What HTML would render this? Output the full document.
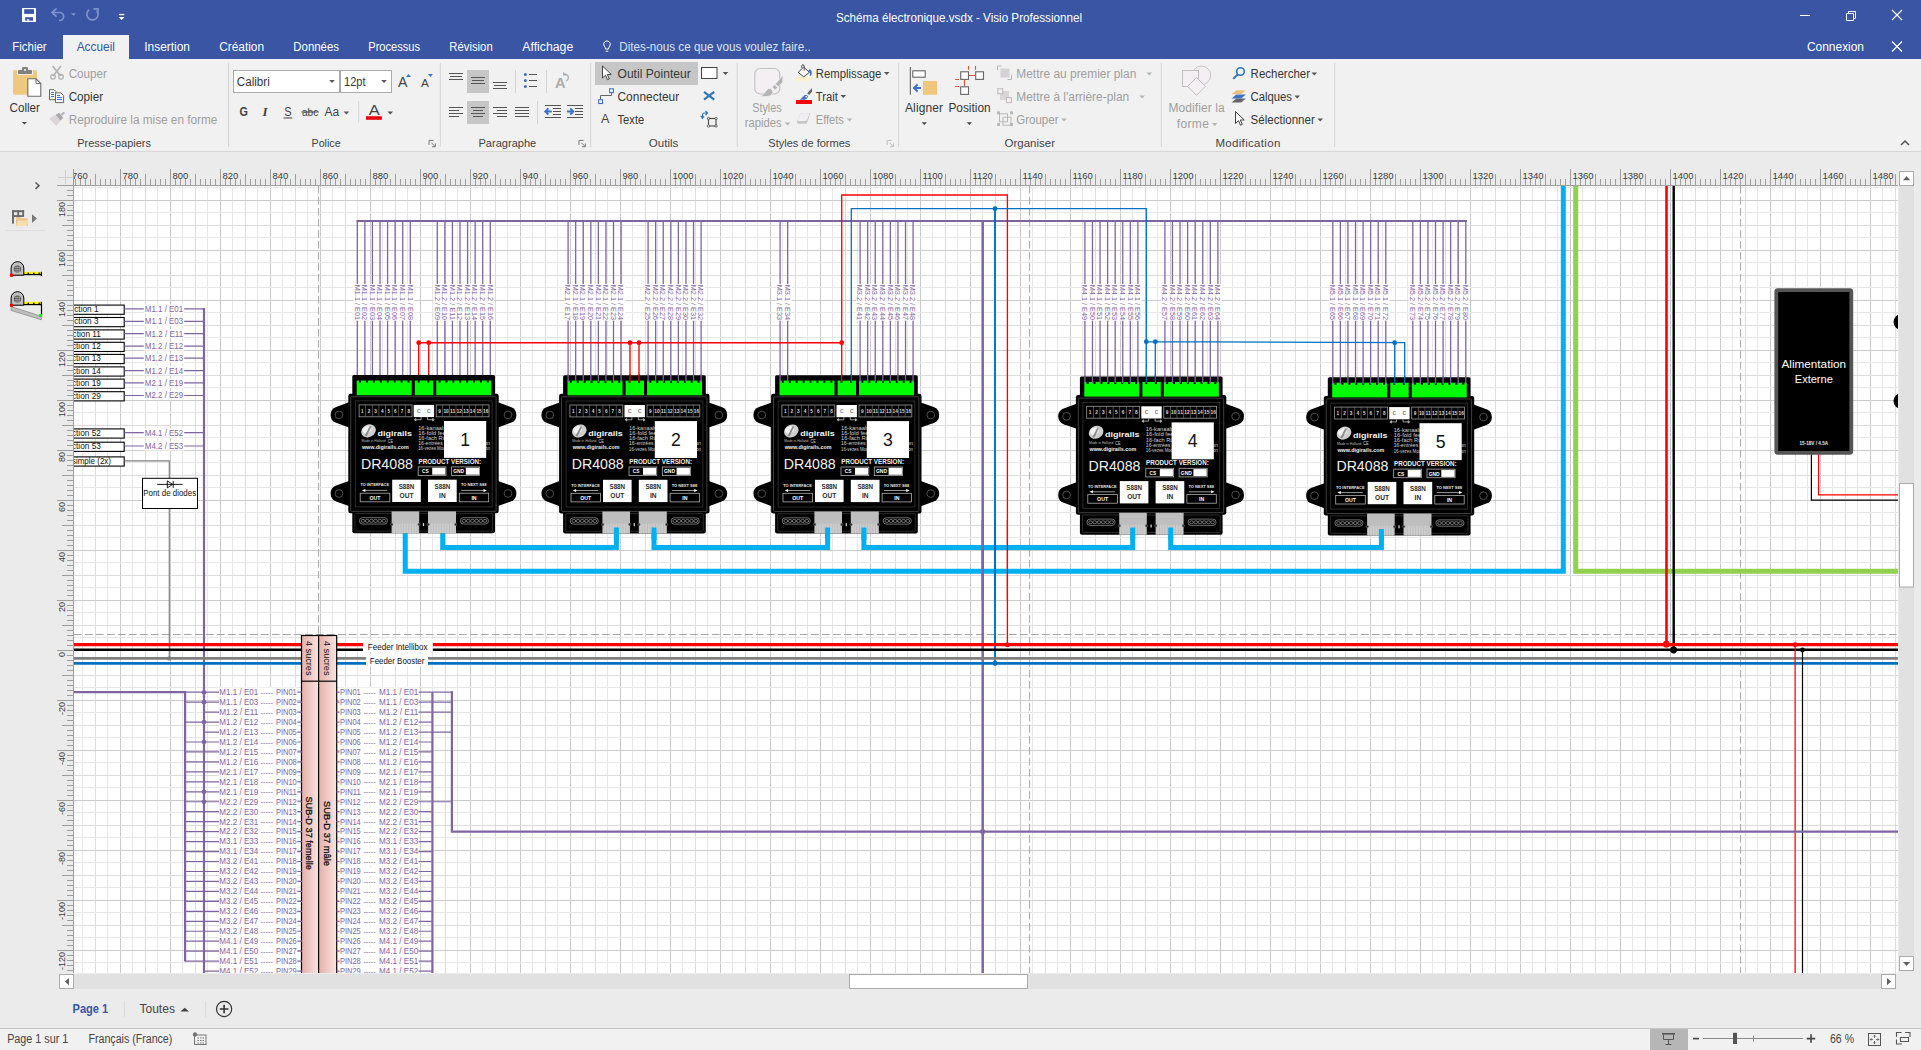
<!DOCTYPE html>
<html lang="fr"><head><meta charset="utf-8"><title>Schéma électronique.vsdx - Visio Professionnel</title>
<style>html,body{margin:0;padding:0;background:#EBEBEB;overflow:hidden}svg{display:block}text{font-family:"Liberation Sans",sans-serif;white-space:pre}</style></head><body>
<svg width="1921" height="1050" viewBox="0 0 1921 1050">
<defs><clipPath id="cv"><rect x="74" y="186" width="1824" height="787"/></clipPath><clipPath id="rclip"><rect x="74" y="165" width="1830" height="21"/></clipPath>
<g id="dr">
<path d="M-3.40,27.25 L-16.18,31.91 A8.4,8.4 0 0 0 -16.18,47.69 L-3.40,52.35 Z" fill="#000"/><circle cx="-13.30" cy="39.80" r="3.85" fill="#000" stroke="#666" stroke-width="0.75"/>
<path d="M145.80,27.25 L158.58,31.91 A8.4,8.4 0 0 1 158.58,47.69 L145.80,52.35 Z" fill="#000"/><circle cx="155.70" cy="39.80" r="3.85" fill="#000" stroke="#666" stroke-width="0.75"/>
<path d="M-3.40,105.85 L-16.18,110.51 A8.4,8.4 0 0 0 -16.18,126.29 L-3.40,130.95 Z" fill="#000"/><circle cx="-13.30" cy="118.40" r="3.85" fill="#000" stroke="#666" stroke-width="0.75"/>
<path d="M145.80,105.85 L158.58,110.51 A8.4,8.4 0 0 1 158.58,126.29 L145.80,130.95 Z" fill="#000"/><circle cx="155.70" cy="118.40" r="3.85" fill="#000" stroke="#666" stroke-width="0.75"/>
<rect x="0.00" y="0.00" width="142.70" height="22.00" fill="#000" rx="1.5"/>
<rect x="-4.00" y="18.60" width="150.40" height="119.60" fill="#000" rx="2.2"/>
<rect x="0.00" y="136.00" width="142.70" height="22.20" fill="#000" rx="2"/>
<rect x="-1.60" y="21.60" width="145.40" height="114.60" fill="none" stroke="#5A5A5A" stroke-width="0.7" rx="1"/>
<rect x="3.00" y="25.80" width="136.80" height="106.00" fill="none" stroke="#3C3C3C" stroke-width="0.7"/>
<rect x="2.60" y="138.50" width="137.60" height="17.50" fill="none" stroke="#3C3C3C" stroke-width="0.7" rx="1"/>
<rect x="4.40" y="5.40" width="55.00" height="14.70" fill="#00FF00"/>
<rect x="62.50" y="5.40" width="18.40" height="14.70" fill="#00FF00"/>
<rect x="83.95" y="5.40" width="55.00" height="14.70" fill="#00FF00"/>
<path d="M6.70,5.2 h2 v2.3 h-2 z M13.63,5.2 h2 v2.3 h-2 z M20.56,5.2 h2 v2.3 h-2 z M27.49,5.2 h2 v2.3 h-2 z M34.42,5.2 h2 v2.3 h-2 z M41.35,5.2 h2 v2.3 h-2 z M48.28,5.2 h2 v2.3 h-2 z M55.21,5.2 h2 v2.3 h-2 z M65.40,5.2 h2 v2.3 h-2 z M75.00,5.2 h2 v2.3 h-2 z M86.30,5.2 h2 v2.3 h-2 z M93.18,5.2 h2 v2.3 h-2 z M100.06,5.2 h2 v2.3 h-2 z M106.94,5.2 h2 v2.3 h-2 z M113.82,5.2 h2 v2.3 h-2 z M120.70,5.2 h2 v2.3 h-2 z M127.58,5.2 h2 v2.3 h-2 z M134.46,5.2 h2 v2.3 h-2 z" fill="#000"/>
<rect x="6.80" y="29.80" width="52.90" height="11.90" fill="none" stroke="#9A9A9A" stroke-width="0.8"/>
<rect x="83.90" y="29.80" width="52.80" height="11.90" fill="none" stroke="#9A9A9A" stroke-width="0.8"/>
<rect x="13.11" y="29.80" width="0.60" height="11.90" fill="#777"/>
<rect x="90.20" y="29.80" width="0.60" height="11.90" fill="#777"/>
<rect x="19.72" y="29.80" width="0.60" height="11.90" fill="#777"/>
<rect x="96.80" y="29.80" width="0.60" height="11.90" fill="#777"/>
<rect x="26.33" y="29.80" width="0.60" height="11.90" fill="#777"/>
<rect x="103.40" y="29.80" width="0.60" height="11.90" fill="#777"/>
<rect x="32.94" y="29.80" width="0.60" height="11.90" fill="#777"/>
<rect x="110.00" y="29.80" width="0.60" height="11.90" fill="#777"/>
<rect x="39.55" y="29.80" width="0.60" height="11.90" fill="#777"/>
<rect x="116.60" y="29.80" width="0.60" height="11.90" fill="#777"/>
<rect x="46.16" y="29.80" width="0.60" height="11.90" fill="#777"/>
<rect x="123.20" y="29.80" width="0.60" height="11.90" fill="#777"/>
<rect x="52.77" y="29.80" width="0.60" height="11.90" fill="#777"/>
<rect x="129.80" y="29.80" width="0.60" height="11.90" fill="#777"/>
<text x="10.1" y="37.9" font-size="4.7" fill="#DADADA" text-anchor="middle" font-weight="bold">1</text>
<text x="87.2" y="37.9" font-size="4.7" fill="#DADADA" text-anchor="middle" font-weight="bold">9</text>
<text x="16.7" y="37.9" font-size="4.7" fill="#DADADA" text-anchor="middle" font-weight="bold">2</text>
<text x="93.8" y="37.9" font-size="4.5" fill="#DADADA" text-anchor="middle" font-weight="bold" textLength="5.4" lengthAdjust="spacingAndGlyphs">10</text>
<text x="23.3" y="37.9" font-size="4.7" fill="#DADADA" text-anchor="middle" font-weight="bold">3</text>
<text x="100.4" y="37.9" font-size="4.5" fill="#DADADA" text-anchor="middle" font-weight="bold" textLength="5.4" lengthAdjust="spacingAndGlyphs">11</text>
<text x="29.9" y="37.9" font-size="4.7" fill="#DADADA" text-anchor="middle" font-weight="bold">4</text>
<text x="107.0" y="37.9" font-size="4.5" fill="#DADADA" text-anchor="middle" font-weight="bold" textLength="5.4" lengthAdjust="spacingAndGlyphs">12</text>
<text x="36.5" y="37.9" font-size="4.7" fill="#DADADA" text-anchor="middle" font-weight="bold">5</text>
<text x="113.6" y="37.9" font-size="4.5" fill="#DADADA" text-anchor="middle" font-weight="bold" textLength="5.4" lengthAdjust="spacingAndGlyphs">13</text>
<text x="43.1" y="37.9" font-size="4.7" fill="#DADADA" text-anchor="middle" font-weight="bold">6</text>
<text x="120.2" y="37.9" font-size="4.5" fill="#DADADA" text-anchor="middle" font-weight="bold" textLength="5.4" lengthAdjust="spacingAndGlyphs">14</text>
<text x="49.8" y="37.9" font-size="4.7" fill="#DADADA" text-anchor="middle" font-weight="bold">7</text>
<text x="126.8" y="37.9" font-size="4.5" fill="#DADADA" text-anchor="middle" font-weight="bold" textLength="5.4" lengthAdjust="spacingAndGlyphs">15</text>
<text x="56.4" y="37.9" font-size="4.7" fill="#DADADA" text-anchor="middle" font-weight="bold">8</text>
<text x="133.4" y="37.9" font-size="4.5" fill="#DADADA" text-anchor="middle" font-weight="bold" textLength="5.4" lengthAdjust="spacingAndGlyphs">16</text>
<rect x="61.40" y="29.80" width="20.40" height="12.20" fill="#fff"/>
<text x="66.6" y="37.9" font-size="5" fill="#7A7A7A" text-anchor="middle" font-weight="bold">C</text>
<text x="76.6" y="37.9" font-size="5" fill="#7A7A7A" text-anchor="middle" font-weight="bold">C</text>
<path d="M68.8,42 v2.6 h-6 M63.6,43.4 l-1.6,1.2 l1.6,1.2 z M75.2,42 v2.6 h6 M80.4,43.4 l1.6,1.2 l-1.6,1.2 z" fill="none" stroke="#ddd" stroke-width="0.7"/>
<ellipse cx="16.2" cy="55.8" rx="7.6" ry="6.2" fill="#CFCFCF" transform="rotate(-28 16.2 55.8)"/>
<ellipse cx="14.6" cy="54.6" rx="4.6" ry="3.4" fill="#F2F2F2" transform="rotate(-28 14.6 54.6)"/>
<path d="M12.5,60.5 l5,-9.5 l1.6,0.6 l-4.6,9.6 z" fill="#8C8C8C"/>
<text x="25.2" y="60.7" font-size="8" fill="#F4F4F4" font-weight="bold" textLength="34.4" lengthAdjust="spacingAndGlyphs">digirails</text>
<text x="9.2" y="67.3" font-size="3.1" fill="#BDBDBD" textLength="24.2" lengthAdjust="spacingAndGlyphs">Made in Holland</text>
<text x="35.4" y="68.1" font-size="4.6" fill="#CFCFCF" textLength="5.4" lengthAdjust="spacingAndGlyphs">CE</text>
<text x="9.6" y="74.3" font-size="5.4" fill="#F0F0F0" font-weight="bold" textLength="46.8" lengthAdjust="spacingAndGlyphs">www.digirails.com</text>
<text x="65.9" y="54.8" font-size="4.7" fill="#D0D0D0" textLength="60.0" lengthAdjust="spacingAndGlyphs">16-kanaals terugmelder</text>
<text x="65.9" y="59.9" font-size="4.7" fill="#D0D0D0" textLength="64.0" lengthAdjust="spacingAndGlyphs">16-fold feedback module</text>
<text x="65.9" y="65.1" font-size="4.7" fill="#D0D0D0" textLength="64.0" lengthAdjust="spacingAndGlyphs">16-fach Rückmeldemodul</text>
<text x="65.9" y="70.2" font-size="4.7" fill="#D0D0D0" textLength="72.0" lengthAdjust="spacingAndGlyphs">16-entrées de rétrosignalisation</text>
<text x="65.9" y="75.4" font-size="4.7" fill="#D0D0D0" textLength="72.0" lengthAdjust="spacingAndGlyphs">16-vezes Modulo de retrosinalizacion</text>
<text x="8.6" y="94.2" font-size="14.6" fill="#F2F2F2" textLength="52.0" lengthAdjust="spacingAndGlyphs">DR4088</text>
<text x="66.2" y="88.9" font-size="6.4" fill="#F2F2F2" font-weight="bold" textLength="62.7" lengthAdjust="spacingAndGlyphs">PRODUCT VERSION:</text>
<rect x="65.90" y="91.80" width="27.80" height="8.60" fill="none" stroke="#B0B0B0" stroke-width="0.8"/>
<rect x="79.90" y="92.60" width="13.10" height="7.00" fill="#fff"/>
<text x="73.0" y="98.3" font-size="4.8" fill="#fff" text-anchor="middle" font-weight="bold">CS</text>
<rect x="99.20" y="91.80" width="28.10" height="8.60" fill="none" stroke="#B0B0B0" stroke-width="0.8"/>
<rect x="113.50" y="92.60" width="13.30" height="7.00" fill="#fff"/>
<text x="106.4" y="98.3" font-size="4.8" fill="#fff" text-anchor="middle" font-weight="bold" textLength="11.0" lengthAdjust="spacingAndGlyphs">GND</text>
<rect x="39.90" y="104.60" width="28.60" height="22.30" fill="#fff"/>
<text x="54.2" y="113.9" font-size="6.6" fill="#2A2A2A" text-anchor="middle" font-weight="bold" textLength="15.6" lengthAdjust="spacingAndGlyphs">S88N</text>
<text x="54.2" y="122.6" font-size="6.6" fill="#2A2A2A" text-anchor="middle" font-weight="bold">OUT</text>
<rect x="75.70" y="104.60" width="28.70" height="22.30" fill="#fff"/>
<text x="90.1" y="113.9" font-size="6.6" fill="#2A2A2A" text-anchor="middle" font-weight="bold" textLength="15.6" lengthAdjust="spacingAndGlyphs">S88N</text>
<text x="90.1" y="122.6" font-size="6.6" fill="#2A2A2A" text-anchor="middle" font-weight="bold">IN</text>
<text x="8.1" y="111.4" font-size="3.9" fill="#E6E6E6" font-weight="bold" textLength="28.6" lengthAdjust="spacingAndGlyphs">TO INTERFACE</text>
<path d="M12,115.3 H35" fill="none" stroke="#ddd" stroke-width="0.7"/>
<path d="M9.6,115.3 l3.4,-1.5 v3 z" fill="#fff"/>
<rect x="7.90" y="118.10" width="29.60" height="8.60" fill="none" stroke="#B0B0B0" stroke-width="0.8"/>
<text x="22.7" y="124.6" font-size="5.2" fill="#fff" text-anchor="middle" font-weight="bold">OUT</text>
<text x="108.6" y="111.4" font-size="3.9" fill="#E6E6E6" font-weight="bold" textLength="25.5" lengthAdjust="spacingAndGlyphs">TO NEXT S88</text>
<path d="M109,115.3 H132" fill="none" stroke="#ddd" stroke-width="0.7"/>
<path d="M134.6,115.3 l-3.4,-1.5 v3 z" fill="#fff"/>
<rect x="107.00" y="118.10" width="29.40" height="8.60" fill="none" stroke="#B0B0B0" stroke-width="0.8"/>
<text x="121.7" y="124.6" font-size="5.2" fill="#fff" text-anchor="middle" font-weight="bold">IN</text>
<rect x="39.30" y="136.30" width="27.60" height="21.90" fill="#BEBEBE"/>
<rect x="40.50" y="148.50" width="0.60" height="9.70" fill="#D6D6D6"/><rect x="42.10" y="148.50" width="0.60" height="9.70" fill="#D6D6D6"/><rect x="43.70" y="148.50" width="0.60" height="9.70" fill="#D6D6D6"/><rect x="45.30" y="148.50" width="0.60" height="9.70" fill="#D6D6D6"/><rect x="46.90" y="148.50" width="0.60" height="9.70" fill="#D6D6D6"/><rect x="48.50" y="148.50" width="0.60" height="9.70" fill="#D6D6D6"/><rect x="50.10" y="148.50" width="0.60" height="9.70" fill="#D6D6D6"/><rect x="51.70" y="148.50" width="0.60" height="9.70" fill="#D6D6D6"/><rect x="53.30" y="148.50" width="0.60" height="9.70" fill="#D6D6D6"/><rect x="54.90" y="148.50" width="0.60" height="9.70" fill="#D6D6D6"/><rect x="56.50" y="148.50" width="0.60" height="9.70" fill="#D6D6D6"/><rect x="58.10" y="148.50" width="0.60" height="9.70" fill="#D6D6D6"/><rect x="59.70" y="148.50" width="0.60" height="9.70" fill="#D6D6D6"/><rect x="61.30" y="148.50" width="0.60" height="9.70" fill="#D6D6D6"/><rect x="62.90" y="148.50" width="0.60" height="9.70" fill="#D6D6D6"/><rect x="64.50" y="148.50" width="0.60" height="9.70" fill="#D6D6D6"/>
<circle cx="39.50" cy="149.30" r="1.20" fill="#222" stroke="#777" stroke-width="0.5"/>
<circle cx="66.70" cy="149.30" r="1.20" fill="#222" stroke="#777" stroke-width="0.5"/>
<rect x="75.70" y="136.30" width="28.00" height="21.90" fill="#BEBEBE"/>
<rect x="76.90" y="148.50" width="0.60" height="9.70" fill="#D6D6D6"/><rect x="78.50" y="148.50" width="0.60" height="9.70" fill="#D6D6D6"/><rect x="80.10" y="148.50" width="0.60" height="9.70" fill="#D6D6D6"/><rect x="81.70" y="148.50" width="0.60" height="9.70" fill="#D6D6D6"/><rect x="83.30" y="148.50" width="0.60" height="9.70" fill="#D6D6D6"/><rect x="84.90" y="148.50" width="0.60" height="9.70" fill="#D6D6D6"/><rect x="86.50" y="148.50" width="0.60" height="9.70" fill="#D6D6D6"/><rect x="88.10" y="148.50" width="0.60" height="9.70" fill="#D6D6D6"/><rect x="89.70" y="148.50" width="0.60" height="9.70" fill="#D6D6D6"/><rect x="91.30" y="148.50" width="0.60" height="9.70" fill="#D6D6D6"/><rect x="92.90" y="148.50" width="0.60" height="9.70" fill="#D6D6D6"/><rect x="94.50" y="148.50" width="0.60" height="9.70" fill="#D6D6D6"/><rect x="96.10" y="148.50" width="0.60" height="9.70" fill="#D6D6D6"/><rect x="97.70" y="148.50" width="0.60" height="9.70" fill="#D6D6D6"/><rect x="99.30" y="148.50" width="0.60" height="9.70" fill="#D6D6D6"/><rect x="100.90" y="148.50" width="0.60" height="9.70" fill="#D6D6D6"/><rect x="102.50" y="148.50" width="0.60" height="9.70" fill="#D6D6D6"/>
<circle cx="75.90" cy="149.30" r="1.20" fill="#222" stroke="#777" stroke-width="0.5"/>
<circle cx="103.50" cy="149.30" r="1.20" fill="#222" stroke="#777" stroke-width="0.5"/>
<rect x="70.60" y="148.00" width="1.20" height="3.00" fill="#ddd"/>
<rect x="7.10" y="142.60" width="28.10" height="6.30" fill="none" stroke="#8A8A8A" stroke-width="0.8" rx="3.1"/>
<ellipse cx="10.7" cy="145.75" rx="1.9" ry="1.5" fill="none" stroke="#9A9A9A" stroke-width="0.7"/>
<ellipse cx="14.9" cy="145.75" rx="1.9" ry="1.5" fill="none" stroke="#9A9A9A" stroke-width="0.7"/>
<ellipse cx="19.1" cy="145.75" rx="1.9" ry="1.5" fill="none" stroke="#9A9A9A" stroke-width="0.7"/>
<ellipse cx="23.3" cy="145.75" rx="1.9" ry="1.5" fill="none" stroke="#9A9A9A" stroke-width="0.7"/>
<ellipse cx="27.5" cy="145.75" rx="1.9" ry="1.5" fill="none" stroke="#9A9A9A" stroke-width="0.7"/>
<ellipse cx="31.7" cy="145.75" rx="1.9" ry="1.5" fill="none" stroke="#9A9A9A" stroke-width="0.7"/>
<rect x="108.10" y="142.60" width="28.10" height="6.30" fill="none" stroke="#8A8A8A" stroke-width="0.8" rx="3.1"/>
<ellipse cx="111.7" cy="145.75" rx="1.9" ry="1.5" fill="none" stroke="#9A9A9A" stroke-width="0.7"/>
<ellipse cx="115.9" cy="145.75" rx="1.9" ry="1.5" fill="none" stroke="#9A9A9A" stroke-width="0.7"/>
<ellipse cx="120.1" cy="145.75" rx="1.9" ry="1.5" fill="none" stroke="#9A9A9A" stroke-width="0.7"/>
<ellipse cx="124.3" cy="145.75" rx="1.9" ry="1.5" fill="none" stroke="#9A9A9A" stroke-width="0.7"/>
<ellipse cx="128.5" cy="145.75" rx="1.9" ry="1.5" fill="none" stroke="#9A9A9A" stroke-width="0.7"/>
<ellipse cx="132.7" cy="145.75" rx="1.9" ry="1.5" fill="none" stroke="#9A9A9A" stroke-width="0.7"/>
</g>
</defs>
<rect x="0.00" y="152.00" width="1921.00" height="898.00" fill="#EBEBEB"/>
<rect x="74.00" y="186.00" width="1824.00" height="787.00" fill="#fff"/>
<g shape-rendering="crispEdges"><rect x="82.00" y="186.00" width="1.00" height="787.00" fill="#E7E7E7"/><rect x="95.00" y="186.00" width="1.00" height="787.00" fill="#DCDCDC"/><rect x="107.00" y="186.00" width="1.00" height="787.00" fill="#E7E7E7"/><rect x="120.00" y="186.00" width="1.00" height="787.00" fill="#CACACA"/><rect x="132.00" y="186.00" width="1.00" height="787.00" fill="#E7E7E7"/><rect x="145.00" y="186.00" width="1.00" height="787.00" fill="#DCDCDC"/><rect x="157.00" y="186.00" width="1.00" height="787.00" fill="#E7E7E7"/><rect x="170.00" y="186.00" width="1.00" height="787.00" fill="#CACACA"/><rect x="182.00" y="186.00" width="1.00" height="787.00" fill="#E7E7E7"/><rect x="195.00" y="186.00" width="1.00" height="787.00" fill="#DCDCDC"/><rect x="207.00" y="186.00" width="1.00" height="787.00" fill="#E7E7E7"/><rect x="220.00" y="186.00" width="1.00" height="787.00" fill="#CACACA"/><rect x="232.00" y="186.00" width="1.00" height="787.00" fill="#E7E7E7"/><rect x="245.00" y="186.00" width="1.00" height="787.00" fill="#DCDCDC"/><rect x="257.00" y="186.00" width="1.00" height="787.00" fill="#E7E7E7"/><rect x="270.00" y="186.00" width="1.00" height="787.00" fill="#CACACA"/><rect x="282.00" y="186.00" width="1.00" height="787.00" fill="#E7E7E7"/><rect x="295.00" y="186.00" width="1.00" height="787.00" fill="#DCDCDC"/><rect x="307.00" y="186.00" width="1.00" height="787.00" fill="#E7E7E7"/><rect x="320.00" y="186.00" width="1.00" height="787.00" fill="#CACACA"/><rect x="332.00" y="186.00" width="1.00" height="787.00" fill="#E7E7E7"/><rect x="345.00" y="186.00" width="1.00" height="787.00" fill="#DCDCDC"/><rect x="357.00" y="186.00" width="1.00" height="787.00" fill="#E7E7E7"/><rect x="370.00" y="186.00" width="1.00" height="787.00" fill="#CACACA"/><rect x="382.00" y="186.00" width="1.00" height="787.00" fill="#E7E7E7"/><rect x="395.00" y="186.00" width="1.00" height="787.00" fill="#DCDCDC"/><rect x="407.00" y="186.00" width="1.00" height="787.00" fill="#E7E7E7"/><rect x="420.00" y="186.00" width="1.00" height="787.00" fill="#CACACA"/><rect x="432.00" y="186.00" width="1.00" height="787.00" fill="#E7E7E7"/><rect x="445.00" y="186.00" width="1.00" height="787.00" fill="#DCDCDC"/><rect x="457.00" y="186.00" width="1.00" height="787.00" fill="#E7E7E7"/><rect x="470.00" y="186.00" width="1.00" height="787.00" fill="#CACACA"/><rect x="482.00" y="186.00" width="1.00" height="787.00" fill="#E7E7E7"/><rect x="495.00" y="186.00" width="1.00" height="787.00" fill="#DCDCDC"/><rect x="507.00" y="186.00" width="1.00" height="787.00" fill="#E7E7E7"/><rect x="520.00" y="186.00" width="1.00" height="787.00" fill="#CACACA"/><rect x="532.00" y="186.00" width="1.00" height="787.00" fill="#E7E7E7"/><rect x="545.00" y="186.00" width="1.00" height="787.00" fill="#DCDCDC"/><rect x="557.00" y="186.00" width="1.00" height="787.00" fill="#E7E7E7"/><rect x="570.00" y="186.00" width="1.00" height="787.00" fill="#CACACA"/><rect x="582.00" y="186.00" width="1.00" height="787.00" fill="#E7E7E7"/><rect x="595.00" y="186.00" width="1.00" height="787.00" fill="#DCDCDC"/><rect x="607.00" y="186.00" width="1.00" height="787.00" fill="#E7E7E7"/><rect x="620.00" y="186.00" width="1.00" height="787.00" fill="#CACACA"/><rect x="632.00" y="186.00" width="1.00" height="787.00" fill="#E7E7E7"/><rect x="645.00" y="186.00" width="1.00" height="787.00" fill="#DCDCDC"/><rect x="657.00" y="186.00" width="1.00" height="787.00" fill="#E7E7E7"/><rect x="670.00" y="186.00" width="1.00" height="787.00" fill="#CACACA"/><rect x="682.00" y="186.00" width="1.00" height="787.00" fill="#E7E7E7"/><rect x="695.00" y="186.00" width="1.00" height="787.00" fill="#DCDCDC"/><rect x="707.00" y="186.00" width="1.00" height="787.00" fill="#E7E7E7"/><rect x="720.00" y="186.00" width="1.00" height="787.00" fill="#CACACA"/><rect x="732.00" y="186.00" width="1.00" height="787.00" fill="#E7E7E7"/><rect x="745.00" y="186.00" width="1.00" height="787.00" fill="#DCDCDC"/><rect x="757.00" y="186.00" width="1.00" height="787.00" fill="#E7E7E7"/><rect x="770.00" y="186.00" width="1.00" height="787.00" fill="#CACACA"/><rect x="782.00" y="186.00" width="1.00" height="787.00" fill="#E7E7E7"/><rect x="795.00" y="186.00" width="1.00" height="787.00" fill="#DCDCDC"/><rect x="807.00" y="186.00" width="1.00" height="787.00" fill="#E7E7E7"/><rect x="820.00" y="186.00" width="1.00" height="787.00" fill="#CACACA"/><rect x="832.00" y="186.00" width="1.00" height="787.00" fill="#E7E7E7"/><rect x="845.00" y="186.00" width="1.00" height="787.00" fill="#DCDCDC"/><rect x="857.00" y="186.00" width="1.00" height="787.00" fill="#E7E7E7"/><rect x="870.00" y="186.00" width="1.00" height="787.00" fill="#CACACA"/><rect x="882.00" y="186.00" width="1.00" height="787.00" fill="#E7E7E7"/><rect x="895.00" y="186.00" width="1.00" height="787.00" fill="#DCDCDC"/><rect x="907.00" y="186.00" width="1.00" height="787.00" fill="#E7E7E7"/><rect x="920.00" y="186.00" width="1.00" height="787.00" fill="#CACACA"/><rect x="932.00" y="186.00" width="1.00" height="787.00" fill="#E7E7E7"/><rect x="945.00" y="186.00" width="1.00" height="787.00" fill="#DCDCDC"/><rect x="957.00" y="186.00" width="1.00" height="787.00" fill="#E7E7E7"/><rect x="970.00" y="186.00" width="1.00" height="787.00" fill="#CACACA"/><rect x="982.00" y="186.00" width="1.00" height="787.00" fill="#E7E7E7"/><rect x="995.00" y="186.00" width="1.00" height="787.00" fill="#DCDCDC"/><rect x="1007.00" y="186.00" width="1.00" height="787.00" fill="#E7E7E7"/><rect x="1020.00" y="186.00" width="1.00" height="787.00" fill="#CACACA"/><rect x="1032.00" y="186.00" width="1.00" height="787.00" fill="#E7E7E7"/><rect x="1045.00" y="186.00" width="1.00" height="787.00" fill="#DCDCDC"/><rect x="1057.00" y="186.00" width="1.00" height="787.00" fill="#E7E7E7"/><rect x="1070.00" y="186.00" width="1.00" height="787.00" fill="#CACACA"/><rect x="1082.00" y="186.00" width="1.00" height="787.00" fill="#E7E7E7"/><rect x="1095.00" y="186.00" width="1.00" height="787.00" fill="#DCDCDC"/><rect x="1107.00" y="186.00" width="1.00" height="787.00" fill="#E7E7E7"/><rect x="1120.00" y="186.00" width="1.00" height="787.00" fill="#CACACA"/><rect x="1132.00" y="186.00" width="1.00" height="787.00" fill="#E7E7E7"/><rect x="1145.00" y="186.00" width="1.00" height="787.00" fill="#DCDCDC"/><rect x="1157.00" y="186.00" width="1.00" height="787.00" fill="#E7E7E7"/><rect x="1170.00" y="186.00" width="1.00" height="787.00" fill="#CACACA"/><rect x="1182.00" y="186.00" width="1.00" height="787.00" fill="#E7E7E7"/><rect x="1195.00" y="186.00" width="1.00" height="787.00" fill="#DCDCDC"/><rect x="1207.00" y="186.00" width="1.00" height="787.00" fill="#E7E7E7"/><rect x="1220.00" y="186.00" width="1.00" height="787.00" fill="#CACACA"/><rect x="1232.00" y="186.00" width="1.00" height="787.00" fill="#E7E7E7"/><rect x="1245.00" y="186.00" width="1.00" height="787.00" fill="#DCDCDC"/><rect x="1257.00" y="186.00" width="1.00" height="787.00" fill="#E7E7E7"/><rect x="1270.00" y="186.00" width="1.00" height="787.00" fill="#CACACA"/><rect x="1282.00" y="186.00" width="1.00" height="787.00" fill="#E7E7E7"/><rect x="1295.00" y="186.00" width="1.00" height="787.00" fill="#DCDCDC"/><rect x="1307.00" y="186.00" width="1.00" height="787.00" fill="#E7E7E7"/><rect x="1320.00" y="186.00" width="1.00" height="787.00" fill="#CACACA"/><rect x="1332.00" y="186.00" width="1.00" height="787.00" fill="#E7E7E7"/><rect x="1345.00" y="186.00" width="1.00" height="787.00" fill="#DCDCDC"/><rect x="1357.00" y="186.00" width="1.00" height="787.00" fill="#E7E7E7"/><rect x="1370.00" y="186.00" width="1.00" height="787.00" fill="#CACACA"/><rect x="1382.00" y="186.00" width="1.00" height="787.00" fill="#E7E7E7"/><rect x="1395.00" y="186.00" width="1.00" height="787.00" fill="#DCDCDC"/><rect x="1407.00" y="186.00" width="1.00" height="787.00" fill="#E7E7E7"/><rect x="1420.00" y="186.00" width="1.00" height="787.00" fill="#CACACA"/><rect x="1432.00" y="186.00" width="1.00" height="787.00" fill="#E7E7E7"/><rect x="1445.00" y="186.00" width="1.00" height="787.00" fill="#DCDCDC"/><rect x="1457.00" y="186.00" width="1.00" height="787.00" fill="#E7E7E7"/><rect x="1470.00" y="186.00" width="1.00" height="787.00" fill="#CACACA"/><rect x="1482.00" y="186.00" width="1.00" height="787.00" fill="#E7E7E7"/><rect x="1495.00" y="186.00" width="1.00" height="787.00" fill="#DCDCDC"/><rect x="1507.00" y="186.00" width="1.00" height="787.00" fill="#E7E7E7"/><rect x="1520.00" y="186.00" width="1.00" height="787.00" fill="#CACACA"/><rect x="1532.00" y="186.00" width="1.00" height="787.00" fill="#E7E7E7"/><rect x="1545.00" y="186.00" width="1.00" height="787.00" fill="#DCDCDC"/><rect x="1557.00" y="186.00" width="1.00" height="787.00" fill="#E7E7E7"/><rect x="1570.00" y="186.00" width="1.00" height="787.00" fill="#CACACA"/><rect x="1582.00" y="186.00" width="1.00" height="787.00" fill="#E7E7E7"/><rect x="1595.00" y="186.00" width="1.00" height="787.00" fill="#DCDCDC"/><rect x="1607.00" y="186.00" width="1.00" height="787.00" fill="#E7E7E7"/><rect x="1620.00" y="186.00" width="1.00" height="787.00" fill="#CACACA"/><rect x="1632.00" y="186.00" width="1.00" height="787.00" fill="#E7E7E7"/><rect x="1645.00" y="186.00" width="1.00" height="787.00" fill="#DCDCDC"/><rect x="1657.00" y="186.00" width="1.00" height="787.00" fill="#E7E7E7"/><rect x="1670.00" y="186.00" width="1.00" height="787.00" fill="#CACACA"/><rect x="1682.00" y="186.00" width="1.00" height="787.00" fill="#E7E7E7"/><rect x="1695.00" y="186.00" width="1.00" height="787.00" fill="#DCDCDC"/><rect x="1707.00" y="186.00" width="1.00" height="787.00" fill="#E7E7E7"/><rect x="1720.00" y="186.00" width="1.00" height="787.00" fill="#CACACA"/><rect x="1732.00" y="186.00" width="1.00" height="787.00" fill="#E7E7E7"/><rect x="1745.00" y="186.00" width="1.00" height="787.00" fill="#DCDCDC"/><rect x="1757.00" y="186.00" width="1.00" height="787.00" fill="#E7E7E7"/><rect x="1770.00" y="186.00" width="1.00" height="787.00" fill="#CACACA"/><rect x="1782.00" y="186.00" width="1.00" height="787.00" fill="#E7E7E7"/><rect x="1795.00" y="186.00" width="1.00" height="787.00" fill="#DCDCDC"/><rect x="1807.00" y="186.00" width="1.00" height="787.00" fill="#E7E7E7"/><rect x="1820.00" y="186.00" width="1.00" height="787.00" fill="#CACACA"/><rect x="1832.00" y="186.00" width="1.00" height="787.00" fill="#E7E7E7"/><rect x="1845.00" y="186.00" width="1.00" height="787.00" fill="#DCDCDC"/><rect x="1857.00" y="186.00" width="1.00" height="787.00" fill="#E7E7E7"/><rect x="1870.00" y="186.00" width="1.00" height="787.00" fill="#CACACA"/><rect x="1882.00" y="186.00" width="1.00" height="787.00" fill="#E7E7E7"/><rect x="1895.00" y="186.00" width="1.00" height="787.00" fill="#DCDCDC"/><rect x="74.00" y="962.00" width="1824.00" height="1.00" fill="#E7E7E7"/><rect x="74.00" y="950.00" width="1824.00" height="1.00" fill="#CCCCCC"/><rect x="74.00" y="937.00" width="1824.00" height="1.00" fill="#E7E7E7"/><rect x="74.00" y="925.00" width="1824.00" height="1.00" fill="#DCDCDC"/><rect x="74.00" y="912.00" width="1824.00" height="1.00" fill="#E7E7E7"/><rect x="74.00" y="900.00" width="1824.00" height="1.00" fill="#CCCCCC"/><rect x="74.00" y="887.00" width="1824.00" height="1.00" fill="#E7E7E7"/><rect x="74.00" y="875.00" width="1824.00" height="1.00" fill="#DCDCDC"/><rect x="74.00" y="862.00" width="1824.00" height="1.00" fill="#E7E7E7"/><rect x="74.00" y="850.00" width="1824.00" height="1.00" fill="#CCCCCC"/><rect x="74.00" y="837.00" width="1824.00" height="1.00" fill="#E7E7E7"/><rect x="74.00" y="825.00" width="1824.00" height="1.00" fill="#DCDCDC"/><rect x="74.00" y="812.00" width="1824.00" height="1.00" fill="#E7E7E7"/><rect x="74.00" y="800.00" width="1824.00" height="1.00" fill="#CCCCCC"/><rect x="74.00" y="787.00" width="1824.00" height="1.00" fill="#E7E7E7"/><rect x="74.00" y="775.00" width="1824.00" height="1.00" fill="#DCDCDC"/><rect x="74.00" y="762.00" width="1824.00" height="1.00" fill="#E7E7E7"/><rect x="74.00" y="750.00" width="1824.00" height="1.00" fill="#CCCCCC"/><rect x="74.00" y="737.00" width="1824.00" height="1.00" fill="#E7E7E7"/><rect x="74.00" y="725.00" width="1824.00" height="1.00" fill="#DCDCDC"/><rect x="74.00" y="712.00" width="1824.00" height="1.00" fill="#E7E7E7"/><rect x="74.00" y="700.00" width="1824.00" height="1.00" fill="#CCCCCC"/><rect x="74.00" y="687.00" width="1824.00" height="1.00" fill="#E7E7E7"/><rect x="74.00" y="675.00" width="1824.00" height="1.00" fill="#DCDCDC"/><rect x="74.00" y="662.00" width="1824.00" height="1.00" fill="#E7E7E7"/><rect x="74.00" y="650.00" width="1824.00" height="1.00" fill="#CCCCCC"/><rect x="74.00" y="637.00" width="1824.00" height="1.00" fill="#E7E7E7"/><rect x="74.00" y="625.00" width="1824.00" height="1.00" fill="#DCDCDC"/><rect x="74.00" y="612.00" width="1824.00" height="1.00" fill="#E7E7E7"/><rect x="74.00" y="600.00" width="1824.00" height="1.00" fill="#CCCCCC"/><rect x="74.00" y="587.00" width="1824.00" height="1.00" fill="#E7E7E7"/><rect x="74.00" y="575.00" width="1824.00" height="1.00" fill="#DCDCDC"/><rect x="74.00" y="562.00" width="1824.00" height="1.00" fill="#E7E7E7"/><rect x="74.00" y="550.00" width="1824.00" height="1.00" fill="#CCCCCC"/><rect x="74.00" y="537.00" width="1824.00" height="1.00" fill="#E7E7E7"/><rect x="74.00" y="525.00" width="1824.00" height="1.00" fill="#DCDCDC"/><rect x="74.00" y="512.00" width="1824.00" height="1.00" fill="#E7E7E7"/><rect x="74.00" y="500.00" width="1824.00" height="1.00" fill="#CCCCCC"/><rect x="74.00" y="487.00" width="1824.00" height="1.00" fill="#E7E7E7"/><rect x="74.00" y="475.00" width="1824.00" height="1.00" fill="#DCDCDC"/><rect x="74.00" y="462.00" width="1824.00" height="1.00" fill="#E7E7E7"/><rect x="74.00" y="450.00" width="1824.00" height="1.00" fill="#CCCCCC"/><rect x="74.00" y="437.00" width="1824.00" height="1.00" fill="#E7E7E7"/><rect x="74.00" y="425.00" width="1824.00" height="1.00" fill="#DCDCDC"/><rect x="74.00" y="412.00" width="1824.00" height="1.00" fill="#E7E7E7"/><rect x="74.00" y="400.00" width="1824.00" height="1.00" fill="#CCCCCC"/><rect x="74.00" y="387.00" width="1824.00" height="1.00" fill="#E7E7E7"/><rect x="74.00" y="375.00" width="1824.00" height="1.00" fill="#DCDCDC"/><rect x="74.00" y="362.00" width="1824.00" height="1.00" fill="#E7E7E7"/><rect x="74.00" y="350.00" width="1824.00" height="1.00" fill="#CCCCCC"/><rect x="74.00" y="337.00" width="1824.00" height="1.00" fill="#E7E7E7"/><rect x="74.00" y="325.00" width="1824.00" height="1.00" fill="#DCDCDC"/><rect x="74.00" y="312.00" width="1824.00" height="1.00" fill="#E7E7E7"/><rect x="74.00" y="300.00" width="1824.00" height="1.00" fill="#CCCCCC"/><rect x="74.00" y="287.00" width="1824.00" height="1.00" fill="#E7E7E7"/><rect x="74.00" y="275.00" width="1824.00" height="1.00" fill="#DCDCDC"/><rect x="74.00" y="262.00" width="1824.00" height="1.00" fill="#E7E7E7"/><rect x="74.00" y="250.00" width="1824.00" height="1.00" fill="#CCCCCC"/><rect x="74.00" y="237.00" width="1824.00" height="1.00" fill="#E7E7E7"/><rect x="74.00" y="225.00" width="1824.00" height="1.00" fill="#DCDCDC"/><rect x="74.00" y="212.00" width="1824.00" height="1.00" fill="#E7E7E7"/><rect x="74.00" y="200.00" width="1824.00" height="1.00" fill="#CCCCCC"/><rect x="74.00" y="187.00" width="1824.00" height="1.00" fill="#E7E7E7"/></g>
<line x1="318.60" y1="186.00" x2="318.60" y2="973.00" stroke="#A6A6A6" stroke-width="1" stroke-dasharray="7.6 3.4"/>
<line x1="1029.60" y1="186.00" x2="1029.60" y2="973.00" stroke="#A6A6A6" stroke-width="1" stroke-dasharray="7.6 3.4"/>
<line x1="1740.60" y1="186.00" x2="1740.60" y2="973.00" stroke="#A6A6A6" stroke-width="1" stroke-dasharray="7.6 3.4"/>
<line x1="74.00" y1="634.50" x2="1898.00" y2="634.50" stroke="#A6A6A6" stroke-width="1" stroke-dasharray="7.6 3.4"/>
<g clip-path="url(#cv)">
<rect x="60.00" y="305.10" width="64.20" height="9.20" fill="#fff" stroke="#000" stroke-width="1.1"/>
<text x="98.6" y="311.9" font-size="8.6" fill="#111" text-anchor="end" textLength="34.5" lengthAdjust="spacingAndGlyphs">Section 1</text>
<line x1="124.50" y1="308.90" x2="204.00" y2="308.90" stroke="#8064A2" stroke-width="1.2"/>
<rect x="143.80" y="304.40" width="40.40" height="9.00" fill="#fff"/>
<text x="144.8" y="311.8" font-size="8.4" fill="#8064A2" textLength="38.4" lengthAdjust="spacingAndGlyphs">M1.1 / E01</text>
<rect x="60.00" y="317.50" width="64.20" height="9.20" fill="#fff" stroke="#000" stroke-width="1.1"/>
<text x="98.6" y="324.3" font-size="8.6" fill="#111" text-anchor="end" textLength="34.5" lengthAdjust="spacingAndGlyphs">Section 3</text>
<line x1="124.50" y1="321.30" x2="204.00" y2="321.30" stroke="#8064A2" stroke-width="1.2"/>
<rect x="143.80" y="316.80" width="40.40" height="9.00" fill="#fff"/>
<text x="144.8" y="324.2" font-size="8.4" fill="#8064A2" textLength="38.4" lengthAdjust="spacingAndGlyphs">M1.1 / E03</text>
<rect x="60.00" y="329.90" width="64.20" height="9.20" fill="#fff" stroke="#000" stroke-width="1.1"/>
<text x="100.9" y="336.7" font-size="8.6" fill="#111" text-anchor="end" textLength="38.5" lengthAdjust="spacingAndGlyphs">Section 11</text>
<line x1="124.50" y1="333.70" x2="204.00" y2="333.70" stroke="#8064A2" stroke-width="1.2"/>
<rect x="143.80" y="329.20" width="40.40" height="9.00" fill="#fff"/>
<text x="144.8" y="336.6" font-size="8.4" fill="#8064A2" textLength="38.4" lengthAdjust="spacingAndGlyphs">M1.2 / E11</text>
<rect x="60.00" y="342.30" width="64.20" height="9.20" fill="#fff" stroke="#000" stroke-width="1.1"/>
<text x="100.9" y="349.1" font-size="8.6" fill="#111" text-anchor="end" textLength="39.1" lengthAdjust="spacingAndGlyphs">Section 12</text>
<line x1="124.50" y1="346.10" x2="204.00" y2="346.10" stroke="#8064A2" stroke-width="1.2"/>
<rect x="143.80" y="341.60" width="40.40" height="9.00" fill="#fff"/>
<text x="144.8" y="349.0" font-size="8.4" fill="#8064A2" textLength="38.4" lengthAdjust="spacingAndGlyphs">M1.2 / E12</text>
<rect x="60.00" y="354.40" width="64.20" height="9.20" fill="#fff" stroke="#000" stroke-width="1.1"/>
<text x="100.9" y="361.2" font-size="8.6" fill="#111" text-anchor="end" textLength="39.1" lengthAdjust="spacingAndGlyphs">Section 13</text>
<line x1="124.50" y1="358.20" x2="204.00" y2="358.20" stroke="#8064A2" stroke-width="1.2"/>
<rect x="143.80" y="353.70" width="40.40" height="9.00" fill="#fff"/>
<text x="144.8" y="361.1" font-size="8.4" fill="#8064A2" textLength="38.4" lengthAdjust="spacingAndGlyphs">M1.2 / E13</text>
<rect x="60.00" y="366.90" width="64.20" height="9.20" fill="#fff" stroke="#000" stroke-width="1.1"/>
<text x="100.9" y="373.7" font-size="8.6" fill="#111" text-anchor="end" textLength="39.1" lengthAdjust="spacingAndGlyphs">Section 14</text>
<line x1="124.50" y1="370.70" x2="204.00" y2="370.70" stroke="#8064A2" stroke-width="1.2"/>
<rect x="143.80" y="366.20" width="40.40" height="9.00" fill="#fff"/>
<text x="144.8" y="373.6" font-size="8.4" fill="#8064A2" textLength="38.4" lengthAdjust="spacingAndGlyphs">M1.2 / E14</text>
<rect x="60.00" y="379.10" width="64.20" height="9.20" fill="#fff" stroke="#000" stroke-width="1.1"/>
<text x="100.9" y="385.9" font-size="8.6" fill="#111" text-anchor="end" textLength="39.1" lengthAdjust="spacingAndGlyphs">Section 19</text>
<line x1="124.50" y1="382.90" x2="204.00" y2="382.90" stroke="#8064A2" stroke-width="1.2"/>
<rect x="143.80" y="378.40" width="40.40" height="9.00" fill="#fff"/>
<text x="144.8" y="385.8" font-size="8.4" fill="#8064A2" textLength="38.4" lengthAdjust="spacingAndGlyphs">M2.1 / E19</text>
<rect x="60.00" y="391.70" width="64.20" height="9.20" fill="#fff" stroke="#000" stroke-width="1.1"/>
<text x="100.9" y="398.5" font-size="8.6" fill="#111" text-anchor="end" textLength="39.1" lengthAdjust="spacingAndGlyphs">Section 29</text>
<line x1="124.50" y1="395.50" x2="204.00" y2="395.50" stroke="#8064A2" stroke-width="1.2"/>
<rect x="143.80" y="391.00" width="40.40" height="9.00" fill="#fff"/>
<text x="144.8" y="398.4" font-size="8.4" fill="#8064A2" textLength="38.4" lengthAdjust="spacingAndGlyphs">M2.2 / E29</text>
<rect x="60.00" y="428.90" width="64.20" height="9.20" fill="#fff" stroke="#000" stroke-width="1.1"/>
<text x="100.9" y="435.7" font-size="8.6" fill="#111" text-anchor="end" textLength="39.1" lengthAdjust="spacingAndGlyphs">Section 52</text>
<line x1="124.50" y1="432.70" x2="204.00" y2="432.70" stroke="#8064A2" stroke-width="1.2"/>
<rect x="143.80" y="428.20" width="40.40" height="9.00" fill="#fff"/>
<text x="144.8" y="435.6" font-size="8.4" fill="#8064A2" textLength="38.4" lengthAdjust="spacingAndGlyphs">M4.1 / E52</text>
<rect x="60.00" y="442.20" width="64.20" height="9.20" fill="#fff" stroke="#000" stroke-width="1.1"/>
<text x="100.9" y="449.0" font-size="8.6" fill="#111" text-anchor="end" textLength="39.1" lengthAdjust="spacingAndGlyphs">Section 53</text>
<line x1="124.50" y1="446.00" x2="204.00" y2="446.00" stroke="#8064A2" stroke-width="1.2"/>
<rect x="143.80" y="441.50" width="40.40" height="9.00" fill="#fff"/>
<text x="144.8" y="448.9" font-size="8.4" fill="#8064A2" textLength="38.4" lengthAdjust="spacingAndGlyphs">M4.2 / E53</text>
<rect x="60.00" y="456.90" width="64.20" height="9.20" fill="#fff" stroke="#000" stroke-width="1.1"/>
<text x="111.0" y="463.8" font-size="8.6" fill="#111" text-anchor="end" textLength="39.1" lengthAdjust="spacingAndGlyphs">simple (2x)</text>
<path d="M124.5,460.9 H169.3 V478 M169.3,508.7 V658.3" fill="none" stroke="#7F7F7F" stroke-width="1.2"/>
<rect x="142.50" y="478.30" width="55.00" height="30.20" fill="#fff" stroke="#000" stroke-width="1"/>
<path d="M157.2,484.4 H182.6 M167.3,480.9 v7 l5.4,-3.5 z M173.2,480.9 v7" fill="none" stroke="#000" stroke-width="0.9"/>
<text x="169.7" y="495.9" font-size="8.4" fill="#111" text-anchor="middle" textLength="53.0" lengthAdjust="spacingAndGlyphs">Pont de diodes</text>
<line x1="204.00" y1="308.00" x2="204.00" y2="973.00" stroke="#8064A2" stroke-width="2.2"/>
<line x1="356.50" y1="221.00" x2="1467.00" y2="221.00" stroke="#8064A2" stroke-width="2.2"/>
<line x1="357.30" y1="221.00" x2="357.30" y2="382.10" stroke="#8064A2" stroke-width="1.3"/>
<rect x="353.40" y="284.00" width="7.80" height="36.60" fill="#fff"/><text transform="translate(354.55,284.8) rotate(90)" font-size="7.7" fill="#8064A2" textLength="35.2" lengthAdjust="spacingAndGlyphs">M1.1 / E01</text>
<line x1="364.87" y1="221.00" x2="364.87" y2="382.10" stroke="#8064A2" stroke-width="1.3"/>
<rect x="360.97" y="284.00" width="7.80" height="36.60" fill="#fff"/><text transform="translate(362.12,284.8) rotate(90)" font-size="7.7" fill="#8064A2" textLength="35.2" lengthAdjust="spacingAndGlyphs">M1.1 / E02</text>
<line x1="372.44" y1="221.00" x2="372.44" y2="382.10" stroke="#8064A2" stroke-width="1.3"/>
<rect x="368.54" y="284.00" width="7.80" height="36.60" fill="#fff"/><text transform="translate(369.69,284.8) rotate(90)" font-size="7.7" fill="#8064A2" textLength="35.2" lengthAdjust="spacingAndGlyphs">M1.1 / E03</text>
<line x1="380.01" y1="221.00" x2="380.01" y2="382.10" stroke="#8064A2" stroke-width="1.3"/>
<rect x="376.11" y="284.00" width="7.80" height="36.60" fill="#fff"/><text transform="translate(377.26,284.8) rotate(90)" font-size="7.7" fill="#8064A2" textLength="35.2" lengthAdjust="spacingAndGlyphs">M1.1 / E04</text>
<line x1="387.58" y1="221.00" x2="387.58" y2="382.10" stroke="#8064A2" stroke-width="1.3"/>
<rect x="383.68" y="284.00" width="7.80" height="36.60" fill="#fff"/><text transform="translate(384.83,284.8) rotate(90)" font-size="7.7" fill="#8064A2" textLength="35.2" lengthAdjust="spacingAndGlyphs">M1.1 / E05</text>
<line x1="395.15" y1="221.00" x2="395.15" y2="382.10" stroke="#8064A2" stroke-width="1.3"/>
<rect x="391.25" y="284.00" width="7.80" height="36.60" fill="#fff"/><text transform="translate(392.40,284.8) rotate(90)" font-size="7.7" fill="#8064A2" textLength="35.2" lengthAdjust="spacingAndGlyphs">M1.1 / E06</text>
<line x1="402.72" y1="221.00" x2="402.72" y2="382.10" stroke="#8064A2" stroke-width="1.3"/>
<rect x="398.82" y="284.00" width="7.80" height="36.60" fill="#fff"/><text transform="translate(399.97,284.8) rotate(90)" font-size="7.7" fill="#8064A2" textLength="35.2" lengthAdjust="spacingAndGlyphs">M1.1 / E07</text>
<line x1="410.29" y1="221.00" x2="410.29" y2="382.10" stroke="#8064A2" stroke-width="1.3"/>
<rect x="406.39" y="284.00" width="7.80" height="36.60" fill="#fff"/><text transform="translate(407.54,284.8) rotate(90)" font-size="7.7" fill="#8064A2" textLength="35.2" lengthAdjust="spacingAndGlyphs">M1.1 / E08</text>
<line x1="437.30" y1="221.00" x2="437.30" y2="382.10" stroke="#8064A2" stroke-width="1.3"/>
<rect x="433.40" y="284.00" width="7.80" height="36.60" fill="#fff"/><text transform="translate(434.55,284.8) rotate(90)" font-size="7.7" fill="#8064A2" textLength="35.2" lengthAdjust="spacingAndGlyphs">M1.2 / E09</text>
<line x1="444.87" y1="221.00" x2="444.87" y2="382.10" stroke="#8064A2" stroke-width="1.3"/>
<rect x="440.97" y="284.00" width="7.80" height="36.60" fill="#fff"/><text transform="translate(442.12,284.8) rotate(90)" font-size="7.7" fill="#8064A2" textLength="35.2" lengthAdjust="spacingAndGlyphs">M1.2 / E10</text>
<line x1="452.44" y1="221.00" x2="452.44" y2="382.10" stroke="#8064A2" stroke-width="1.3"/>
<rect x="448.54" y="284.00" width="7.80" height="36.60" fill="#fff"/><text transform="translate(449.69,284.8) rotate(90)" font-size="7.7" fill="#8064A2" textLength="35.2" lengthAdjust="spacingAndGlyphs">M1.2 / E11</text>
<line x1="460.01" y1="221.00" x2="460.01" y2="382.10" stroke="#8064A2" stroke-width="1.3"/>
<rect x="456.11" y="284.00" width="7.80" height="36.60" fill="#fff"/><text transform="translate(457.26,284.8) rotate(90)" font-size="7.7" fill="#8064A2" textLength="35.2" lengthAdjust="spacingAndGlyphs">M1.2 / E12</text>
<line x1="467.58" y1="221.00" x2="467.58" y2="382.10" stroke="#8064A2" stroke-width="1.3"/>
<rect x="463.68" y="284.00" width="7.80" height="36.60" fill="#fff"/><text transform="translate(464.83,284.8) rotate(90)" font-size="7.7" fill="#8064A2" textLength="35.2" lengthAdjust="spacingAndGlyphs">M1.2 / E13</text>
<line x1="475.15" y1="221.00" x2="475.15" y2="382.10" stroke="#8064A2" stroke-width="1.3"/>
<rect x="471.25" y="284.00" width="7.80" height="36.60" fill="#fff"/><text transform="translate(472.40,284.8) rotate(90)" font-size="7.7" fill="#8064A2" textLength="35.2" lengthAdjust="spacingAndGlyphs">M1.2 / E14</text>
<line x1="482.72" y1="221.00" x2="482.72" y2="382.10" stroke="#8064A2" stroke-width="1.3"/>
<rect x="478.82" y="284.00" width="7.80" height="36.60" fill="#fff"/><text transform="translate(479.97,284.8) rotate(90)" font-size="7.7" fill="#8064A2" textLength="35.2" lengthAdjust="spacingAndGlyphs">M1.2 / E15</text>
<line x1="490.29" y1="221.00" x2="490.29" y2="382.10" stroke="#8064A2" stroke-width="1.3"/>
<rect x="486.39" y="284.00" width="7.80" height="36.60" fill="#fff"/><text transform="translate(487.54,284.8) rotate(90)" font-size="7.7" fill="#8064A2" textLength="35.2" lengthAdjust="spacingAndGlyphs">M1.2 / E16</text>
<line x1="568.10" y1="221.00" x2="568.10" y2="382.20" stroke="#8064A2" stroke-width="1.3"/>
<rect x="564.20" y="284.00" width="7.80" height="36.60" fill="#fff"/><text transform="translate(565.35,284.8) rotate(90)" font-size="7.7" fill="#8064A2" textLength="35.2" lengthAdjust="spacingAndGlyphs">M2.1 / E17</text>
<line x1="575.67" y1="221.00" x2="575.67" y2="382.20" stroke="#8064A2" stroke-width="1.3"/>
<rect x="571.77" y="284.00" width="7.80" height="36.60" fill="#fff"/><text transform="translate(572.92,284.8) rotate(90)" font-size="7.7" fill="#8064A2" textLength="35.2" lengthAdjust="spacingAndGlyphs">M2.1 / E18</text>
<line x1="583.24" y1="221.00" x2="583.24" y2="382.20" stroke="#8064A2" stroke-width="1.3"/>
<rect x="579.34" y="284.00" width="7.80" height="36.60" fill="#fff"/><text transform="translate(580.49,284.8) rotate(90)" font-size="7.7" fill="#8064A2" textLength="35.2" lengthAdjust="spacingAndGlyphs">M2.1 / E19</text>
<line x1="590.81" y1="221.00" x2="590.81" y2="382.20" stroke="#8064A2" stroke-width="1.3"/>
<rect x="586.91" y="284.00" width="7.80" height="36.60" fill="#fff"/><text transform="translate(588.06,284.8) rotate(90)" font-size="7.7" fill="#8064A2" textLength="35.2" lengthAdjust="spacingAndGlyphs">M2.1 / E20</text>
<line x1="598.38" y1="221.00" x2="598.38" y2="382.20" stroke="#8064A2" stroke-width="1.3"/>
<rect x="594.48" y="284.00" width="7.80" height="36.60" fill="#fff"/><text transform="translate(595.63,284.8) rotate(90)" font-size="7.7" fill="#8064A2" textLength="35.2" lengthAdjust="spacingAndGlyphs">M2.1 / E21</text>
<line x1="605.95" y1="221.00" x2="605.95" y2="382.20" stroke="#8064A2" stroke-width="1.3"/>
<rect x="602.05" y="284.00" width="7.80" height="36.60" fill="#fff"/><text transform="translate(603.20,284.8) rotate(90)" font-size="7.7" fill="#8064A2" textLength="35.2" lengthAdjust="spacingAndGlyphs">M2.1 / E22</text>
<line x1="613.52" y1="221.00" x2="613.52" y2="382.20" stroke="#8064A2" stroke-width="1.3"/>
<rect x="609.62" y="284.00" width="7.80" height="36.60" fill="#fff"/><text transform="translate(610.77,284.8) rotate(90)" font-size="7.7" fill="#8064A2" textLength="35.2" lengthAdjust="spacingAndGlyphs">M2.1 / E23</text>
<line x1="621.09" y1="221.00" x2="621.09" y2="382.20" stroke="#8064A2" stroke-width="1.3"/>
<rect x="617.19" y="284.00" width="7.80" height="36.60" fill="#fff"/><text transform="translate(618.34,284.8) rotate(90)" font-size="7.7" fill="#8064A2" textLength="35.2" lengthAdjust="spacingAndGlyphs">M2.1 / E24</text>
<line x1="648.10" y1="221.00" x2="648.10" y2="382.20" stroke="#8064A2" stroke-width="1.3"/>
<rect x="644.20" y="284.00" width="7.80" height="36.60" fill="#fff"/><text transform="translate(645.35,284.8) rotate(90)" font-size="7.7" fill="#8064A2" textLength="35.2" lengthAdjust="spacingAndGlyphs">M2.2 / E25</text>
<line x1="655.67" y1="221.00" x2="655.67" y2="382.20" stroke="#8064A2" stroke-width="1.3"/>
<rect x="651.77" y="284.00" width="7.80" height="36.60" fill="#fff"/><text transform="translate(652.92,284.8) rotate(90)" font-size="7.7" fill="#8064A2" textLength="35.2" lengthAdjust="spacingAndGlyphs">M2.2 / E26</text>
<line x1="663.24" y1="221.00" x2="663.24" y2="382.20" stroke="#8064A2" stroke-width="1.3"/>
<rect x="659.34" y="284.00" width="7.80" height="36.60" fill="#fff"/><text transform="translate(660.49,284.8) rotate(90)" font-size="7.7" fill="#8064A2" textLength="35.2" lengthAdjust="spacingAndGlyphs">M2.2 / E27</text>
<line x1="670.81" y1="221.00" x2="670.81" y2="382.20" stroke="#8064A2" stroke-width="1.3"/>
<rect x="666.91" y="284.00" width="7.80" height="36.60" fill="#fff"/><text transform="translate(668.06,284.8) rotate(90)" font-size="7.7" fill="#8064A2" textLength="35.2" lengthAdjust="spacingAndGlyphs">M2.2 / E28</text>
<line x1="678.38" y1="221.00" x2="678.38" y2="382.20" stroke="#8064A2" stroke-width="1.3"/>
<rect x="674.48" y="284.00" width="7.80" height="36.60" fill="#fff"/><text transform="translate(675.63,284.8) rotate(90)" font-size="7.7" fill="#8064A2" textLength="35.2" lengthAdjust="spacingAndGlyphs">M2.2 / E29</text>
<line x1="685.95" y1="221.00" x2="685.95" y2="382.20" stroke="#8064A2" stroke-width="1.3"/>
<rect x="682.05" y="284.00" width="7.80" height="36.60" fill="#fff"/><text transform="translate(683.20,284.8) rotate(90)" font-size="7.7" fill="#8064A2" textLength="35.2" lengthAdjust="spacingAndGlyphs">M2.2 / E30</text>
<line x1="693.52" y1="221.00" x2="693.52" y2="382.20" stroke="#8064A2" stroke-width="1.3"/>
<rect x="689.62" y="284.00" width="7.80" height="36.60" fill="#fff"/><text transform="translate(690.77,284.8) rotate(90)" font-size="7.7" fill="#8064A2" textLength="35.2" lengthAdjust="spacingAndGlyphs">M2.2 / E31</text>
<line x1="701.09" y1="221.00" x2="701.09" y2="382.20" stroke="#8064A2" stroke-width="1.3"/>
<rect x="697.19" y="284.00" width="7.80" height="36.60" fill="#fff"/><text transform="translate(698.34,284.8) rotate(90)" font-size="7.7" fill="#8064A2" textLength="35.2" lengthAdjust="spacingAndGlyphs">M2.2 / E32</text>
<line x1="780.10" y1="221.00" x2="780.10" y2="382.20" stroke="#8064A2" stroke-width="1.3"/>
<rect x="776.20" y="284.00" width="7.80" height="36.60" fill="#fff"/><text transform="translate(777.35,284.8) rotate(90)" font-size="7.7" fill="#8064A2" textLength="35.2" lengthAdjust="spacingAndGlyphs">M3.1 / E33</text>
<line x1="787.67" y1="221.00" x2="787.67" y2="382.20" stroke="#8064A2" stroke-width="1.3"/>
<rect x="783.77" y="284.00" width="7.80" height="36.60" fill="#fff"/><text transform="translate(784.92,284.8) rotate(90)" font-size="7.7" fill="#8064A2" textLength="35.2" lengthAdjust="spacingAndGlyphs">M3.1 / E34</text>
<line x1="860.10" y1="221.00" x2="860.10" y2="382.20" stroke="#8064A2" stroke-width="1.3"/>
<rect x="856.20" y="284.00" width="7.80" height="36.60" fill="#fff"/><text transform="translate(857.35,284.8) rotate(90)" font-size="7.7" fill="#8064A2" textLength="35.2" lengthAdjust="spacingAndGlyphs">M3.2 / E41</text>
<line x1="867.67" y1="221.00" x2="867.67" y2="382.20" stroke="#8064A2" stroke-width="1.3"/>
<rect x="863.77" y="284.00" width="7.80" height="36.60" fill="#fff"/><text transform="translate(864.92,284.8) rotate(90)" font-size="7.7" fill="#8064A2" textLength="35.2" lengthAdjust="spacingAndGlyphs">M3.2 / E42</text>
<line x1="875.24" y1="221.00" x2="875.24" y2="382.20" stroke="#8064A2" stroke-width="1.3"/>
<rect x="871.34" y="284.00" width="7.80" height="36.60" fill="#fff"/><text transform="translate(872.49,284.8) rotate(90)" font-size="7.7" fill="#8064A2" textLength="35.2" lengthAdjust="spacingAndGlyphs">M3.2 / E43</text>
<line x1="882.81" y1="221.00" x2="882.81" y2="382.20" stroke="#8064A2" stroke-width="1.3"/>
<rect x="878.91" y="284.00" width="7.80" height="36.60" fill="#fff"/><text transform="translate(880.06,284.8) rotate(90)" font-size="7.7" fill="#8064A2" textLength="35.2" lengthAdjust="spacingAndGlyphs">M3.2 / E44</text>
<line x1="890.38" y1="221.00" x2="890.38" y2="382.20" stroke="#8064A2" stroke-width="1.3"/>
<rect x="886.48" y="284.00" width="7.80" height="36.60" fill="#fff"/><text transform="translate(887.63,284.8) rotate(90)" font-size="7.7" fill="#8064A2" textLength="35.2" lengthAdjust="spacingAndGlyphs">M3.2 / E45</text>
<line x1="897.95" y1="221.00" x2="897.95" y2="382.20" stroke="#8064A2" stroke-width="1.3"/>
<rect x="894.05" y="284.00" width="7.80" height="36.60" fill="#fff"/><text transform="translate(895.20,284.8) rotate(90)" font-size="7.7" fill="#8064A2" textLength="35.2" lengthAdjust="spacingAndGlyphs">M3.2 / E46</text>
<line x1="905.52" y1="221.00" x2="905.52" y2="382.20" stroke="#8064A2" stroke-width="1.3"/>
<rect x="901.62" y="284.00" width="7.80" height="36.60" fill="#fff"/><text transform="translate(902.77,284.8) rotate(90)" font-size="7.7" fill="#8064A2" textLength="35.2" lengthAdjust="spacingAndGlyphs">M3.2 / E47</text>
<line x1="913.09" y1="221.00" x2="913.09" y2="382.20" stroke="#8064A2" stroke-width="1.3"/>
<rect x="909.19" y="284.00" width="7.80" height="36.60" fill="#fff"/><text transform="translate(910.34,284.8) rotate(90)" font-size="7.7" fill="#8064A2" textLength="35.2" lengthAdjust="spacingAndGlyphs">M3.2 / E48</text>
<line x1="1084.90" y1="221.00" x2="1084.90" y2="383.50" stroke="#8064A2" stroke-width="1.3"/>
<rect x="1081.00" y="284.00" width="7.80" height="36.60" fill="#fff"/><text transform="translate(1082.15,284.8) rotate(90)" font-size="7.7" fill="#8064A2" textLength="35.2" lengthAdjust="spacingAndGlyphs">M4.1 / E49</text>
<line x1="1092.47" y1="221.00" x2="1092.47" y2="383.50" stroke="#8064A2" stroke-width="1.3"/>
<rect x="1088.57" y="284.00" width="7.80" height="36.60" fill="#fff"/><text transform="translate(1089.72,284.8) rotate(90)" font-size="7.7" fill="#8064A2" textLength="35.2" lengthAdjust="spacingAndGlyphs">M4.1 / E50</text>
<line x1="1100.04" y1="221.00" x2="1100.04" y2="383.50" stroke="#8064A2" stroke-width="1.3"/>
<rect x="1096.14" y="284.00" width="7.80" height="36.60" fill="#fff"/><text transform="translate(1097.29,284.8) rotate(90)" font-size="7.7" fill="#8064A2" textLength="35.2" lengthAdjust="spacingAndGlyphs">M4.1 / E51</text>
<line x1="1107.61" y1="221.00" x2="1107.61" y2="383.50" stroke="#8064A2" stroke-width="1.3"/>
<rect x="1103.71" y="284.00" width="7.80" height="36.60" fill="#fff"/><text transform="translate(1104.86,284.8) rotate(90)" font-size="7.7" fill="#8064A2" textLength="35.2" lengthAdjust="spacingAndGlyphs">M4.1 / E52</text>
<line x1="1115.18" y1="221.00" x2="1115.18" y2="383.50" stroke="#8064A2" stroke-width="1.3"/>
<rect x="1111.28" y="284.00" width="7.80" height="36.60" fill="#fff"/><text transform="translate(1112.43,284.8) rotate(90)" font-size="7.7" fill="#8064A2" textLength="35.2" lengthAdjust="spacingAndGlyphs">M4.1 / E53</text>
<line x1="1122.75" y1="221.00" x2="1122.75" y2="383.50" stroke="#8064A2" stroke-width="1.3"/>
<rect x="1118.85" y="284.00" width="7.80" height="36.60" fill="#fff"/><text transform="translate(1120.00,284.8) rotate(90)" font-size="7.7" fill="#8064A2" textLength="35.2" lengthAdjust="spacingAndGlyphs">M4.1 / E54</text>
<line x1="1130.32" y1="221.00" x2="1130.32" y2="383.50" stroke="#8064A2" stroke-width="1.3"/>
<rect x="1126.42" y="284.00" width="7.80" height="36.60" fill="#fff"/><text transform="translate(1127.57,284.8) rotate(90)" font-size="7.7" fill="#8064A2" textLength="35.2" lengthAdjust="spacingAndGlyphs">M4.1 / E55</text>
<line x1="1137.89" y1="221.00" x2="1137.89" y2="383.50" stroke="#8064A2" stroke-width="1.3"/>
<rect x="1133.99" y="284.00" width="7.80" height="36.60" fill="#fff"/><text transform="translate(1135.14,284.8) rotate(90)" font-size="7.7" fill="#8064A2" textLength="35.2" lengthAdjust="spacingAndGlyphs">M4.1 / E56</text>
<line x1="1164.90" y1="221.00" x2="1164.90" y2="383.50" stroke="#8064A2" stroke-width="1.3"/>
<rect x="1161.00" y="284.00" width="7.80" height="36.60" fill="#fff"/><text transform="translate(1162.15,284.8) rotate(90)" font-size="7.7" fill="#8064A2" textLength="35.2" lengthAdjust="spacingAndGlyphs">M4.2 / E57</text>
<line x1="1172.47" y1="221.00" x2="1172.47" y2="383.50" stroke="#8064A2" stroke-width="1.3"/>
<rect x="1168.57" y="284.00" width="7.80" height="36.60" fill="#fff"/><text transform="translate(1169.72,284.8) rotate(90)" font-size="7.7" fill="#8064A2" textLength="35.2" lengthAdjust="spacingAndGlyphs">M4.2 / E58</text>
<line x1="1180.04" y1="221.00" x2="1180.04" y2="383.50" stroke="#8064A2" stroke-width="1.3"/>
<rect x="1176.14" y="284.00" width="7.80" height="36.60" fill="#fff"/><text transform="translate(1177.29,284.8) rotate(90)" font-size="7.7" fill="#8064A2" textLength="35.2" lengthAdjust="spacingAndGlyphs">M4.2 / E59</text>
<line x1="1187.61" y1="221.00" x2="1187.61" y2="383.50" stroke="#8064A2" stroke-width="1.3"/>
<rect x="1183.71" y="284.00" width="7.80" height="36.60" fill="#fff"/><text transform="translate(1184.86,284.8) rotate(90)" font-size="7.7" fill="#8064A2" textLength="35.2" lengthAdjust="spacingAndGlyphs">M4.2 / E60</text>
<line x1="1195.18" y1="221.00" x2="1195.18" y2="383.50" stroke="#8064A2" stroke-width="1.3"/>
<rect x="1191.28" y="284.00" width="7.80" height="36.60" fill="#fff"/><text transform="translate(1192.43,284.8) rotate(90)" font-size="7.7" fill="#8064A2" textLength="35.2" lengthAdjust="spacingAndGlyphs">M4.2 / E61</text>
<line x1="1202.75" y1="221.00" x2="1202.75" y2="383.50" stroke="#8064A2" stroke-width="1.3"/>
<rect x="1198.85" y="284.00" width="7.80" height="36.60" fill="#fff"/><text transform="translate(1200.00,284.8) rotate(90)" font-size="7.7" fill="#8064A2" textLength="35.2" lengthAdjust="spacingAndGlyphs">M4.2 / E62</text>
<line x1="1210.32" y1="221.00" x2="1210.32" y2="383.50" stroke="#8064A2" stroke-width="1.3"/>
<rect x="1206.42" y="284.00" width="7.80" height="36.60" fill="#fff"/><text transform="translate(1207.57,284.8) rotate(90)" font-size="7.7" fill="#8064A2" textLength="35.2" lengthAdjust="spacingAndGlyphs">M4.2 / E63</text>
<line x1="1217.89" y1="221.00" x2="1217.89" y2="383.50" stroke="#8064A2" stroke-width="1.3"/>
<rect x="1213.99" y="284.00" width="7.80" height="36.60" fill="#fff"/><text transform="translate(1215.14,284.8) rotate(90)" font-size="7.7" fill="#8064A2" textLength="35.2" lengthAdjust="spacingAndGlyphs">M4.2 / E64</text>
<line x1="1332.80" y1="221.00" x2="1332.80" y2="384.30" stroke="#8064A2" stroke-width="1.3"/>
<rect x="1328.90" y="284.00" width="7.80" height="36.60" fill="#fff"/><text transform="translate(1330.05,284.8) rotate(90)" font-size="7.7" fill="#8064A2" textLength="35.2" lengthAdjust="spacingAndGlyphs">M5.1 / E65</text>
<line x1="1340.37" y1="221.00" x2="1340.37" y2="384.30" stroke="#8064A2" stroke-width="1.3"/>
<rect x="1336.47" y="284.00" width="7.80" height="36.60" fill="#fff"/><text transform="translate(1337.62,284.8) rotate(90)" font-size="7.7" fill="#8064A2" textLength="35.2" lengthAdjust="spacingAndGlyphs">M5.1 / E66</text>
<line x1="1347.94" y1="221.00" x2="1347.94" y2="384.30" stroke="#8064A2" stroke-width="1.3"/>
<rect x="1344.04" y="284.00" width="7.80" height="36.60" fill="#fff"/><text transform="translate(1345.19,284.8) rotate(90)" font-size="7.7" fill="#8064A2" textLength="35.2" lengthAdjust="spacingAndGlyphs">M5.1 / E67</text>
<line x1="1355.51" y1="221.00" x2="1355.51" y2="384.30" stroke="#8064A2" stroke-width="1.3"/>
<rect x="1351.61" y="284.00" width="7.80" height="36.60" fill="#fff"/><text transform="translate(1352.76,284.8) rotate(90)" font-size="7.7" fill="#8064A2" textLength="35.2" lengthAdjust="spacingAndGlyphs">M5.1 / E68</text>
<line x1="1363.08" y1="221.00" x2="1363.08" y2="384.30" stroke="#8064A2" stroke-width="1.3"/>
<rect x="1359.18" y="284.00" width="7.80" height="36.60" fill="#fff"/><text transform="translate(1360.33,284.8) rotate(90)" font-size="7.7" fill="#8064A2" textLength="35.2" lengthAdjust="spacingAndGlyphs">M5.1 / E69</text>
<line x1="1370.65" y1="221.00" x2="1370.65" y2="384.30" stroke="#8064A2" stroke-width="1.3"/>
<rect x="1366.75" y="284.00" width="7.80" height="36.60" fill="#fff"/><text transform="translate(1367.90,284.8) rotate(90)" font-size="7.7" fill="#8064A2" textLength="35.2" lengthAdjust="spacingAndGlyphs">M5.1 / E70</text>
<line x1="1378.22" y1="221.00" x2="1378.22" y2="384.30" stroke="#8064A2" stroke-width="1.3"/>
<rect x="1374.32" y="284.00" width="7.80" height="36.60" fill="#fff"/><text transform="translate(1375.47,284.8) rotate(90)" font-size="7.7" fill="#8064A2" textLength="35.2" lengthAdjust="spacingAndGlyphs">M5.1 / E71</text>
<line x1="1385.79" y1="221.00" x2="1385.79" y2="384.30" stroke="#8064A2" stroke-width="1.3"/>
<rect x="1381.89" y="284.00" width="7.80" height="36.60" fill="#fff"/><text transform="translate(1383.04,284.8) rotate(90)" font-size="7.7" fill="#8064A2" textLength="35.2" lengthAdjust="spacingAndGlyphs">M5.1 / E72</text>
<line x1="1412.80" y1="221.00" x2="1412.80" y2="384.30" stroke="#8064A2" stroke-width="1.3"/>
<rect x="1408.90" y="284.00" width="7.80" height="36.60" fill="#fff"/><text transform="translate(1410.05,284.8) rotate(90)" font-size="7.7" fill="#8064A2" textLength="35.2" lengthAdjust="spacingAndGlyphs">M5.2 / E73</text>
<line x1="1420.37" y1="221.00" x2="1420.37" y2="384.30" stroke="#8064A2" stroke-width="1.3"/>
<rect x="1416.47" y="284.00" width="7.80" height="36.60" fill="#fff"/><text transform="translate(1417.62,284.8) rotate(90)" font-size="7.7" fill="#8064A2" textLength="35.2" lengthAdjust="spacingAndGlyphs">M5.2 / E74</text>
<line x1="1427.94" y1="221.00" x2="1427.94" y2="384.30" stroke="#8064A2" stroke-width="1.3"/>
<rect x="1424.04" y="284.00" width="7.80" height="36.60" fill="#fff"/><text transform="translate(1425.19,284.8) rotate(90)" font-size="7.7" fill="#8064A2" textLength="35.2" lengthAdjust="spacingAndGlyphs">M5.2 / E75</text>
<line x1="1435.51" y1="221.00" x2="1435.51" y2="384.30" stroke="#8064A2" stroke-width="1.3"/>
<rect x="1431.61" y="284.00" width="7.80" height="36.60" fill="#fff"/><text transform="translate(1432.76,284.8) rotate(90)" font-size="7.7" fill="#8064A2" textLength="35.2" lengthAdjust="spacingAndGlyphs">M5.2 / E76</text>
<line x1="1443.08" y1="221.00" x2="1443.08" y2="384.30" stroke="#8064A2" stroke-width="1.3"/>
<rect x="1439.18" y="284.00" width="7.80" height="36.60" fill="#fff"/><text transform="translate(1440.33,284.8) rotate(90)" font-size="7.7" fill="#8064A2" textLength="35.2" lengthAdjust="spacingAndGlyphs">M5.2 / E77</text>
<line x1="1450.65" y1="221.00" x2="1450.65" y2="384.30" stroke="#8064A2" stroke-width="1.3"/>
<rect x="1446.75" y="284.00" width="7.80" height="36.60" fill="#fff"/><text transform="translate(1447.90,284.8) rotate(90)" font-size="7.7" fill="#8064A2" textLength="35.2" lengthAdjust="spacingAndGlyphs">M5.2 / E78</text>
<line x1="1458.22" y1="221.00" x2="1458.22" y2="384.30" stroke="#8064A2" stroke-width="1.3"/>
<rect x="1454.32" y="284.00" width="7.80" height="36.60" fill="#fff"/><text transform="translate(1455.47,284.8) rotate(90)" font-size="7.7" fill="#8064A2" textLength="35.2" lengthAdjust="spacingAndGlyphs">M5.2 / E79</text>
<line x1="1465.79" y1="221.00" x2="1465.79" y2="384.30" stroke="#8064A2" stroke-width="1.3"/>
<rect x="1461.89" y="284.00" width="7.80" height="36.60" fill="#fff"/><text transform="translate(1463.04,284.8) rotate(90)" font-size="7.7" fill="#8064A2" textLength="35.2" lengthAdjust="spacingAndGlyphs">M5.2 / E80</text>
<path d="M418.7,381 V342.7 M428.7,381 V342.7 M630,381 V342.7 M639,381 V342.7 M418.7,342.7 H841.7 M841.7,382 V195 H1007.4 V645" fill="none" stroke="#FF0000" stroke-width="1.35"/>
<circle cx="418.70" cy="342.70" r="2.40" fill="#FF0000"/>
<circle cx="428.70" cy="342.70" r="2.40" fill="#FF0000"/>
<circle cx="630.00" cy="342.70" r="2.40" fill="#FF0000"/>
<circle cx="639.00" cy="342.70" r="2.40" fill="#FF0000"/>
<circle cx="841.70" cy="342.70" r="2.40" fill="#FF0000"/>
<circle cx="1007.40" cy="644.80" r="2.20" fill="#FF0000"/>
<path d="M851.3,382 V208.7 H1146.3 V383 M1146.3,341.7 L1404.7,342.7 V384 M1155.3,341.7 V383 M1394.7,342.7 V384" fill="none" stroke="#0070C0" stroke-width="1.3"/>
<line x1="995.00" y1="208.70" x2="995.00" y2="663.30" stroke="#0070C0" stroke-width="1.9"/>
<circle cx="995.00" cy="208.70" r="2.40" fill="#0070C0"/>
<circle cx="1146.30" cy="341.70" r="2.40" fill="#0070C0"/>
<circle cx="1155.30" cy="341.70" r="2.40" fill="#0070C0"/>
<circle cx="1394.70" cy="342.70" r="2.40" fill="#0070C0"/>
<circle cx="995.00" cy="663.30" r="2.40" fill="#0070C0"/>
<line x1="982.70" y1="221.00" x2="982.70" y2="973.00" stroke="#8064A2" stroke-width="2.5"/>
<path d="M405.2,533 V571.2 H1563.3 V186" fill="none" stroke="#00B0F0" stroke-width="5"/>
<path d="M442.7,533 V547.5 H616.4 V528" fill="none" stroke="#00B0F0" stroke-width="5"/>
<path d="M654,528 V547.5 H827.6 V528" fill="none" stroke="#00B0F0" stroke-width="5"/>
<path d="M863.9,528 V547.5 H1132.7 V528" fill="none" stroke="#00B0F0" stroke-width="5"/>
<path d="M1170.7,528 V547.5 H1381.4 V530" fill="none" stroke="#00B0F0" stroke-width="5"/>
<path d="M1575.7,186 V571.2 H1898" fill="none" stroke="#92D050" stroke-width="5"/>
<line x1="982.70" y1="520.00" x2="982.70" y2="600.00" stroke="#8064A2" stroke-width="2.5"/>
<line x1="995.00" y1="520.00" x2="995.00" y2="600.00" stroke="#0070C0" stroke-width="1.9"/>
<line x1="1007.40" y1="520.00" x2="1007.40" y2="600.00" stroke="#FF0000" stroke-width="1.2"/>
<line x1="1666.50" y1="186.00" x2="1666.50" y2="644.50" stroke="#FF0000" stroke-width="2.6"/>
<line x1="1673.70" y1="186.00" x2="1673.70" y2="650.00" stroke="#000" stroke-width="2.4"/>
<line x1="74.00" y1="644.70" x2="1898.00" y2="644.70" stroke="#FF0000" stroke-width="3.2"/>
<line x1="74.00" y1="649.70" x2="1898.00" y2="649.70" stroke="#000" stroke-width="2.4"/>
<line x1="74.00" y1="658.40" x2="1898.00" y2="658.40" stroke="#7F7F7F" stroke-width="2.6"/>
<line x1="74.00" y1="663.40" x2="1898.00" y2="663.40" stroke="#0070C0" stroke-width="2.6"/>
<circle cx="169.30" cy="658.40" r="2.20" fill="#7F7F7F"/>
<circle cx="1666.40" cy="644.20" r="3.40" fill="#FF0000"/>
<circle cx="1673.60" cy="650.00" r="3.40" fill="#000"/>
<circle cx="1795.10" cy="644.70" r="2.40" fill="#FF0000"/>
<circle cx="1802.50" cy="650.00" r="2.40" fill="#000"/>
<line x1="1795.10" y1="645.00" x2="1795.10" y2="973.00" stroke="#FF0000" stroke-width="1.2"/>
<line x1="1802.50" y1="650.00" x2="1802.50" y2="973.00" stroke="#000" stroke-width="1.2"/>
<circle cx="995.00" cy="663.30" r="2.40" fill="#0070C0"/>
<circle cx="1007.40" cy="644.80" r="2.30" fill="#FF0000"/>
<rect x="363.00" y="639.50" width="69.80" height="12.50" fill="#fff"/>
<text x="367.8" y="650.2" font-size="8.2" fill="#111" textLength="59.7" lengthAdjust="spacingAndGlyphs">Feeder Intellibox</text>
<rect x="366.00" y="653.50" width="62.00" height="12.50" fill="#fff"/>
<text x="369.8" y="664.2" font-size="8.2" fill="#111" textLength="54.6" lengthAdjust="spacingAndGlyphs">Feeder Booster</text>
<path d="M1811.4,454 V500.2 H1898" fill="none" stroke="#000" stroke-width="1.2"/>
<path d="M1818.6,454 V494.8 H1898" fill="none" stroke="#FF0000" stroke-width="1.2"/>
<rect x="1776.30" y="290.20" width="75.00" height="162.60" fill="#000" stroke="#555" stroke-width="3.8" rx="1.5"/>
<text x="1813.8" y="368.3" font-size="11" fill="#fff" text-anchor="middle" textLength="64.5" lengthAdjust="spacingAndGlyphs">Alimentation</text>
<text x="1813.8" y="383.1" font-size="11" fill="#fff" text-anchor="middle" textLength="38.0" lengthAdjust="spacingAndGlyphs">Externe</text>
<text x="1813.8" y="444.7" font-size="4.6" fill="#eee" text-anchor="middle" font-weight="bold" textLength="28.5" lengthAdjust="spacingAndGlyphs">15-18V / 4.5A</text>
<circle cx="1901.30" cy="321.90" r="7.80" fill="#000"/>
<circle cx="1901.30" cy="401.00" r="7.80" fill="#000"/>
<use href="#dr" x="352.3" y="375.1"/>
<rect x="444.00" y="421.00" width="42.20" height="36.90" fill="#fff"/>
<text x="465.1" y="445.7" font-size="17.6" fill="#111" text-anchor="middle">1</text>
<use href="#dr" x="563.1" y="375.2"/>
<rect x="654.80" y="421.10" width="42.20" height="36.90" fill="#fff"/>
<text x="675.9" y="445.8" font-size="17.6" fill="#111" text-anchor="middle">2</text>
<use href="#dr" x="775.1" y="375.2"/>
<rect x="866.80" y="421.10" width="42.20" height="36.90" fill="#fff"/>
<text x="887.9" y="445.8" font-size="17.6" fill="#111" text-anchor="middle">3</text>
<use href="#dr" x="1079.9" y="376.5"/>
<rect x="1171.60" y="422.40" width="42.20" height="36.90" fill="#fff"/>
<text x="1192.7" y="447.1" font-size="17.6" fill="#111" text-anchor="middle">4</text>
<use href="#dr" x="1327.8" y="377.3"/>
<rect x="1419.50" y="423.20" width="42.20" height="36.90" fill="#fff"/>
<text x="1440.6" y="447.9" font-size="17.6" fill="#111" text-anchor="middle">5</text>
<line x1="616.40" y1="527.50" x2="616.40" y2="540.00" stroke="#00B0F0" stroke-width="5"/>
<line x1="654.00" y1="527.50" x2="654.00" y2="540.00" stroke="#00B0F0" stroke-width="5"/>
<line x1="827.60" y1="527.50" x2="827.60" y2="540.00" stroke="#00B0F0" stroke-width="5"/>
<line x1="863.90" y1="527.50" x2="863.90" y2="540.00" stroke="#00B0F0" stroke-width="5"/>
<line x1="1132.70" y1="527.50" x2="1132.70" y2="540.00" stroke="#00B0F0" stroke-width="5"/>
<line x1="1170.70" y1="527.50" x2="1170.70" y2="540.00" stroke="#00B0F0" stroke-width="5"/>
<line x1="1381.40" y1="529.00" x2="1381.40" y2="540.00" stroke="#00B0F0" stroke-width="5"/>
<line x1="568.10" y1="374.20" x2="568.10" y2="381.80" stroke="#8064A2" stroke-width="1.3"/>
<line x1="575.67" y1="374.20" x2="575.67" y2="381.80" stroke="#8064A2" stroke-width="1.3"/>
<line x1="583.24" y1="374.20" x2="583.24" y2="381.80" stroke="#8064A2" stroke-width="1.3"/>
<line x1="590.81" y1="374.20" x2="590.81" y2="381.80" stroke="#8064A2" stroke-width="1.3"/>
<line x1="598.38" y1="374.20" x2="598.38" y2="381.80" stroke="#8064A2" stroke-width="1.3"/>
<line x1="605.95" y1="374.20" x2="605.95" y2="381.80" stroke="#8064A2" stroke-width="1.3"/>
<line x1="613.52" y1="374.20" x2="613.52" y2="381.80" stroke="#8064A2" stroke-width="1.3"/>
<line x1="621.09" y1="374.20" x2="621.09" y2="381.80" stroke="#8064A2" stroke-width="1.3"/>
<line x1="648.10" y1="374.20" x2="648.10" y2="381.80" stroke="#8064A2" stroke-width="1.3"/>
<line x1="655.67" y1="374.20" x2="655.67" y2="381.80" stroke="#8064A2" stroke-width="1.3"/>
<line x1="663.24" y1="374.20" x2="663.24" y2="381.80" stroke="#8064A2" stroke-width="1.3"/>
<line x1="670.81" y1="374.20" x2="670.81" y2="381.80" stroke="#8064A2" stroke-width="1.3"/>
<line x1="678.38" y1="374.20" x2="678.38" y2="381.80" stroke="#8064A2" stroke-width="1.3"/>
<line x1="685.95" y1="374.20" x2="685.95" y2="381.80" stroke="#8064A2" stroke-width="1.3"/>
<line x1="693.52" y1="374.20" x2="693.52" y2="381.80" stroke="#8064A2" stroke-width="1.3"/>
<line x1="701.09" y1="374.20" x2="701.09" y2="381.80" stroke="#8064A2" stroke-width="1.3"/>
<line x1="780.10" y1="374.20" x2="780.10" y2="381.80" stroke="#8064A2" stroke-width="1.3"/>
<line x1="787.67" y1="374.20" x2="787.67" y2="381.80" stroke="#8064A2" stroke-width="1.3"/>
<line x1="860.10" y1="374.20" x2="860.10" y2="381.80" stroke="#8064A2" stroke-width="1.3"/>
<line x1="867.67" y1="374.20" x2="867.67" y2="381.80" stroke="#8064A2" stroke-width="1.3"/>
<line x1="875.24" y1="374.20" x2="875.24" y2="381.80" stroke="#8064A2" stroke-width="1.3"/>
<line x1="882.81" y1="374.20" x2="882.81" y2="381.80" stroke="#8064A2" stroke-width="1.3"/>
<line x1="890.38" y1="374.20" x2="890.38" y2="381.80" stroke="#8064A2" stroke-width="1.3"/>
<line x1="897.95" y1="374.20" x2="897.95" y2="381.80" stroke="#8064A2" stroke-width="1.3"/>
<line x1="905.52" y1="374.20" x2="905.52" y2="381.80" stroke="#8064A2" stroke-width="1.3"/>
<line x1="913.09" y1="374.20" x2="913.09" y2="381.80" stroke="#8064A2" stroke-width="1.3"/>
<line x1="1084.90" y1="375.50" x2="1084.90" y2="383.10" stroke="#8064A2" stroke-width="1.3"/>
<line x1="1092.47" y1="375.50" x2="1092.47" y2="383.10" stroke="#8064A2" stroke-width="1.3"/>
<line x1="1100.04" y1="375.50" x2="1100.04" y2="383.10" stroke="#8064A2" stroke-width="1.3"/>
<line x1="1107.61" y1="375.50" x2="1107.61" y2="383.10" stroke="#8064A2" stroke-width="1.3"/>
<line x1="1115.18" y1="375.50" x2="1115.18" y2="383.10" stroke="#8064A2" stroke-width="1.3"/>
<line x1="1122.75" y1="375.50" x2="1122.75" y2="383.10" stroke="#8064A2" stroke-width="1.3"/>
<line x1="1130.32" y1="375.50" x2="1130.32" y2="383.10" stroke="#8064A2" stroke-width="1.3"/>
<line x1="1137.89" y1="375.50" x2="1137.89" y2="383.10" stroke="#8064A2" stroke-width="1.3"/>
<line x1="1164.90" y1="375.50" x2="1164.90" y2="383.10" stroke="#8064A2" stroke-width="1.3"/>
<line x1="1172.47" y1="375.50" x2="1172.47" y2="383.10" stroke="#8064A2" stroke-width="1.3"/>
<line x1="1180.04" y1="375.50" x2="1180.04" y2="383.10" stroke="#8064A2" stroke-width="1.3"/>
<line x1="1187.61" y1="375.50" x2="1187.61" y2="383.10" stroke="#8064A2" stroke-width="1.3"/>
<line x1="1195.18" y1="375.50" x2="1195.18" y2="383.10" stroke="#8064A2" stroke-width="1.3"/>
<line x1="1202.75" y1="375.50" x2="1202.75" y2="383.10" stroke="#8064A2" stroke-width="1.3"/>
<line x1="1210.32" y1="375.50" x2="1210.32" y2="383.10" stroke="#8064A2" stroke-width="1.3"/>
<line x1="1217.89" y1="375.50" x2="1217.89" y2="383.10" stroke="#8064A2" stroke-width="1.3"/>
<line x1="1332.80" y1="376.30" x2="1332.80" y2="383.90" stroke="#8064A2" stroke-width="1.3"/>
<line x1="1340.37" y1="376.30" x2="1340.37" y2="383.90" stroke="#8064A2" stroke-width="1.3"/>
<line x1="1347.94" y1="376.30" x2="1347.94" y2="383.90" stroke="#8064A2" stroke-width="1.3"/>
<line x1="1355.51" y1="376.30" x2="1355.51" y2="383.90" stroke="#8064A2" stroke-width="1.3"/>
<line x1="1363.08" y1="376.30" x2="1363.08" y2="383.90" stroke="#8064A2" stroke-width="1.3"/>
<line x1="1370.65" y1="376.30" x2="1370.65" y2="383.90" stroke="#8064A2" stroke-width="1.3"/>
<line x1="1378.22" y1="376.30" x2="1378.22" y2="383.90" stroke="#8064A2" stroke-width="1.3"/>
<line x1="1385.79" y1="376.30" x2="1385.79" y2="383.90" stroke="#8064A2" stroke-width="1.3"/>
<line x1="1412.80" y1="376.30" x2="1412.80" y2="383.90" stroke="#8064A2" stroke-width="1.3"/>
<line x1="1420.37" y1="376.30" x2="1420.37" y2="383.90" stroke="#8064A2" stroke-width="1.3"/>
<line x1="1427.94" y1="376.30" x2="1427.94" y2="383.90" stroke="#8064A2" stroke-width="1.3"/>
<line x1="1435.51" y1="376.30" x2="1435.51" y2="383.90" stroke="#8064A2" stroke-width="1.3"/>
<line x1="1443.08" y1="376.30" x2="1443.08" y2="383.90" stroke="#8064A2" stroke-width="1.3"/>
<line x1="1450.65" y1="376.30" x2="1450.65" y2="383.90" stroke="#8064A2" stroke-width="1.3"/>
<line x1="1458.22" y1="376.30" x2="1458.22" y2="383.90" stroke="#8064A2" stroke-width="1.3"/>
<line x1="1465.79" y1="376.30" x2="1465.79" y2="383.90" stroke="#8064A2" stroke-width="1.3"/>
<line x1="630.00" y1="374.00" x2="630.00" y2="382.00" stroke="#FF0000" stroke-width="1.2"/>
<line x1="639.00" y1="374.00" x2="639.00" y2="382.00" stroke="#FF0000" stroke-width="1.2"/>
<line x1="841.70" y1="374.00" x2="841.70" y2="382.00" stroke="#FF0000" stroke-width="1.2"/>
<line x1="851.30" y1="374.00" x2="851.30" y2="382.50" stroke="#0070C0" stroke-width="1.2"/>
<line x1="1146.30" y1="374.00" x2="1146.30" y2="382.50" stroke="#0070C0" stroke-width="1.2"/>
<line x1="1155.30" y1="374.00" x2="1155.30" y2="382.50" stroke="#0070C0" stroke-width="1.2"/>
<line x1="1394.70" y1="376.00" x2="1394.70" y2="384.00" stroke="#0070C0" stroke-width="1.2"/>
<line x1="1404.70" y1="376.00" x2="1404.70" y2="384.00" stroke="#0070C0" stroke-width="1.2"/>
<defs><linearGradient id="pk" x1="0" x2="1" y1="0" y2="0"><stop offset="0" stop-color="#E6B0AA"/><stop offset="1" stop-color="#F7E4E1"/></linearGradient></defs>
<rect x="301.50" y="635.50" width="17.10" height="340.00" fill="url(#pk)" stroke="#000" stroke-width="1.2"/>
<line x1="301.50" y1="681.20" x2="318.60" y2="681.20" stroke="#000" stroke-width="1.2"/>
<rect x="318.60" y="635.50" width="18.10" height="340.00" fill="url(#pk)" stroke="#000" stroke-width="1.2"/>
<line x1="318.60" y1="681.20" x2="336.70" y2="681.20" stroke="#000" stroke-width="1.2"/>
<text transform="translate(306,641) rotate(90)" font-size="9.8" fill="#111" textLength="34.5" lengthAdjust="spacingAndGlyphs">4 sucres</text>
<text transform="translate(323.5,641) rotate(90)" font-size="9.8" fill="#111" textLength="34.5" lengthAdjust="spacingAndGlyphs">4 sucres</text>
<text transform="translate(306.4,796.4) rotate(90)" font-size="9.6" fill="#111" textLength="73.5" lengthAdjust="spacingAndGlyphs" stroke="#111" stroke-width="0.3">SUB-D 37 femelle</text>
<text transform="translate(323.8,801) rotate(90)" font-size="9.6" fill="#111" textLength="65" lengthAdjust="spacingAndGlyphs" stroke="#111" stroke-width="0.3">SUB-D 37 mâle</text>
<path d="M74,692.2 H185.1 V961.4" fill="none" stroke="#8064A2" stroke-width="2.2"/>
<line x1="432.40" y1="692.20" x2="432.40" y2="973.00" stroke="#8064A2" stroke-width="2.2"/>
<path d="M451.9,691.2 V831.6 H1898" fill="none" stroke="#8064A2" stroke-width="2.2"/>
<line x1="185.10" y1="692.20" x2="302.00" y2="692.20" stroke="#8064A2" stroke-width="1.2"/>
<circle cx="204.00" cy="692.20" r="2.30" fill="#8064A2"/>
<rect x="219.00" y="687.60" width="78.30" height="9.20" fill="#fff"/>
<text x="219.3" y="695.0" font-size="8.2" fill="#8064A2" textLength="39.0" lengthAdjust="spacingAndGlyphs">M1.1 / E01</text>
<text x="260.6" y="694.8" font-size="8" fill="#8064A2" textLength="12.4" lengthAdjust="spacingAndGlyphs">-----</text>
<text x="275.9" y="695.0" font-size="8.2" fill="#8064A2" textLength="20.9" lengthAdjust="spacingAndGlyphs">PIN01</text>
<line x1="336.50" y1="692.20" x2="451.90" y2="692.20" stroke="#8064A2" stroke-width="1.2"/>
<rect x="339.60" y="687.60" width="79.00" height="9.20" fill="#fff"/>
<text x="339.9" y="695.0" font-size="8.2" fill="#8064A2" textLength="20.9" lengthAdjust="spacingAndGlyphs">PIN01</text>
<text x="363.4" y="694.8" font-size="8" fill="#8064A2" textLength="12.4" lengthAdjust="spacingAndGlyphs">-----</text>
<text x="379.0" y="695.0" font-size="8.2" fill="#8064A2" textLength="39.3" lengthAdjust="spacingAndGlyphs">M1.1 / E01</text>
<line x1="185.10" y1="702.16" x2="302.00" y2="702.16" stroke="#8064A2" stroke-width="1.2"/>
<circle cx="204.00" cy="702.16" r="2.30" fill="#8064A2"/>
<rect x="219.00" y="697.56" width="78.30" height="9.20" fill="#fff"/>
<text x="219.3" y="705.0" font-size="8.2" fill="#8064A2" textLength="39.0" lengthAdjust="spacingAndGlyphs">M1.1 / E03</text>
<text x="260.6" y="704.8" font-size="8" fill="#8064A2" textLength="12.4" lengthAdjust="spacingAndGlyphs">-----</text>
<text x="275.9" y="705.0" font-size="8.2" fill="#8064A2" textLength="20.9" lengthAdjust="spacingAndGlyphs">PIN02</text>
<line x1="336.50" y1="702.16" x2="451.90" y2="702.16" stroke="#8064A2" stroke-width="1.2"/>
<rect x="339.60" y="697.56" width="79.00" height="9.20" fill="#fff"/>
<text x="339.9" y="705.0" font-size="8.2" fill="#8064A2" textLength="20.9" lengthAdjust="spacingAndGlyphs">PIN02</text>
<text x="363.4" y="704.8" font-size="8" fill="#8064A2" textLength="12.4" lengthAdjust="spacingAndGlyphs">-----</text>
<text x="379.0" y="705.0" font-size="8.2" fill="#8064A2" textLength="39.3" lengthAdjust="spacingAndGlyphs">M1.1 / E03</text>
<line x1="204.00" y1="712.12" x2="302.00" y2="712.12" stroke="#8064A2" stroke-width="1.2"/>
<rect x="219.00" y="707.52" width="78.30" height="9.20" fill="#fff"/>
<text x="219.3" y="714.9" font-size="8.2" fill="#8064A2" textLength="39.0" lengthAdjust="spacingAndGlyphs">M1.2 / E11</text>
<text x="260.6" y="714.7" font-size="8" fill="#8064A2" textLength="12.4" lengthAdjust="spacingAndGlyphs">-----</text>
<text x="275.9" y="714.9" font-size="8.2" fill="#8064A2" textLength="20.9" lengthAdjust="spacingAndGlyphs">PIN03</text>
<line x1="336.50" y1="712.12" x2="451.90" y2="712.12" stroke="#8064A2" stroke-width="1.2"/>
<rect x="339.60" y="707.52" width="79.00" height="9.20" fill="#fff"/>
<text x="339.9" y="714.9" font-size="8.2" fill="#8064A2" textLength="20.9" lengthAdjust="spacingAndGlyphs">PIN03</text>
<text x="363.4" y="714.7" font-size="8" fill="#8064A2" textLength="12.4" lengthAdjust="spacingAndGlyphs">-----</text>
<text x="379.0" y="714.9" font-size="8.2" fill="#8064A2" textLength="39.3" lengthAdjust="spacingAndGlyphs">M1.2 / E11</text>
<line x1="185.10" y1="722.08" x2="302.00" y2="722.08" stroke="#8064A2" stroke-width="1.2"/>
<circle cx="204.00" cy="722.08" r="2.30" fill="#8064A2"/>
<rect x="219.00" y="717.48" width="78.30" height="9.20" fill="#fff"/>
<text x="219.3" y="724.9" font-size="8.2" fill="#8064A2" textLength="39.0" lengthAdjust="spacingAndGlyphs">M1.2 / E12</text>
<text x="260.6" y="724.7" font-size="8" fill="#8064A2" textLength="12.4" lengthAdjust="spacingAndGlyphs">-----</text>
<text x="275.9" y="724.9" font-size="8.2" fill="#8064A2" textLength="20.9" lengthAdjust="spacingAndGlyphs">PIN04</text>
<line x1="336.50" y1="722.08" x2="432.40" y2="722.08" stroke="#8064A2" stroke-width="1.2"/>
<rect x="339.60" y="717.48" width="79.00" height="9.20" fill="#fff"/>
<text x="339.9" y="724.9" font-size="8.2" fill="#8064A2" textLength="20.9" lengthAdjust="spacingAndGlyphs">PIN04</text>
<text x="363.4" y="724.7" font-size="8" fill="#8064A2" textLength="12.4" lengthAdjust="spacingAndGlyphs">-----</text>
<text x="379.0" y="724.9" font-size="8.2" fill="#8064A2" textLength="39.3" lengthAdjust="spacingAndGlyphs">M1.2 / E12</text>
<line x1="204.00" y1="732.04" x2="302.00" y2="732.04" stroke="#8064A2" stroke-width="1.2"/>
<rect x="219.00" y="727.44" width="78.30" height="9.20" fill="#fff"/>
<text x="219.3" y="734.8" font-size="8.2" fill="#8064A2" textLength="39.0" lengthAdjust="spacingAndGlyphs">M1.2 / E13</text>
<text x="260.6" y="734.6" font-size="8" fill="#8064A2" textLength="12.4" lengthAdjust="spacingAndGlyphs">-----</text>
<text x="275.9" y="734.8" font-size="8.2" fill="#8064A2" textLength="20.9" lengthAdjust="spacingAndGlyphs">PIN05</text>
<line x1="336.50" y1="732.04" x2="451.90" y2="732.04" stroke="#8064A2" stroke-width="1.2"/>
<rect x="339.60" y="727.44" width="79.00" height="9.20" fill="#fff"/>
<text x="339.9" y="734.8" font-size="8.2" fill="#8064A2" textLength="20.9" lengthAdjust="spacingAndGlyphs">PIN05</text>
<text x="363.4" y="734.6" font-size="8" fill="#8064A2" textLength="12.4" lengthAdjust="spacingAndGlyphs">-----</text>
<text x="379.0" y="734.8" font-size="8.2" fill="#8064A2" textLength="39.3" lengthAdjust="spacingAndGlyphs">M1.2 / E13</text>
<line x1="185.10" y1="742.00" x2="302.00" y2="742.00" stroke="#8064A2" stroke-width="1.2"/>
<circle cx="204.00" cy="742.00" r="2.30" fill="#8064A2"/>
<rect x="219.00" y="737.40" width="78.30" height="9.20" fill="#fff"/>
<text x="219.3" y="744.8" font-size="8.2" fill="#8064A2" textLength="39.0" lengthAdjust="spacingAndGlyphs">M1.2 / E14</text>
<text x="260.6" y="744.6" font-size="8" fill="#8064A2" textLength="12.4" lengthAdjust="spacingAndGlyphs">-----</text>
<text x="275.9" y="744.8" font-size="8.2" fill="#8064A2" textLength="20.9" lengthAdjust="spacingAndGlyphs">PIN06</text>
<line x1="336.50" y1="742.00" x2="432.40" y2="742.00" stroke="#8064A2" stroke-width="1.2"/>
<rect x="339.60" y="737.40" width="79.00" height="9.20" fill="#fff"/>
<text x="339.9" y="744.8" font-size="8.2" fill="#8064A2" textLength="20.9" lengthAdjust="spacingAndGlyphs">PIN06</text>
<text x="363.4" y="744.6" font-size="8" fill="#8064A2" textLength="12.4" lengthAdjust="spacingAndGlyphs">-----</text>
<text x="379.0" y="744.8" font-size="8.2" fill="#8064A2" textLength="39.3" lengthAdjust="spacingAndGlyphs">M1.2 / E14</text>
<line x1="185.10" y1="751.96" x2="302.00" y2="751.96" stroke="#8064A2" stroke-width="1.2"/>
<rect x="219.00" y="747.36" width="78.30" height="9.20" fill="#fff"/>
<text x="219.3" y="754.8" font-size="8.2" fill="#8064A2" textLength="39.0" lengthAdjust="spacingAndGlyphs">M1.2 / E15</text>
<text x="260.6" y="754.6" font-size="8" fill="#8064A2" textLength="12.4" lengthAdjust="spacingAndGlyphs">-----</text>
<text x="275.9" y="754.8" font-size="8.2" fill="#8064A2" textLength="20.9" lengthAdjust="spacingAndGlyphs">PIN07</text>
<line x1="336.50" y1="751.96" x2="432.40" y2="751.96" stroke="#8064A2" stroke-width="1.2"/>
<rect x="339.60" y="747.36" width="79.00" height="9.20" fill="#fff"/>
<text x="339.9" y="754.8" font-size="8.2" fill="#8064A2" textLength="20.9" lengthAdjust="spacingAndGlyphs">PIN07</text>
<text x="363.4" y="754.6" font-size="8" fill="#8064A2" textLength="12.4" lengthAdjust="spacingAndGlyphs">-----</text>
<text x="379.0" y="754.8" font-size="8.2" fill="#8064A2" textLength="39.3" lengthAdjust="spacingAndGlyphs">M1.2 / E15</text>
<line x1="185.10" y1="761.92" x2="302.00" y2="761.92" stroke="#8064A2" stroke-width="1.2"/>
<rect x="219.00" y="757.32" width="78.30" height="9.20" fill="#fff"/>
<text x="219.3" y="764.7" font-size="8.2" fill="#8064A2" textLength="39.0" lengthAdjust="spacingAndGlyphs">M1.2 / E16</text>
<text x="260.6" y="764.5" font-size="8" fill="#8064A2" textLength="12.4" lengthAdjust="spacingAndGlyphs">-----</text>
<text x="275.9" y="764.7" font-size="8.2" fill="#8064A2" textLength="20.9" lengthAdjust="spacingAndGlyphs">PIN08</text>
<line x1="336.50" y1="761.92" x2="432.40" y2="761.92" stroke="#8064A2" stroke-width="1.2"/>
<rect x="339.60" y="757.32" width="79.00" height="9.20" fill="#fff"/>
<text x="339.9" y="764.7" font-size="8.2" fill="#8064A2" textLength="20.9" lengthAdjust="spacingAndGlyphs">PIN08</text>
<text x="363.4" y="764.5" font-size="8" fill="#8064A2" textLength="12.4" lengthAdjust="spacingAndGlyphs">-----</text>
<text x="379.0" y="764.7" font-size="8.2" fill="#8064A2" textLength="39.3" lengthAdjust="spacingAndGlyphs">M1.2 / E16</text>
<line x1="185.10" y1="771.88" x2="302.00" y2="771.88" stroke="#8064A2" stroke-width="1.2"/>
<rect x="219.00" y="767.28" width="78.30" height="9.20" fill="#fff"/>
<text x="219.3" y="774.7" font-size="8.2" fill="#8064A2" textLength="39.0" lengthAdjust="spacingAndGlyphs">M2.1 / E17</text>
<text x="260.6" y="774.5" font-size="8" fill="#8064A2" textLength="12.4" lengthAdjust="spacingAndGlyphs">-----</text>
<text x="275.9" y="774.7" font-size="8.2" fill="#8064A2" textLength="20.9" lengthAdjust="spacingAndGlyphs">PIN09</text>
<line x1="336.50" y1="771.88" x2="432.40" y2="771.88" stroke="#8064A2" stroke-width="1.2"/>
<rect x="339.60" y="767.28" width="79.00" height="9.20" fill="#fff"/>
<text x="339.9" y="774.7" font-size="8.2" fill="#8064A2" textLength="20.9" lengthAdjust="spacingAndGlyphs">PIN09</text>
<text x="363.4" y="774.5" font-size="8" fill="#8064A2" textLength="12.4" lengthAdjust="spacingAndGlyphs">-----</text>
<text x="379.0" y="774.7" font-size="8.2" fill="#8064A2" textLength="39.3" lengthAdjust="spacingAndGlyphs">M2.1 / E17</text>
<line x1="185.10" y1="781.84" x2="302.00" y2="781.84" stroke="#8064A2" stroke-width="1.2"/>
<rect x="219.00" y="777.24" width="78.30" height="9.20" fill="#fff"/>
<text x="219.3" y="784.6" font-size="8.2" fill="#8064A2" textLength="39.0" lengthAdjust="spacingAndGlyphs">M2.1 / E18</text>
<text x="260.6" y="784.4" font-size="8" fill="#8064A2" textLength="12.4" lengthAdjust="spacingAndGlyphs">-----</text>
<text x="275.9" y="784.6" font-size="8.2" fill="#8064A2" textLength="20.9" lengthAdjust="spacingAndGlyphs">PIN10</text>
<line x1="336.50" y1="781.84" x2="432.40" y2="781.84" stroke="#8064A2" stroke-width="1.2"/>
<rect x="339.60" y="777.24" width="79.00" height="9.20" fill="#fff"/>
<text x="339.9" y="784.6" font-size="8.2" fill="#8064A2" textLength="20.9" lengthAdjust="spacingAndGlyphs">PIN10</text>
<text x="363.4" y="784.4" font-size="8" fill="#8064A2" textLength="12.4" lengthAdjust="spacingAndGlyphs">-----</text>
<text x="379.0" y="784.6" font-size="8.2" fill="#8064A2" textLength="39.3" lengthAdjust="spacingAndGlyphs">M2.1 / E18</text>
<line x1="185.10" y1="791.80" x2="302.00" y2="791.80" stroke="#8064A2" stroke-width="1.2"/>
<circle cx="204.00" cy="791.80" r="2.30" fill="#8064A2"/>
<rect x="219.00" y="787.20" width="78.30" height="9.20" fill="#fff"/>
<text x="219.3" y="794.6" font-size="8.2" fill="#8064A2" textLength="39.0" lengthAdjust="spacingAndGlyphs">M2.1 / E19</text>
<text x="260.6" y="794.4" font-size="8" fill="#8064A2" textLength="12.4" lengthAdjust="spacingAndGlyphs">-----</text>
<text x="275.9" y="794.6" font-size="8.2" fill="#8064A2" textLength="20.9" lengthAdjust="spacingAndGlyphs">PIN11</text>
<line x1="336.50" y1="791.80" x2="432.40" y2="791.80" stroke="#8064A2" stroke-width="1.2"/>
<rect x="339.60" y="787.20" width="79.00" height="9.20" fill="#fff"/>
<text x="339.9" y="794.6" font-size="8.2" fill="#8064A2" textLength="20.9" lengthAdjust="spacingAndGlyphs">PIN11</text>
<text x="363.4" y="794.4" font-size="8" fill="#8064A2" textLength="12.4" lengthAdjust="spacingAndGlyphs">-----</text>
<text x="379.0" y="794.6" font-size="8.2" fill="#8064A2" textLength="39.3" lengthAdjust="spacingAndGlyphs">M2.1 / E19</text>
<line x1="185.10" y1="801.76" x2="302.00" y2="801.76" stroke="#8064A2" stroke-width="1.2"/>
<circle cx="204.00" cy="801.76" r="2.30" fill="#8064A2"/>
<rect x="219.00" y="797.16" width="78.30" height="9.20" fill="#fff"/>
<text x="219.3" y="804.6" font-size="8.2" fill="#8064A2" textLength="39.0" lengthAdjust="spacingAndGlyphs">M2.2 / E29</text>
<text x="260.6" y="804.4" font-size="8" fill="#8064A2" textLength="12.4" lengthAdjust="spacingAndGlyphs">-----</text>
<text x="275.9" y="804.6" font-size="8.2" fill="#8064A2" textLength="20.9" lengthAdjust="spacingAndGlyphs">PIN12</text>
<line x1="336.50" y1="801.76" x2="451.90" y2="801.76" stroke="#8064A2" stroke-width="1.2"/>
<rect x="339.60" y="797.16" width="79.00" height="9.20" fill="#fff"/>
<text x="339.9" y="804.6" font-size="8.2" fill="#8064A2" textLength="20.9" lengthAdjust="spacingAndGlyphs">PIN12</text>
<text x="363.4" y="804.4" font-size="8" fill="#8064A2" textLength="12.4" lengthAdjust="spacingAndGlyphs">-----</text>
<text x="379.0" y="804.6" font-size="8.2" fill="#8064A2" textLength="39.3" lengthAdjust="spacingAndGlyphs">M2.2 / E29</text>
<line x1="185.10" y1="811.72" x2="302.00" y2="811.72" stroke="#8064A2" stroke-width="1.2"/>
<rect x="219.00" y="807.12" width="78.30" height="9.20" fill="#fff"/>
<text x="219.3" y="814.5" font-size="8.2" fill="#8064A2" textLength="39.0" lengthAdjust="spacingAndGlyphs">M2.2 / E30</text>
<text x="260.6" y="814.3" font-size="8" fill="#8064A2" textLength="12.4" lengthAdjust="spacingAndGlyphs">-----</text>
<text x="275.9" y="814.5" font-size="8.2" fill="#8064A2" textLength="20.9" lengthAdjust="spacingAndGlyphs">PIN13</text>
<line x1="336.50" y1="811.72" x2="432.40" y2="811.72" stroke="#8064A2" stroke-width="1.2"/>
<rect x="339.60" y="807.12" width="79.00" height="9.20" fill="#fff"/>
<text x="339.9" y="814.5" font-size="8.2" fill="#8064A2" textLength="20.9" lengthAdjust="spacingAndGlyphs">PIN13</text>
<text x="363.4" y="814.3" font-size="8" fill="#8064A2" textLength="12.4" lengthAdjust="spacingAndGlyphs">-----</text>
<text x="379.0" y="814.5" font-size="8.2" fill="#8064A2" textLength="39.3" lengthAdjust="spacingAndGlyphs">M2.2 / E30</text>
<line x1="185.10" y1="821.68" x2="302.00" y2="821.68" stroke="#8064A2" stroke-width="1.2"/>
<rect x="219.00" y="817.08" width="78.30" height="9.20" fill="#fff"/>
<text x="219.3" y="824.5" font-size="8.2" fill="#8064A2" textLength="39.0" lengthAdjust="spacingAndGlyphs">M2.2 / E31</text>
<text x="260.6" y="824.3" font-size="8" fill="#8064A2" textLength="12.4" lengthAdjust="spacingAndGlyphs">-----</text>
<text x="275.9" y="824.5" font-size="8.2" fill="#8064A2" textLength="20.9" lengthAdjust="spacingAndGlyphs">PIN14</text>
<line x1="336.50" y1="821.68" x2="432.40" y2="821.68" stroke="#8064A2" stroke-width="1.2"/>
<rect x="339.60" y="817.08" width="79.00" height="9.20" fill="#fff"/>
<text x="339.9" y="824.5" font-size="8.2" fill="#8064A2" textLength="20.9" lengthAdjust="spacingAndGlyphs">PIN14</text>
<text x="363.4" y="824.3" font-size="8" fill="#8064A2" textLength="12.4" lengthAdjust="spacingAndGlyphs">-----</text>
<text x="379.0" y="824.5" font-size="8.2" fill="#8064A2" textLength="39.3" lengthAdjust="spacingAndGlyphs">M2.2 / E31</text>
<line x1="185.10" y1="831.64" x2="302.00" y2="831.64" stroke="#8064A2" stroke-width="1.2"/>
<rect x="219.00" y="827.04" width="78.30" height="9.20" fill="#fff"/>
<text x="219.3" y="834.4" font-size="8.2" fill="#8064A2" textLength="39.0" lengthAdjust="spacingAndGlyphs">M2.2 / E32</text>
<text x="260.6" y="834.2" font-size="8" fill="#8064A2" textLength="12.4" lengthAdjust="spacingAndGlyphs">-----</text>
<text x="275.9" y="834.4" font-size="8.2" fill="#8064A2" textLength="20.9" lengthAdjust="spacingAndGlyphs">PIN15</text>
<line x1="336.50" y1="831.64" x2="432.40" y2="831.64" stroke="#8064A2" stroke-width="1.2"/>
<rect x="339.60" y="827.04" width="79.00" height="9.20" fill="#fff"/>
<text x="339.9" y="834.4" font-size="8.2" fill="#8064A2" textLength="20.9" lengthAdjust="spacingAndGlyphs">PIN15</text>
<text x="363.4" y="834.2" font-size="8" fill="#8064A2" textLength="12.4" lengthAdjust="spacingAndGlyphs">-----</text>
<text x="379.0" y="834.4" font-size="8.2" fill="#8064A2" textLength="39.3" lengthAdjust="spacingAndGlyphs">M2.2 / E32</text>
<line x1="185.10" y1="841.60" x2="302.00" y2="841.60" stroke="#8064A2" stroke-width="1.2"/>
<rect x="219.00" y="837.00" width="78.30" height="9.20" fill="#fff"/>
<text x="219.3" y="844.4" font-size="8.2" fill="#8064A2" textLength="39.0" lengthAdjust="spacingAndGlyphs">M3.1 / E33</text>
<text x="260.6" y="844.2" font-size="8" fill="#8064A2" textLength="12.4" lengthAdjust="spacingAndGlyphs">-----</text>
<text x="275.9" y="844.4" font-size="8.2" fill="#8064A2" textLength="20.9" lengthAdjust="spacingAndGlyphs">PIN16</text>
<line x1="336.50" y1="841.60" x2="432.40" y2="841.60" stroke="#8064A2" stroke-width="1.2"/>
<rect x="339.60" y="837.00" width="79.00" height="9.20" fill="#fff"/>
<text x="339.9" y="844.4" font-size="8.2" fill="#8064A2" textLength="20.9" lengthAdjust="spacingAndGlyphs">PIN16</text>
<text x="363.4" y="844.2" font-size="8" fill="#8064A2" textLength="12.4" lengthAdjust="spacingAndGlyphs">-----</text>
<text x="379.0" y="844.4" font-size="8.2" fill="#8064A2" textLength="39.3" lengthAdjust="spacingAndGlyphs">M3.1 / E33</text>
<line x1="185.10" y1="851.56" x2="302.00" y2="851.56" stroke="#8064A2" stroke-width="1.2"/>
<rect x="219.00" y="846.96" width="78.30" height="9.20" fill="#fff"/>
<text x="219.3" y="854.4" font-size="8.2" fill="#8064A2" textLength="39.0" lengthAdjust="spacingAndGlyphs">M3.1 / E34</text>
<text x="260.6" y="854.2" font-size="8" fill="#8064A2" textLength="12.4" lengthAdjust="spacingAndGlyphs">-----</text>
<text x="275.9" y="854.4" font-size="8.2" fill="#8064A2" textLength="20.9" lengthAdjust="spacingAndGlyphs">PIN17</text>
<line x1="336.50" y1="851.56" x2="432.40" y2="851.56" stroke="#8064A2" stroke-width="1.2"/>
<rect x="339.60" y="846.96" width="79.00" height="9.20" fill="#fff"/>
<text x="339.9" y="854.4" font-size="8.2" fill="#8064A2" textLength="20.9" lengthAdjust="spacingAndGlyphs">PIN17</text>
<text x="363.4" y="854.2" font-size="8" fill="#8064A2" textLength="12.4" lengthAdjust="spacingAndGlyphs">-----</text>
<text x="379.0" y="854.4" font-size="8.2" fill="#8064A2" textLength="39.3" lengthAdjust="spacingAndGlyphs">M3.1 / E34</text>
<line x1="185.10" y1="861.52" x2="302.00" y2="861.52" stroke="#8064A2" stroke-width="1.2"/>
<rect x="219.00" y="856.92" width="78.30" height="9.20" fill="#fff"/>
<text x="219.3" y="864.3" font-size="8.2" fill="#8064A2" textLength="39.0" lengthAdjust="spacingAndGlyphs">M3.2 / E41</text>
<text x="260.6" y="864.1" font-size="8" fill="#8064A2" textLength="12.4" lengthAdjust="spacingAndGlyphs">-----</text>
<text x="275.9" y="864.3" font-size="8.2" fill="#8064A2" textLength="20.9" lengthAdjust="spacingAndGlyphs">PIN18</text>
<line x1="336.50" y1="861.52" x2="432.40" y2="861.52" stroke="#8064A2" stroke-width="1.2"/>
<rect x="339.60" y="856.92" width="79.00" height="9.20" fill="#fff"/>
<text x="339.9" y="864.3" font-size="8.2" fill="#8064A2" textLength="20.9" lengthAdjust="spacingAndGlyphs">PIN18</text>
<text x="363.4" y="864.1" font-size="8" fill="#8064A2" textLength="12.4" lengthAdjust="spacingAndGlyphs">-----</text>
<text x="379.0" y="864.3" font-size="8.2" fill="#8064A2" textLength="39.3" lengthAdjust="spacingAndGlyphs">M3.2 / E41</text>
<line x1="185.10" y1="871.48" x2="302.00" y2="871.48" stroke="#8064A2" stroke-width="1.2"/>
<rect x="219.00" y="866.88" width="78.30" height="9.20" fill="#fff"/>
<text x="219.3" y="874.3" font-size="8.2" fill="#8064A2" textLength="39.0" lengthAdjust="spacingAndGlyphs">M3.2 / E42</text>
<text x="260.6" y="874.1" font-size="8" fill="#8064A2" textLength="12.4" lengthAdjust="spacingAndGlyphs">-----</text>
<text x="275.9" y="874.3" font-size="8.2" fill="#8064A2" textLength="20.9" lengthAdjust="spacingAndGlyphs">PIN19</text>
<line x1="336.50" y1="871.48" x2="432.40" y2="871.48" stroke="#8064A2" stroke-width="1.2"/>
<rect x="339.60" y="866.88" width="79.00" height="9.20" fill="#fff"/>
<text x="339.9" y="874.3" font-size="8.2" fill="#8064A2" textLength="20.9" lengthAdjust="spacingAndGlyphs">PIN19</text>
<text x="363.4" y="874.1" font-size="8" fill="#8064A2" textLength="12.4" lengthAdjust="spacingAndGlyphs">-----</text>
<text x="379.0" y="874.3" font-size="8.2" fill="#8064A2" textLength="39.3" lengthAdjust="spacingAndGlyphs">M3.2 / E42</text>
<line x1="185.10" y1="881.44" x2="302.00" y2="881.44" stroke="#8064A2" stroke-width="1.2"/>
<rect x="219.00" y="876.84" width="78.30" height="9.20" fill="#fff"/>
<text x="219.3" y="884.2" font-size="8.2" fill="#8064A2" textLength="39.0" lengthAdjust="spacingAndGlyphs">M3.2 / E43</text>
<text x="260.6" y="884.0" font-size="8" fill="#8064A2" textLength="12.4" lengthAdjust="spacingAndGlyphs">-----</text>
<text x="275.9" y="884.2" font-size="8.2" fill="#8064A2" textLength="20.9" lengthAdjust="spacingAndGlyphs">PIN20</text>
<line x1="336.50" y1="881.44" x2="432.40" y2="881.44" stroke="#8064A2" stroke-width="1.2"/>
<rect x="339.60" y="876.84" width="79.00" height="9.20" fill="#fff"/>
<text x="339.9" y="884.2" font-size="8.2" fill="#8064A2" textLength="20.9" lengthAdjust="spacingAndGlyphs">PIN20</text>
<text x="363.4" y="884.0" font-size="8" fill="#8064A2" textLength="12.4" lengthAdjust="spacingAndGlyphs">-----</text>
<text x="379.0" y="884.2" font-size="8.2" fill="#8064A2" textLength="39.3" lengthAdjust="spacingAndGlyphs">M3.2 / E43</text>
<line x1="185.10" y1="891.40" x2="302.00" y2="891.40" stroke="#8064A2" stroke-width="1.2"/>
<rect x="219.00" y="886.80" width="78.30" height="9.20" fill="#fff"/>
<text x="219.3" y="894.2" font-size="8.2" fill="#8064A2" textLength="39.0" lengthAdjust="spacingAndGlyphs">M3.2 / E44</text>
<text x="260.6" y="894.0" font-size="8" fill="#8064A2" textLength="12.4" lengthAdjust="spacingAndGlyphs">-----</text>
<text x="275.9" y="894.2" font-size="8.2" fill="#8064A2" textLength="20.9" lengthAdjust="spacingAndGlyphs">PIN21</text>
<line x1="336.50" y1="891.40" x2="432.40" y2="891.40" stroke="#8064A2" stroke-width="1.2"/>
<rect x="339.60" y="886.80" width="79.00" height="9.20" fill="#fff"/>
<text x="339.9" y="894.2" font-size="8.2" fill="#8064A2" textLength="20.9" lengthAdjust="spacingAndGlyphs">PIN21</text>
<text x="363.4" y="894.0" font-size="8" fill="#8064A2" textLength="12.4" lengthAdjust="spacingAndGlyphs">-----</text>
<text x="379.0" y="894.2" font-size="8.2" fill="#8064A2" textLength="39.3" lengthAdjust="spacingAndGlyphs">M3.2 / E44</text>
<line x1="185.10" y1="901.36" x2="302.00" y2="901.36" stroke="#8064A2" stroke-width="1.2"/>
<rect x="219.00" y="896.76" width="78.30" height="9.20" fill="#fff"/>
<text x="219.3" y="904.2" font-size="8.2" fill="#8064A2" textLength="39.0" lengthAdjust="spacingAndGlyphs">M3.2 / E45</text>
<text x="260.6" y="904.0" font-size="8" fill="#8064A2" textLength="12.4" lengthAdjust="spacingAndGlyphs">-----</text>
<text x="275.9" y="904.2" font-size="8.2" fill="#8064A2" textLength="20.9" lengthAdjust="spacingAndGlyphs">PIN22</text>
<line x1="336.50" y1="901.36" x2="432.40" y2="901.36" stroke="#8064A2" stroke-width="1.2"/>
<rect x="339.60" y="896.76" width="79.00" height="9.20" fill="#fff"/>
<text x="339.9" y="904.2" font-size="8.2" fill="#8064A2" textLength="20.9" lengthAdjust="spacingAndGlyphs">PIN22</text>
<text x="363.4" y="904.0" font-size="8" fill="#8064A2" textLength="12.4" lengthAdjust="spacingAndGlyphs">-----</text>
<text x="379.0" y="904.2" font-size="8.2" fill="#8064A2" textLength="39.3" lengthAdjust="spacingAndGlyphs">M3.2 / E45</text>
<line x1="185.10" y1="911.32" x2="302.00" y2="911.32" stroke="#8064A2" stroke-width="1.2"/>
<rect x="219.00" y="906.72" width="78.30" height="9.20" fill="#fff"/>
<text x="219.3" y="914.1" font-size="8.2" fill="#8064A2" textLength="39.0" lengthAdjust="spacingAndGlyphs">M3.2 / E46</text>
<text x="260.6" y="913.9" font-size="8" fill="#8064A2" textLength="12.4" lengthAdjust="spacingAndGlyphs">-----</text>
<text x="275.9" y="914.1" font-size="8.2" fill="#8064A2" textLength="20.9" lengthAdjust="spacingAndGlyphs">PIN23</text>
<line x1="336.50" y1="911.32" x2="432.40" y2="911.32" stroke="#8064A2" stroke-width="1.2"/>
<rect x="339.60" y="906.72" width="79.00" height="9.20" fill="#fff"/>
<text x="339.9" y="914.1" font-size="8.2" fill="#8064A2" textLength="20.9" lengthAdjust="spacingAndGlyphs">PIN23</text>
<text x="363.4" y="913.9" font-size="8" fill="#8064A2" textLength="12.4" lengthAdjust="spacingAndGlyphs">-----</text>
<text x="379.0" y="914.1" font-size="8.2" fill="#8064A2" textLength="39.3" lengthAdjust="spacingAndGlyphs">M3.2 / E46</text>
<line x1="185.10" y1="921.28" x2="302.00" y2="921.28" stroke="#8064A2" stroke-width="1.2"/>
<rect x="219.00" y="916.68" width="78.30" height="9.20" fill="#fff"/>
<text x="219.3" y="924.1" font-size="8.2" fill="#8064A2" textLength="39.0" lengthAdjust="spacingAndGlyphs">M3.2 / E47</text>
<text x="260.6" y="923.9" font-size="8" fill="#8064A2" textLength="12.4" lengthAdjust="spacingAndGlyphs">-----</text>
<text x="275.9" y="924.1" font-size="8.2" fill="#8064A2" textLength="20.9" lengthAdjust="spacingAndGlyphs">PIN24</text>
<line x1="336.50" y1="921.28" x2="432.40" y2="921.28" stroke="#8064A2" stroke-width="1.2"/>
<rect x="339.60" y="916.68" width="79.00" height="9.20" fill="#fff"/>
<text x="339.9" y="924.1" font-size="8.2" fill="#8064A2" textLength="20.9" lengthAdjust="spacingAndGlyphs">PIN24</text>
<text x="363.4" y="923.9" font-size="8" fill="#8064A2" textLength="12.4" lengthAdjust="spacingAndGlyphs">-----</text>
<text x="379.0" y="924.1" font-size="8.2" fill="#8064A2" textLength="39.3" lengthAdjust="spacingAndGlyphs">M3.2 / E47</text>
<line x1="185.10" y1="931.24" x2="302.00" y2="931.24" stroke="#8064A2" stroke-width="1.2"/>
<rect x="219.00" y="926.64" width="78.30" height="9.20" fill="#fff"/>
<text x="219.3" y="934.0" font-size="8.2" fill="#8064A2" textLength="39.0" lengthAdjust="spacingAndGlyphs">M3.2 / E48</text>
<text x="260.6" y="933.8" font-size="8" fill="#8064A2" textLength="12.4" lengthAdjust="spacingAndGlyphs">-----</text>
<text x="275.9" y="934.0" font-size="8.2" fill="#8064A2" textLength="20.9" lengthAdjust="spacingAndGlyphs">PIN25</text>
<line x1="336.50" y1="931.24" x2="432.40" y2="931.24" stroke="#8064A2" stroke-width="1.2"/>
<rect x="339.60" y="926.64" width="79.00" height="9.20" fill="#fff"/>
<text x="339.9" y="934.0" font-size="8.2" fill="#8064A2" textLength="20.9" lengthAdjust="spacingAndGlyphs">PIN25</text>
<text x="363.4" y="933.8" font-size="8" fill="#8064A2" textLength="12.4" lengthAdjust="spacingAndGlyphs">-----</text>
<text x="379.0" y="934.0" font-size="8.2" fill="#8064A2" textLength="39.3" lengthAdjust="spacingAndGlyphs">M3.2 / E48</text>
<line x1="185.10" y1="941.20" x2="302.00" y2="941.20" stroke="#8064A2" stroke-width="1.2"/>
<rect x="219.00" y="936.60" width="78.30" height="9.20" fill="#fff"/>
<text x="219.3" y="944.0" font-size="8.2" fill="#8064A2" textLength="39.0" lengthAdjust="spacingAndGlyphs">M4.1 / E49</text>
<text x="260.6" y="943.8" font-size="8" fill="#8064A2" textLength="12.4" lengthAdjust="spacingAndGlyphs">-----</text>
<text x="275.9" y="944.0" font-size="8.2" fill="#8064A2" textLength="20.9" lengthAdjust="spacingAndGlyphs">PIN26</text>
<line x1="336.50" y1="941.20" x2="432.40" y2="941.20" stroke="#8064A2" stroke-width="1.2"/>
<rect x="339.60" y="936.60" width="79.00" height="9.20" fill="#fff"/>
<text x="339.9" y="944.0" font-size="8.2" fill="#8064A2" textLength="20.9" lengthAdjust="spacingAndGlyphs">PIN26</text>
<text x="363.4" y="943.8" font-size="8" fill="#8064A2" textLength="12.4" lengthAdjust="spacingAndGlyphs">-----</text>
<text x="379.0" y="944.0" font-size="8.2" fill="#8064A2" textLength="39.3" lengthAdjust="spacingAndGlyphs">M4.1 / E49</text>
<line x1="185.10" y1="951.16" x2="302.00" y2="951.16" stroke="#8064A2" stroke-width="1.2"/>
<rect x="219.00" y="946.56" width="78.30" height="9.20" fill="#fff"/>
<text x="219.3" y="954.0" font-size="8.2" fill="#8064A2" textLength="39.0" lengthAdjust="spacingAndGlyphs">M4.1 / E50</text>
<text x="260.6" y="953.8" font-size="8" fill="#8064A2" textLength="12.4" lengthAdjust="spacingAndGlyphs">-----</text>
<text x="275.9" y="954.0" font-size="8.2" fill="#8064A2" textLength="20.9" lengthAdjust="spacingAndGlyphs">PIN27</text>
<line x1="336.50" y1="951.16" x2="432.40" y2="951.16" stroke="#8064A2" stroke-width="1.2"/>
<rect x="339.60" y="946.56" width="79.00" height="9.20" fill="#fff"/>
<text x="339.9" y="954.0" font-size="8.2" fill="#8064A2" textLength="20.9" lengthAdjust="spacingAndGlyphs">PIN27</text>
<text x="363.4" y="953.8" font-size="8" fill="#8064A2" textLength="12.4" lengthAdjust="spacingAndGlyphs">-----</text>
<text x="379.0" y="954.0" font-size="8.2" fill="#8064A2" textLength="39.3" lengthAdjust="spacingAndGlyphs">M4.1 / E50</text>
<line x1="185.10" y1="961.12" x2="302.00" y2="961.12" stroke="#8064A2" stroke-width="1.2"/>
<rect x="219.00" y="956.52" width="78.30" height="9.20" fill="#fff"/>
<text x="219.3" y="963.9" font-size="8.2" fill="#8064A2" textLength="39.0" lengthAdjust="spacingAndGlyphs">M4.1 / E51</text>
<text x="260.6" y="963.7" font-size="8" fill="#8064A2" textLength="12.4" lengthAdjust="spacingAndGlyphs">-----</text>
<text x="275.9" y="963.9" font-size="8.2" fill="#8064A2" textLength="20.9" lengthAdjust="spacingAndGlyphs">PIN28</text>
<line x1="336.50" y1="961.12" x2="432.40" y2="961.12" stroke="#8064A2" stroke-width="1.2"/>
<rect x="339.60" y="956.52" width="79.00" height="9.20" fill="#fff"/>
<text x="339.9" y="963.9" font-size="8.2" fill="#8064A2" textLength="20.9" lengthAdjust="spacingAndGlyphs">PIN28</text>
<text x="363.4" y="963.7" font-size="8" fill="#8064A2" textLength="12.4" lengthAdjust="spacingAndGlyphs">-----</text>
<text x="379.0" y="963.9" font-size="8.2" fill="#8064A2" textLength="39.3" lengthAdjust="spacingAndGlyphs">M4.1 / E51</text>
<line x1="204.00" y1="971.08" x2="302.00" y2="971.08" stroke="#8064A2" stroke-width="1.2"/>
<rect x="219.00" y="966.48" width="78.30" height="9.20" fill="#fff"/>
<text x="219.3" y="973.9" font-size="8.2" fill="#8064A2" textLength="39.0" lengthAdjust="spacingAndGlyphs">M4.1 / E52</text>
<text x="260.6" y="973.7" font-size="8" fill="#8064A2" textLength="12.4" lengthAdjust="spacingAndGlyphs">-----</text>
<text x="275.9" y="973.9" font-size="8.2" fill="#8064A2" textLength="20.9" lengthAdjust="spacingAndGlyphs">PIN29</text>
<line x1="336.50" y1="971.08" x2="432.40" y2="971.08" stroke="#8064A2" stroke-width="1.2"/>
<rect x="339.60" y="966.48" width="79.00" height="9.20" fill="#fff"/>
<text x="339.9" y="973.9" font-size="8.2" fill="#8064A2" textLength="20.9" lengthAdjust="spacingAndGlyphs">PIN29</text>
<text x="363.4" y="973.7" font-size="8" fill="#8064A2" textLength="12.4" lengthAdjust="spacingAndGlyphs">-----</text>
<text x="379.0" y="973.9" font-size="8.2" fill="#8064A2" textLength="39.3" lengthAdjust="spacingAndGlyphs">M4.1 / E52</text>
<circle cx="982.70" cy="831.60" r="2.60" fill="#8064A2"/>
</g>
<rect x="57.00" y="185.00" width="1841.00" height="1.00" fill="#9E9E9E"/>
<rect x="73.00" y="169.00" width="1.00" height="804.00" fill="#9E9E9E"/>
<g shape-rendering="crispEdges"><rect x="75.00" y="179.00" width="1.00" height="6.00" fill="#9E9E9E"/><rect x="80.00" y="179.00" width="1.00" height="6.00" fill="#9E9E9E"/><rect x="85.00" y="179.00" width="1.00" height="6.00" fill="#9E9E9E"/><rect x="90.00" y="179.00" width="1.00" height="6.00" fill="#9E9E9E"/><rect x="95.00" y="174.00" width="1.00" height="11.00" fill="#9E9E9E"/><rect x="100.00" y="179.00" width="1.00" height="6.00" fill="#9E9E9E"/><rect x="105.00" y="179.00" width="1.00" height="6.00" fill="#9E9E9E"/><rect x="110.00" y="179.00" width="1.00" height="6.00" fill="#9E9E9E"/><rect x="115.00" y="179.00" width="1.00" height="6.00" fill="#9E9E9E"/><rect x="120.00" y="169.00" width="1.00" height="16.00" fill="#9E9E9E"/><rect x="125.00" y="179.00" width="1.00" height="6.00" fill="#9E9E9E"/><rect x="130.00" y="179.00" width="1.00" height="6.00" fill="#9E9E9E"/><rect x="135.00" y="179.00" width="1.00" height="6.00" fill="#9E9E9E"/><rect x="140.00" y="179.00" width="1.00" height="6.00" fill="#9E9E9E"/><rect x="145.00" y="174.00" width="1.00" height="11.00" fill="#9E9E9E"/><rect x="150.00" y="179.00" width="1.00" height="6.00" fill="#9E9E9E"/><rect x="155.00" y="179.00" width="1.00" height="6.00" fill="#9E9E9E"/><rect x="160.00" y="179.00" width="1.00" height="6.00" fill="#9E9E9E"/><rect x="165.00" y="179.00" width="1.00" height="6.00" fill="#9E9E9E"/><rect x="170.00" y="169.00" width="1.00" height="16.00" fill="#9E9E9E"/><rect x="175.00" y="179.00" width="1.00" height="6.00" fill="#9E9E9E"/><rect x="180.00" y="179.00" width="1.00" height="6.00" fill="#9E9E9E"/><rect x="185.00" y="179.00" width="1.00" height="6.00" fill="#9E9E9E"/><rect x="190.00" y="179.00" width="1.00" height="6.00" fill="#9E9E9E"/><rect x="195.00" y="174.00" width="1.00" height="11.00" fill="#9E9E9E"/><rect x="200.00" y="179.00" width="1.00" height="6.00" fill="#9E9E9E"/><rect x="205.00" y="179.00" width="1.00" height="6.00" fill="#9E9E9E"/><rect x="210.00" y="179.00" width="1.00" height="6.00" fill="#9E9E9E"/><rect x="215.00" y="179.00" width="1.00" height="6.00" fill="#9E9E9E"/><rect x="220.00" y="169.00" width="1.00" height="16.00" fill="#9E9E9E"/><rect x="225.00" y="179.00" width="1.00" height="6.00" fill="#9E9E9E"/><rect x="230.00" y="179.00" width="1.00" height="6.00" fill="#9E9E9E"/><rect x="235.00" y="179.00" width="1.00" height="6.00" fill="#9E9E9E"/><rect x="240.00" y="179.00" width="1.00" height="6.00" fill="#9E9E9E"/><rect x="245.00" y="174.00" width="1.00" height="11.00" fill="#9E9E9E"/><rect x="250.00" y="179.00" width="1.00" height="6.00" fill="#9E9E9E"/><rect x="255.00" y="179.00" width="1.00" height="6.00" fill="#9E9E9E"/><rect x="260.00" y="179.00" width="1.00" height="6.00" fill="#9E9E9E"/><rect x="265.00" y="179.00" width="1.00" height="6.00" fill="#9E9E9E"/><rect x="270.00" y="169.00" width="1.00" height="16.00" fill="#9E9E9E"/><rect x="275.00" y="179.00" width="1.00" height="6.00" fill="#9E9E9E"/><rect x="280.00" y="179.00" width="1.00" height="6.00" fill="#9E9E9E"/><rect x="285.00" y="179.00" width="1.00" height="6.00" fill="#9E9E9E"/><rect x="290.00" y="179.00" width="1.00" height="6.00" fill="#9E9E9E"/><rect x="295.00" y="174.00" width="1.00" height="11.00" fill="#9E9E9E"/><rect x="300.00" y="179.00" width="1.00" height="6.00" fill="#9E9E9E"/><rect x="305.00" y="179.00" width="1.00" height="6.00" fill="#9E9E9E"/><rect x="310.00" y="179.00" width="1.00" height="6.00" fill="#9E9E9E"/><rect x="315.00" y="179.00" width="1.00" height="6.00" fill="#9E9E9E"/><rect x="320.00" y="169.00" width="1.00" height="16.00" fill="#9E9E9E"/><rect x="325.00" y="179.00" width="1.00" height="6.00" fill="#9E9E9E"/><rect x="330.00" y="179.00" width="1.00" height="6.00" fill="#9E9E9E"/><rect x="335.00" y="179.00" width="1.00" height="6.00" fill="#9E9E9E"/><rect x="340.00" y="179.00" width="1.00" height="6.00" fill="#9E9E9E"/><rect x="345.00" y="174.00" width="1.00" height="11.00" fill="#9E9E9E"/><rect x="350.00" y="179.00" width="1.00" height="6.00" fill="#9E9E9E"/><rect x="355.00" y="179.00" width="1.00" height="6.00" fill="#9E9E9E"/><rect x="360.00" y="179.00" width="1.00" height="6.00" fill="#9E9E9E"/><rect x="365.00" y="179.00" width="1.00" height="6.00" fill="#9E9E9E"/><rect x="370.00" y="169.00" width="1.00" height="16.00" fill="#9E9E9E"/><rect x="375.00" y="179.00" width="1.00" height="6.00" fill="#9E9E9E"/><rect x="380.00" y="179.00" width="1.00" height="6.00" fill="#9E9E9E"/><rect x="385.00" y="179.00" width="1.00" height="6.00" fill="#9E9E9E"/><rect x="390.00" y="179.00" width="1.00" height="6.00" fill="#9E9E9E"/><rect x="395.00" y="174.00" width="1.00" height="11.00" fill="#9E9E9E"/><rect x="400.00" y="179.00" width="1.00" height="6.00" fill="#9E9E9E"/><rect x="405.00" y="179.00" width="1.00" height="6.00" fill="#9E9E9E"/><rect x="410.00" y="179.00" width="1.00" height="6.00" fill="#9E9E9E"/><rect x="415.00" y="179.00" width="1.00" height="6.00" fill="#9E9E9E"/><rect x="420.00" y="169.00" width="1.00" height="16.00" fill="#9E9E9E"/><rect x="425.00" y="179.00" width="1.00" height="6.00" fill="#9E9E9E"/><rect x="430.00" y="179.00" width="1.00" height="6.00" fill="#9E9E9E"/><rect x="435.00" y="179.00" width="1.00" height="6.00" fill="#9E9E9E"/><rect x="440.00" y="179.00" width="1.00" height="6.00" fill="#9E9E9E"/><rect x="445.00" y="174.00" width="1.00" height="11.00" fill="#9E9E9E"/><rect x="450.00" y="179.00" width="1.00" height="6.00" fill="#9E9E9E"/><rect x="455.00" y="179.00" width="1.00" height="6.00" fill="#9E9E9E"/><rect x="460.00" y="179.00" width="1.00" height="6.00" fill="#9E9E9E"/><rect x="465.00" y="179.00" width="1.00" height="6.00" fill="#9E9E9E"/><rect x="470.00" y="169.00" width="1.00" height="16.00" fill="#9E9E9E"/><rect x="475.00" y="179.00" width="1.00" height="6.00" fill="#9E9E9E"/><rect x="480.00" y="179.00" width="1.00" height="6.00" fill="#9E9E9E"/><rect x="485.00" y="179.00" width="1.00" height="6.00" fill="#9E9E9E"/><rect x="490.00" y="179.00" width="1.00" height="6.00" fill="#9E9E9E"/><rect x="495.00" y="174.00" width="1.00" height="11.00" fill="#9E9E9E"/><rect x="500.00" y="179.00" width="1.00" height="6.00" fill="#9E9E9E"/><rect x="505.00" y="179.00" width="1.00" height="6.00" fill="#9E9E9E"/><rect x="510.00" y="179.00" width="1.00" height="6.00" fill="#9E9E9E"/><rect x="515.00" y="179.00" width="1.00" height="6.00" fill="#9E9E9E"/><rect x="520.00" y="169.00" width="1.00" height="16.00" fill="#9E9E9E"/><rect x="525.00" y="179.00" width="1.00" height="6.00" fill="#9E9E9E"/><rect x="530.00" y="179.00" width="1.00" height="6.00" fill="#9E9E9E"/><rect x="535.00" y="179.00" width="1.00" height="6.00" fill="#9E9E9E"/><rect x="540.00" y="179.00" width="1.00" height="6.00" fill="#9E9E9E"/><rect x="545.00" y="174.00" width="1.00" height="11.00" fill="#9E9E9E"/><rect x="550.00" y="179.00" width="1.00" height="6.00" fill="#9E9E9E"/><rect x="555.00" y="179.00" width="1.00" height="6.00" fill="#9E9E9E"/><rect x="560.00" y="179.00" width="1.00" height="6.00" fill="#9E9E9E"/><rect x="565.00" y="179.00" width="1.00" height="6.00" fill="#9E9E9E"/><rect x="570.00" y="169.00" width="1.00" height="16.00" fill="#9E9E9E"/><rect x="575.00" y="179.00" width="1.00" height="6.00" fill="#9E9E9E"/><rect x="580.00" y="179.00" width="1.00" height="6.00" fill="#9E9E9E"/><rect x="585.00" y="179.00" width="1.00" height="6.00" fill="#9E9E9E"/><rect x="590.00" y="179.00" width="1.00" height="6.00" fill="#9E9E9E"/><rect x="595.00" y="174.00" width="1.00" height="11.00" fill="#9E9E9E"/><rect x="600.00" y="179.00" width="1.00" height="6.00" fill="#9E9E9E"/><rect x="605.00" y="179.00" width="1.00" height="6.00" fill="#9E9E9E"/><rect x="610.00" y="179.00" width="1.00" height="6.00" fill="#9E9E9E"/><rect x="615.00" y="179.00" width="1.00" height="6.00" fill="#9E9E9E"/><rect x="620.00" y="169.00" width="1.00" height="16.00" fill="#9E9E9E"/><rect x="625.00" y="179.00" width="1.00" height="6.00" fill="#9E9E9E"/><rect x="630.00" y="179.00" width="1.00" height="6.00" fill="#9E9E9E"/><rect x="635.00" y="179.00" width="1.00" height="6.00" fill="#9E9E9E"/><rect x="640.00" y="179.00" width="1.00" height="6.00" fill="#9E9E9E"/><rect x="645.00" y="174.00" width="1.00" height="11.00" fill="#9E9E9E"/><rect x="650.00" y="179.00" width="1.00" height="6.00" fill="#9E9E9E"/><rect x="655.00" y="179.00" width="1.00" height="6.00" fill="#9E9E9E"/><rect x="660.00" y="179.00" width="1.00" height="6.00" fill="#9E9E9E"/><rect x="665.00" y="179.00" width="1.00" height="6.00" fill="#9E9E9E"/><rect x="670.00" y="169.00" width="1.00" height="16.00" fill="#9E9E9E"/><rect x="675.00" y="179.00" width="1.00" height="6.00" fill="#9E9E9E"/><rect x="680.00" y="179.00" width="1.00" height="6.00" fill="#9E9E9E"/><rect x="685.00" y="179.00" width="1.00" height="6.00" fill="#9E9E9E"/><rect x="690.00" y="179.00" width="1.00" height="6.00" fill="#9E9E9E"/><rect x="695.00" y="174.00" width="1.00" height="11.00" fill="#9E9E9E"/><rect x="700.00" y="179.00" width="1.00" height="6.00" fill="#9E9E9E"/><rect x="705.00" y="179.00" width="1.00" height="6.00" fill="#9E9E9E"/><rect x="710.00" y="179.00" width="1.00" height="6.00" fill="#9E9E9E"/><rect x="715.00" y="179.00" width="1.00" height="6.00" fill="#9E9E9E"/><rect x="720.00" y="169.00" width="1.00" height="16.00" fill="#9E9E9E"/><rect x="725.00" y="179.00" width="1.00" height="6.00" fill="#9E9E9E"/><rect x="730.00" y="179.00" width="1.00" height="6.00" fill="#9E9E9E"/><rect x="735.00" y="179.00" width="1.00" height="6.00" fill="#9E9E9E"/><rect x="740.00" y="179.00" width="1.00" height="6.00" fill="#9E9E9E"/><rect x="745.00" y="174.00" width="1.00" height="11.00" fill="#9E9E9E"/><rect x="750.00" y="179.00" width="1.00" height="6.00" fill="#9E9E9E"/><rect x="755.00" y="179.00" width="1.00" height="6.00" fill="#9E9E9E"/><rect x="760.00" y="179.00" width="1.00" height="6.00" fill="#9E9E9E"/><rect x="765.00" y="179.00" width="1.00" height="6.00" fill="#9E9E9E"/><rect x="770.00" y="169.00" width="1.00" height="16.00" fill="#9E9E9E"/><rect x="775.00" y="179.00" width="1.00" height="6.00" fill="#9E9E9E"/><rect x="780.00" y="179.00" width="1.00" height="6.00" fill="#9E9E9E"/><rect x="785.00" y="179.00" width="1.00" height="6.00" fill="#9E9E9E"/><rect x="790.00" y="179.00" width="1.00" height="6.00" fill="#9E9E9E"/><rect x="795.00" y="174.00" width="1.00" height="11.00" fill="#9E9E9E"/><rect x="800.00" y="179.00" width="1.00" height="6.00" fill="#9E9E9E"/><rect x="805.00" y="179.00" width="1.00" height="6.00" fill="#9E9E9E"/><rect x="810.00" y="179.00" width="1.00" height="6.00" fill="#9E9E9E"/><rect x="815.00" y="179.00" width="1.00" height="6.00" fill="#9E9E9E"/><rect x="820.00" y="169.00" width="1.00" height="16.00" fill="#9E9E9E"/><rect x="825.00" y="179.00" width="1.00" height="6.00" fill="#9E9E9E"/><rect x="830.00" y="179.00" width="1.00" height="6.00" fill="#9E9E9E"/><rect x="835.00" y="179.00" width="1.00" height="6.00" fill="#9E9E9E"/><rect x="840.00" y="179.00" width="1.00" height="6.00" fill="#9E9E9E"/><rect x="845.00" y="174.00" width="1.00" height="11.00" fill="#9E9E9E"/><rect x="850.00" y="179.00" width="1.00" height="6.00" fill="#9E9E9E"/><rect x="855.00" y="179.00" width="1.00" height="6.00" fill="#9E9E9E"/><rect x="860.00" y="179.00" width="1.00" height="6.00" fill="#9E9E9E"/><rect x="865.00" y="179.00" width="1.00" height="6.00" fill="#9E9E9E"/><rect x="870.00" y="169.00" width="1.00" height="16.00" fill="#9E9E9E"/><rect x="875.00" y="179.00" width="1.00" height="6.00" fill="#9E9E9E"/><rect x="880.00" y="179.00" width="1.00" height="6.00" fill="#9E9E9E"/><rect x="885.00" y="179.00" width="1.00" height="6.00" fill="#9E9E9E"/><rect x="890.00" y="179.00" width="1.00" height="6.00" fill="#9E9E9E"/><rect x="895.00" y="174.00" width="1.00" height="11.00" fill="#9E9E9E"/><rect x="900.00" y="179.00" width="1.00" height="6.00" fill="#9E9E9E"/><rect x="905.00" y="179.00" width="1.00" height="6.00" fill="#9E9E9E"/><rect x="910.00" y="179.00" width="1.00" height="6.00" fill="#9E9E9E"/><rect x="915.00" y="179.00" width="1.00" height="6.00" fill="#9E9E9E"/><rect x="920.00" y="169.00" width="1.00" height="16.00" fill="#9E9E9E"/><rect x="925.00" y="179.00" width="1.00" height="6.00" fill="#9E9E9E"/><rect x="930.00" y="179.00" width="1.00" height="6.00" fill="#9E9E9E"/><rect x="935.00" y="179.00" width="1.00" height="6.00" fill="#9E9E9E"/><rect x="940.00" y="179.00" width="1.00" height="6.00" fill="#9E9E9E"/><rect x="945.00" y="174.00" width="1.00" height="11.00" fill="#9E9E9E"/><rect x="950.00" y="179.00" width="1.00" height="6.00" fill="#9E9E9E"/><rect x="955.00" y="179.00" width="1.00" height="6.00" fill="#9E9E9E"/><rect x="960.00" y="179.00" width="1.00" height="6.00" fill="#9E9E9E"/><rect x="965.00" y="179.00" width="1.00" height="6.00" fill="#9E9E9E"/><rect x="970.00" y="169.00" width="1.00" height="16.00" fill="#9E9E9E"/><rect x="975.00" y="179.00" width="1.00" height="6.00" fill="#9E9E9E"/><rect x="980.00" y="179.00" width="1.00" height="6.00" fill="#9E9E9E"/><rect x="985.00" y="179.00" width="1.00" height="6.00" fill="#9E9E9E"/><rect x="990.00" y="179.00" width="1.00" height="6.00" fill="#9E9E9E"/><rect x="995.00" y="174.00" width="1.00" height="11.00" fill="#9E9E9E"/><rect x="1000.00" y="179.00" width="1.00" height="6.00" fill="#9E9E9E"/><rect x="1005.00" y="179.00" width="1.00" height="6.00" fill="#9E9E9E"/><rect x="1010.00" y="179.00" width="1.00" height="6.00" fill="#9E9E9E"/><rect x="1015.00" y="179.00" width="1.00" height="6.00" fill="#9E9E9E"/><rect x="1020.00" y="169.00" width="1.00" height="16.00" fill="#9E9E9E"/><rect x="1025.00" y="179.00" width="1.00" height="6.00" fill="#9E9E9E"/><rect x="1030.00" y="179.00" width="1.00" height="6.00" fill="#9E9E9E"/><rect x="1035.00" y="179.00" width="1.00" height="6.00" fill="#9E9E9E"/><rect x="1040.00" y="179.00" width="1.00" height="6.00" fill="#9E9E9E"/><rect x="1045.00" y="174.00" width="1.00" height="11.00" fill="#9E9E9E"/><rect x="1050.00" y="179.00" width="1.00" height="6.00" fill="#9E9E9E"/><rect x="1055.00" y="179.00" width="1.00" height="6.00" fill="#9E9E9E"/><rect x="1060.00" y="179.00" width="1.00" height="6.00" fill="#9E9E9E"/><rect x="1065.00" y="179.00" width="1.00" height="6.00" fill="#9E9E9E"/><rect x="1070.00" y="169.00" width="1.00" height="16.00" fill="#9E9E9E"/><rect x="1075.00" y="179.00" width="1.00" height="6.00" fill="#9E9E9E"/><rect x="1080.00" y="179.00" width="1.00" height="6.00" fill="#9E9E9E"/><rect x="1085.00" y="179.00" width="1.00" height="6.00" fill="#9E9E9E"/><rect x="1090.00" y="179.00" width="1.00" height="6.00" fill="#9E9E9E"/><rect x="1095.00" y="174.00" width="1.00" height="11.00" fill="#9E9E9E"/><rect x="1100.00" y="179.00" width="1.00" height="6.00" fill="#9E9E9E"/><rect x="1105.00" y="179.00" width="1.00" height="6.00" fill="#9E9E9E"/><rect x="1110.00" y="179.00" width="1.00" height="6.00" fill="#9E9E9E"/><rect x="1115.00" y="179.00" width="1.00" height="6.00" fill="#9E9E9E"/><rect x="1120.00" y="169.00" width="1.00" height="16.00" fill="#9E9E9E"/><rect x="1125.00" y="179.00" width="1.00" height="6.00" fill="#9E9E9E"/><rect x="1130.00" y="179.00" width="1.00" height="6.00" fill="#9E9E9E"/><rect x="1135.00" y="179.00" width="1.00" height="6.00" fill="#9E9E9E"/><rect x="1140.00" y="179.00" width="1.00" height="6.00" fill="#9E9E9E"/><rect x="1145.00" y="174.00" width="1.00" height="11.00" fill="#9E9E9E"/><rect x="1150.00" y="179.00" width="1.00" height="6.00" fill="#9E9E9E"/><rect x="1155.00" y="179.00" width="1.00" height="6.00" fill="#9E9E9E"/><rect x="1160.00" y="179.00" width="1.00" height="6.00" fill="#9E9E9E"/><rect x="1165.00" y="179.00" width="1.00" height="6.00" fill="#9E9E9E"/><rect x="1170.00" y="169.00" width="1.00" height="16.00" fill="#9E9E9E"/><rect x="1175.00" y="179.00" width="1.00" height="6.00" fill="#9E9E9E"/><rect x="1180.00" y="179.00" width="1.00" height="6.00" fill="#9E9E9E"/><rect x="1185.00" y="179.00" width="1.00" height="6.00" fill="#9E9E9E"/><rect x="1190.00" y="179.00" width="1.00" height="6.00" fill="#9E9E9E"/><rect x="1195.00" y="174.00" width="1.00" height="11.00" fill="#9E9E9E"/><rect x="1200.00" y="179.00" width="1.00" height="6.00" fill="#9E9E9E"/><rect x="1205.00" y="179.00" width="1.00" height="6.00" fill="#9E9E9E"/><rect x="1210.00" y="179.00" width="1.00" height="6.00" fill="#9E9E9E"/><rect x="1215.00" y="179.00" width="1.00" height="6.00" fill="#9E9E9E"/><rect x="1220.00" y="169.00" width="1.00" height="16.00" fill="#9E9E9E"/><rect x="1225.00" y="179.00" width="1.00" height="6.00" fill="#9E9E9E"/><rect x="1230.00" y="179.00" width="1.00" height="6.00" fill="#9E9E9E"/><rect x="1235.00" y="179.00" width="1.00" height="6.00" fill="#9E9E9E"/><rect x="1240.00" y="179.00" width="1.00" height="6.00" fill="#9E9E9E"/><rect x="1245.00" y="174.00" width="1.00" height="11.00" fill="#9E9E9E"/><rect x="1250.00" y="179.00" width="1.00" height="6.00" fill="#9E9E9E"/><rect x="1255.00" y="179.00" width="1.00" height="6.00" fill="#9E9E9E"/><rect x="1260.00" y="179.00" width="1.00" height="6.00" fill="#9E9E9E"/><rect x="1265.00" y="179.00" width="1.00" height="6.00" fill="#9E9E9E"/><rect x="1270.00" y="169.00" width="1.00" height="16.00" fill="#9E9E9E"/><rect x="1275.00" y="179.00" width="1.00" height="6.00" fill="#9E9E9E"/><rect x="1280.00" y="179.00" width="1.00" height="6.00" fill="#9E9E9E"/><rect x="1285.00" y="179.00" width="1.00" height="6.00" fill="#9E9E9E"/><rect x="1290.00" y="179.00" width="1.00" height="6.00" fill="#9E9E9E"/><rect x="1295.00" y="174.00" width="1.00" height="11.00" fill="#9E9E9E"/><rect x="1300.00" y="179.00" width="1.00" height="6.00" fill="#9E9E9E"/><rect x="1305.00" y="179.00" width="1.00" height="6.00" fill="#9E9E9E"/><rect x="1310.00" y="179.00" width="1.00" height="6.00" fill="#9E9E9E"/><rect x="1315.00" y="179.00" width="1.00" height="6.00" fill="#9E9E9E"/><rect x="1320.00" y="169.00" width="1.00" height="16.00" fill="#9E9E9E"/><rect x="1325.00" y="179.00" width="1.00" height="6.00" fill="#9E9E9E"/><rect x="1330.00" y="179.00" width="1.00" height="6.00" fill="#9E9E9E"/><rect x="1335.00" y="179.00" width="1.00" height="6.00" fill="#9E9E9E"/><rect x="1340.00" y="179.00" width="1.00" height="6.00" fill="#9E9E9E"/><rect x="1345.00" y="174.00" width="1.00" height="11.00" fill="#9E9E9E"/><rect x="1350.00" y="179.00" width="1.00" height="6.00" fill="#9E9E9E"/><rect x="1355.00" y="179.00" width="1.00" height="6.00" fill="#9E9E9E"/><rect x="1360.00" y="179.00" width="1.00" height="6.00" fill="#9E9E9E"/><rect x="1365.00" y="179.00" width="1.00" height="6.00" fill="#9E9E9E"/><rect x="1370.00" y="169.00" width="1.00" height="16.00" fill="#9E9E9E"/><rect x="1375.00" y="179.00" width="1.00" height="6.00" fill="#9E9E9E"/><rect x="1380.00" y="179.00" width="1.00" height="6.00" fill="#9E9E9E"/><rect x="1385.00" y="179.00" width="1.00" height="6.00" fill="#9E9E9E"/><rect x="1390.00" y="179.00" width="1.00" height="6.00" fill="#9E9E9E"/><rect x="1395.00" y="174.00" width="1.00" height="11.00" fill="#9E9E9E"/><rect x="1400.00" y="179.00" width="1.00" height="6.00" fill="#9E9E9E"/><rect x="1405.00" y="179.00" width="1.00" height="6.00" fill="#9E9E9E"/><rect x="1410.00" y="179.00" width="1.00" height="6.00" fill="#9E9E9E"/><rect x="1415.00" y="179.00" width="1.00" height="6.00" fill="#9E9E9E"/><rect x="1420.00" y="169.00" width="1.00" height="16.00" fill="#9E9E9E"/><rect x="1425.00" y="179.00" width="1.00" height="6.00" fill="#9E9E9E"/><rect x="1430.00" y="179.00" width="1.00" height="6.00" fill="#9E9E9E"/><rect x="1435.00" y="179.00" width="1.00" height="6.00" fill="#9E9E9E"/><rect x="1440.00" y="179.00" width="1.00" height="6.00" fill="#9E9E9E"/><rect x="1445.00" y="174.00" width="1.00" height="11.00" fill="#9E9E9E"/><rect x="1450.00" y="179.00" width="1.00" height="6.00" fill="#9E9E9E"/><rect x="1455.00" y="179.00" width="1.00" height="6.00" fill="#9E9E9E"/><rect x="1460.00" y="179.00" width="1.00" height="6.00" fill="#9E9E9E"/><rect x="1465.00" y="179.00" width="1.00" height="6.00" fill="#9E9E9E"/><rect x="1470.00" y="169.00" width="1.00" height="16.00" fill="#9E9E9E"/><rect x="1475.00" y="179.00" width="1.00" height="6.00" fill="#9E9E9E"/><rect x="1480.00" y="179.00" width="1.00" height="6.00" fill="#9E9E9E"/><rect x="1485.00" y="179.00" width="1.00" height="6.00" fill="#9E9E9E"/><rect x="1490.00" y="179.00" width="1.00" height="6.00" fill="#9E9E9E"/><rect x="1495.00" y="174.00" width="1.00" height="11.00" fill="#9E9E9E"/><rect x="1500.00" y="179.00" width="1.00" height="6.00" fill="#9E9E9E"/><rect x="1505.00" y="179.00" width="1.00" height="6.00" fill="#9E9E9E"/><rect x="1510.00" y="179.00" width="1.00" height="6.00" fill="#9E9E9E"/><rect x="1515.00" y="179.00" width="1.00" height="6.00" fill="#9E9E9E"/><rect x="1520.00" y="169.00" width="1.00" height="16.00" fill="#9E9E9E"/><rect x="1525.00" y="179.00" width="1.00" height="6.00" fill="#9E9E9E"/><rect x="1530.00" y="179.00" width="1.00" height="6.00" fill="#9E9E9E"/><rect x="1535.00" y="179.00" width="1.00" height="6.00" fill="#9E9E9E"/><rect x="1540.00" y="179.00" width="1.00" height="6.00" fill="#9E9E9E"/><rect x="1545.00" y="174.00" width="1.00" height="11.00" fill="#9E9E9E"/><rect x="1550.00" y="179.00" width="1.00" height="6.00" fill="#9E9E9E"/><rect x="1555.00" y="179.00" width="1.00" height="6.00" fill="#9E9E9E"/><rect x="1560.00" y="179.00" width="1.00" height="6.00" fill="#9E9E9E"/><rect x="1565.00" y="179.00" width="1.00" height="6.00" fill="#9E9E9E"/><rect x="1570.00" y="169.00" width="1.00" height="16.00" fill="#9E9E9E"/><rect x="1575.00" y="179.00" width="1.00" height="6.00" fill="#9E9E9E"/><rect x="1580.00" y="179.00" width="1.00" height="6.00" fill="#9E9E9E"/><rect x="1585.00" y="179.00" width="1.00" height="6.00" fill="#9E9E9E"/><rect x="1590.00" y="179.00" width="1.00" height="6.00" fill="#9E9E9E"/><rect x="1595.00" y="174.00" width="1.00" height="11.00" fill="#9E9E9E"/><rect x="1600.00" y="179.00" width="1.00" height="6.00" fill="#9E9E9E"/><rect x="1605.00" y="179.00" width="1.00" height="6.00" fill="#9E9E9E"/><rect x="1610.00" y="179.00" width="1.00" height="6.00" fill="#9E9E9E"/><rect x="1615.00" y="179.00" width="1.00" height="6.00" fill="#9E9E9E"/><rect x="1620.00" y="169.00" width="1.00" height="16.00" fill="#9E9E9E"/><rect x="1625.00" y="179.00" width="1.00" height="6.00" fill="#9E9E9E"/><rect x="1630.00" y="179.00" width="1.00" height="6.00" fill="#9E9E9E"/><rect x="1635.00" y="179.00" width="1.00" height="6.00" fill="#9E9E9E"/><rect x="1640.00" y="179.00" width="1.00" height="6.00" fill="#9E9E9E"/><rect x="1645.00" y="174.00" width="1.00" height="11.00" fill="#9E9E9E"/><rect x="1650.00" y="179.00" width="1.00" height="6.00" fill="#9E9E9E"/><rect x="1655.00" y="179.00" width="1.00" height="6.00" fill="#9E9E9E"/><rect x="1660.00" y="179.00" width="1.00" height="6.00" fill="#9E9E9E"/><rect x="1665.00" y="179.00" width="1.00" height="6.00" fill="#9E9E9E"/><rect x="1670.00" y="169.00" width="1.00" height="16.00" fill="#9E9E9E"/><rect x="1675.00" y="179.00" width="1.00" height="6.00" fill="#9E9E9E"/><rect x="1680.00" y="179.00" width="1.00" height="6.00" fill="#9E9E9E"/><rect x="1685.00" y="179.00" width="1.00" height="6.00" fill="#9E9E9E"/><rect x="1690.00" y="179.00" width="1.00" height="6.00" fill="#9E9E9E"/><rect x="1695.00" y="174.00" width="1.00" height="11.00" fill="#9E9E9E"/><rect x="1700.00" y="179.00" width="1.00" height="6.00" fill="#9E9E9E"/><rect x="1705.00" y="179.00" width="1.00" height="6.00" fill="#9E9E9E"/><rect x="1710.00" y="179.00" width="1.00" height="6.00" fill="#9E9E9E"/><rect x="1715.00" y="179.00" width="1.00" height="6.00" fill="#9E9E9E"/><rect x="1720.00" y="169.00" width="1.00" height="16.00" fill="#9E9E9E"/><rect x="1725.00" y="179.00" width="1.00" height="6.00" fill="#9E9E9E"/><rect x="1730.00" y="179.00" width="1.00" height="6.00" fill="#9E9E9E"/><rect x="1735.00" y="179.00" width="1.00" height="6.00" fill="#9E9E9E"/><rect x="1740.00" y="179.00" width="1.00" height="6.00" fill="#9E9E9E"/><rect x="1745.00" y="174.00" width="1.00" height="11.00" fill="#9E9E9E"/><rect x="1750.00" y="179.00" width="1.00" height="6.00" fill="#9E9E9E"/><rect x="1755.00" y="179.00" width="1.00" height="6.00" fill="#9E9E9E"/><rect x="1760.00" y="179.00" width="1.00" height="6.00" fill="#9E9E9E"/><rect x="1765.00" y="179.00" width="1.00" height="6.00" fill="#9E9E9E"/><rect x="1770.00" y="169.00" width="1.00" height="16.00" fill="#9E9E9E"/><rect x="1775.00" y="179.00" width="1.00" height="6.00" fill="#9E9E9E"/><rect x="1780.00" y="179.00" width="1.00" height="6.00" fill="#9E9E9E"/><rect x="1785.00" y="179.00" width="1.00" height="6.00" fill="#9E9E9E"/><rect x="1790.00" y="179.00" width="1.00" height="6.00" fill="#9E9E9E"/><rect x="1795.00" y="174.00" width="1.00" height="11.00" fill="#9E9E9E"/><rect x="1800.00" y="179.00" width="1.00" height="6.00" fill="#9E9E9E"/><rect x="1805.00" y="179.00" width="1.00" height="6.00" fill="#9E9E9E"/><rect x="1810.00" y="179.00" width="1.00" height="6.00" fill="#9E9E9E"/><rect x="1815.00" y="179.00" width="1.00" height="6.00" fill="#9E9E9E"/><rect x="1820.00" y="169.00" width="1.00" height="16.00" fill="#9E9E9E"/><rect x="1825.00" y="179.00" width="1.00" height="6.00" fill="#9E9E9E"/><rect x="1830.00" y="179.00" width="1.00" height="6.00" fill="#9E9E9E"/><rect x="1835.00" y="179.00" width="1.00" height="6.00" fill="#9E9E9E"/><rect x="1840.00" y="179.00" width="1.00" height="6.00" fill="#9E9E9E"/><rect x="1845.00" y="174.00" width="1.00" height="11.00" fill="#9E9E9E"/><rect x="1850.00" y="179.00" width="1.00" height="6.00" fill="#9E9E9E"/><rect x="1855.00" y="179.00" width="1.00" height="6.00" fill="#9E9E9E"/><rect x="1860.00" y="179.00" width="1.00" height="6.00" fill="#9E9E9E"/><rect x="1865.00" y="179.00" width="1.00" height="6.00" fill="#9E9E9E"/><rect x="1870.00" y="169.00" width="1.00" height="16.00" fill="#9E9E9E"/><rect x="1875.00" y="179.00" width="1.00" height="6.00" fill="#9E9E9E"/><rect x="1880.00" y="179.00" width="1.00" height="6.00" fill="#9E9E9E"/><rect x="1885.00" y="179.00" width="1.00" height="6.00" fill="#9E9E9E"/><rect x="1890.00" y="179.00" width="1.00" height="6.00" fill="#9E9E9E"/><rect x="1895.00" y="174.00" width="1.00" height="11.00" fill="#9E9E9E"/><rect x="67.00" y="190.00" width="6.00" height="1.00" fill="#9E9E9E"/><rect x="67.00" y="195.00" width="6.00" height="1.00" fill="#9E9E9E"/><rect x="57.00" y="200.00" width="16.00" height="1.00" fill="#9E9E9E"/><rect x="67.00" y="205.00" width="6.00" height="1.00" fill="#9E9E9E"/><rect x="67.00" y="210.00" width="6.00" height="1.00" fill="#9E9E9E"/><rect x="67.00" y="215.00" width="6.00" height="1.00" fill="#9E9E9E"/><rect x="67.00" y="220.00" width="6.00" height="1.00" fill="#9E9E9E"/><rect x="62.00" y="225.00" width="11.00" height="1.00" fill="#9E9E9E"/><rect x="67.00" y="230.00" width="6.00" height="1.00" fill="#9E9E9E"/><rect x="67.00" y="235.00" width="6.00" height="1.00" fill="#9E9E9E"/><rect x="67.00" y="240.00" width="6.00" height="1.00" fill="#9E9E9E"/><rect x="67.00" y="245.00" width="6.00" height="1.00" fill="#9E9E9E"/><rect x="57.00" y="250.00" width="16.00" height="1.00" fill="#9E9E9E"/><rect x="67.00" y="255.00" width="6.00" height="1.00" fill="#9E9E9E"/><rect x="67.00" y="260.00" width="6.00" height="1.00" fill="#9E9E9E"/><rect x="67.00" y="265.00" width="6.00" height="1.00" fill="#9E9E9E"/><rect x="67.00" y="270.00" width="6.00" height="1.00" fill="#9E9E9E"/><rect x="62.00" y="275.00" width="11.00" height="1.00" fill="#9E9E9E"/><rect x="67.00" y="280.00" width="6.00" height="1.00" fill="#9E9E9E"/><rect x="67.00" y="285.00" width="6.00" height="1.00" fill="#9E9E9E"/><rect x="67.00" y="290.00" width="6.00" height="1.00" fill="#9E9E9E"/><rect x="67.00" y="295.00" width="6.00" height="1.00" fill="#9E9E9E"/><rect x="57.00" y="300.00" width="16.00" height="1.00" fill="#9E9E9E"/><rect x="67.00" y="305.00" width="6.00" height="1.00" fill="#9E9E9E"/><rect x="67.00" y="310.00" width="6.00" height="1.00" fill="#9E9E9E"/><rect x="67.00" y="315.00" width="6.00" height="1.00" fill="#9E9E9E"/><rect x="67.00" y="320.00" width="6.00" height="1.00" fill="#9E9E9E"/><rect x="62.00" y="325.00" width="11.00" height="1.00" fill="#9E9E9E"/><rect x="67.00" y="330.00" width="6.00" height="1.00" fill="#9E9E9E"/><rect x="67.00" y="335.00" width="6.00" height="1.00" fill="#9E9E9E"/><rect x="67.00" y="340.00" width="6.00" height="1.00" fill="#9E9E9E"/><rect x="67.00" y="345.00" width="6.00" height="1.00" fill="#9E9E9E"/><rect x="57.00" y="350.00" width="16.00" height="1.00" fill="#9E9E9E"/><rect x="67.00" y="355.00" width="6.00" height="1.00" fill="#9E9E9E"/><rect x="67.00" y="360.00" width="6.00" height="1.00" fill="#9E9E9E"/><rect x="67.00" y="365.00" width="6.00" height="1.00" fill="#9E9E9E"/><rect x="67.00" y="370.00" width="6.00" height="1.00" fill="#9E9E9E"/><rect x="62.00" y="375.00" width="11.00" height="1.00" fill="#9E9E9E"/><rect x="67.00" y="380.00" width="6.00" height="1.00" fill="#9E9E9E"/><rect x="67.00" y="385.00" width="6.00" height="1.00" fill="#9E9E9E"/><rect x="67.00" y="390.00" width="6.00" height="1.00" fill="#9E9E9E"/><rect x="67.00" y="395.00" width="6.00" height="1.00" fill="#9E9E9E"/><rect x="57.00" y="400.00" width="16.00" height="1.00" fill="#9E9E9E"/><rect x="67.00" y="405.00" width="6.00" height="1.00" fill="#9E9E9E"/><rect x="67.00" y="410.00" width="6.00" height="1.00" fill="#9E9E9E"/><rect x="67.00" y="415.00" width="6.00" height="1.00" fill="#9E9E9E"/><rect x="67.00" y="420.00" width="6.00" height="1.00" fill="#9E9E9E"/><rect x="62.00" y="425.00" width="11.00" height="1.00" fill="#9E9E9E"/><rect x="67.00" y="430.00" width="6.00" height="1.00" fill="#9E9E9E"/><rect x="67.00" y="435.00" width="6.00" height="1.00" fill="#9E9E9E"/><rect x="67.00" y="440.00" width="6.00" height="1.00" fill="#9E9E9E"/><rect x="67.00" y="445.00" width="6.00" height="1.00" fill="#9E9E9E"/><rect x="57.00" y="450.00" width="16.00" height="1.00" fill="#9E9E9E"/><rect x="67.00" y="455.00" width="6.00" height="1.00" fill="#9E9E9E"/><rect x="67.00" y="460.00" width="6.00" height="1.00" fill="#9E9E9E"/><rect x="67.00" y="465.00" width="6.00" height="1.00" fill="#9E9E9E"/><rect x="67.00" y="470.00" width="6.00" height="1.00" fill="#9E9E9E"/><rect x="62.00" y="475.00" width="11.00" height="1.00" fill="#9E9E9E"/><rect x="67.00" y="480.00" width="6.00" height="1.00" fill="#9E9E9E"/><rect x="67.00" y="485.00" width="6.00" height="1.00" fill="#9E9E9E"/><rect x="67.00" y="490.00" width="6.00" height="1.00" fill="#9E9E9E"/><rect x="67.00" y="495.00" width="6.00" height="1.00" fill="#9E9E9E"/><rect x="57.00" y="500.00" width="16.00" height="1.00" fill="#9E9E9E"/><rect x="67.00" y="505.00" width="6.00" height="1.00" fill="#9E9E9E"/><rect x="67.00" y="510.00" width="6.00" height="1.00" fill="#9E9E9E"/><rect x="67.00" y="515.00" width="6.00" height="1.00" fill="#9E9E9E"/><rect x="67.00" y="520.00" width="6.00" height="1.00" fill="#9E9E9E"/><rect x="62.00" y="525.00" width="11.00" height="1.00" fill="#9E9E9E"/><rect x="67.00" y="530.00" width="6.00" height="1.00" fill="#9E9E9E"/><rect x="67.00" y="535.00" width="6.00" height="1.00" fill="#9E9E9E"/><rect x="67.00" y="540.00" width="6.00" height="1.00" fill="#9E9E9E"/><rect x="67.00" y="545.00" width="6.00" height="1.00" fill="#9E9E9E"/><rect x="57.00" y="550.00" width="16.00" height="1.00" fill="#9E9E9E"/><rect x="67.00" y="555.00" width="6.00" height="1.00" fill="#9E9E9E"/><rect x="67.00" y="560.00" width="6.00" height="1.00" fill="#9E9E9E"/><rect x="67.00" y="565.00" width="6.00" height="1.00" fill="#9E9E9E"/><rect x="67.00" y="570.00" width="6.00" height="1.00" fill="#9E9E9E"/><rect x="62.00" y="575.00" width="11.00" height="1.00" fill="#9E9E9E"/><rect x="67.00" y="580.00" width="6.00" height="1.00" fill="#9E9E9E"/><rect x="67.00" y="585.00" width="6.00" height="1.00" fill="#9E9E9E"/><rect x="67.00" y="590.00" width="6.00" height="1.00" fill="#9E9E9E"/><rect x="67.00" y="595.00" width="6.00" height="1.00" fill="#9E9E9E"/><rect x="57.00" y="600.00" width="16.00" height="1.00" fill="#9E9E9E"/><rect x="67.00" y="605.00" width="6.00" height="1.00" fill="#9E9E9E"/><rect x="67.00" y="610.00" width="6.00" height="1.00" fill="#9E9E9E"/><rect x="67.00" y="615.00" width="6.00" height="1.00" fill="#9E9E9E"/><rect x="67.00" y="620.00" width="6.00" height="1.00" fill="#9E9E9E"/><rect x="62.00" y="625.00" width="11.00" height="1.00" fill="#9E9E9E"/><rect x="67.00" y="630.00" width="6.00" height="1.00" fill="#9E9E9E"/><rect x="67.00" y="635.00" width="6.00" height="1.00" fill="#9E9E9E"/><rect x="67.00" y="640.00" width="6.00" height="1.00" fill="#9E9E9E"/><rect x="67.00" y="645.00" width="6.00" height="1.00" fill="#9E9E9E"/><rect x="57.00" y="650.00" width="16.00" height="1.00" fill="#9E9E9E"/><rect x="67.00" y="655.00" width="6.00" height="1.00" fill="#9E9E9E"/><rect x="67.00" y="660.00" width="6.00" height="1.00" fill="#9E9E9E"/><rect x="67.00" y="665.00" width="6.00" height="1.00" fill="#9E9E9E"/><rect x="67.00" y="670.00" width="6.00" height="1.00" fill="#9E9E9E"/><rect x="62.00" y="675.00" width="11.00" height="1.00" fill="#9E9E9E"/><rect x="67.00" y="680.00" width="6.00" height="1.00" fill="#9E9E9E"/><rect x="67.00" y="685.00" width="6.00" height="1.00" fill="#9E9E9E"/><rect x="67.00" y="690.00" width="6.00" height="1.00" fill="#9E9E9E"/><rect x="67.00" y="695.00" width="6.00" height="1.00" fill="#9E9E9E"/><rect x="57.00" y="700.00" width="16.00" height="1.00" fill="#9E9E9E"/><rect x="67.00" y="705.00" width="6.00" height="1.00" fill="#9E9E9E"/><rect x="67.00" y="710.00" width="6.00" height="1.00" fill="#9E9E9E"/><rect x="67.00" y="715.00" width="6.00" height="1.00" fill="#9E9E9E"/><rect x="67.00" y="720.00" width="6.00" height="1.00" fill="#9E9E9E"/><rect x="62.00" y="725.00" width="11.00" height="1.00" fill="#9E9E9E"/><rect x="67.00" y="730.00" width="6.00" height="1.00" fill="#9E9E9E"/><rect x="67.00" y="735.00" width="6.00" height="1.00" fill="#9E9E9E"/><rect x="67.00" y="740.00" width="6.00" height="1.00" fill="#9E9E9E"/><rect x="67.00" y="745.00" width="6.00" height="1.00" fill="#9E9E9E"/><rect x="57.00" y="750.00" width="16.00" height="1.00" fill="#9E9E9E"/><rect x="67.00" y="755.00" width="6.00" height="1.00" fill="#9E9E9E"/><rect x="67.00" y="760.00" width="6.00" height="1.00" fill="#9E9E9E"/><rect x="67.00" y="765.00" width="6.00" height="1.00" fill="#9E9E9E"/><rect x="67.00" y="770.00" width="6.00" height="1.00" fill="#9E9E9E"/><rect x="62.00" y="775.00" width="11.00" height="1.00" fill="#9E9E9E"/><rect x="67.00" y="780.00" width="6.00" height="1.00" fill="#9E9E9E"/><rect x="67.00" y="785.00" width="6.00" height="1.00" fill="#9E9E9E"/><rect x="67.00" y="790.00" width="6.00" height="1.00" fill="#9E9E9E"/><rect x="67.00" y="795.00" width="6.00" height="1.00" fill="#9E9E9E"/><rect x="57.00" y="800.00" width="16.00" height="1.00" fill="#9E9E9E"/><rect x="67.00" y="805.00" width="6.00" height="1.00" fill="#9E9E9E"/><rect x="67.00" y="810.00" width="6.00" height="1.00" fill="#9E9E9E"/><rect x="67.00" y="815.00" width="6.00" height="1.00" fill="#9E9E9E"/><rect x="67.00" y="820.00" width="6.00" height="1.00" fill="#9E9E9E"/><rect x="62.00" y="825.00" width="11.00" height="1.00" fill="#9E9E9E"/><rect x="67.00" y="830.00" width="6.00" height="1.00" fill="#9E9E9E"/><rect x="67.00" y="835.00" width="6.00" height="1.00" fill="#9E9E9E"/><rect x="67.00" y="840.00" width="6.00" height="1.00" fill="#9E9E9E"/><rect x="67.00" y="845.00" width="6.00" height="1.00" fill="#9E9E9E"/><rect x="57.00" y="850.00" width="16.00" height="1.00" fill="#9E9E9E"/><rect x="67.00" y="855.00" width="6.00" height="1.00" fill="#9E9E9E"/><rect x="67.00" y="860.00" width="6.00" height="1.00" fill="#9E9E9E"/><rect x="67.00" y="865.00" width="6.00" height="1.00" fill="#9E9E9E"/><rect x="67.00" y="870.00" width="6.00" height="1.00" fill="#9E9E9E"/><rect x="62.00" y="875.00" width="11.00" height="1.00" fill="#9E9E9E"/><rect x="67.00" y="880.00" width="6.00" height="1.00" fill="#9E9E9E"/><rect x="67.00" y="885.00" width="6.00" height="1.00" fill="#9E9E9E"/><rect x="67.00" y="890.00" width="6.00" height="1.00" fill="#9E9E9E"/><rect x="67.00" y="895.00" width="6.00" height="1.00" fill="#9E9E9E"/><rect x="57.00" y="900.00" width="16.00" height="1.00" fill="#9E9E9E"/><rect x="67.00" y="905.00" width="6.00" height="1.00" fill="#9E9E9E"/><rect x="67.00" y="910.00" width="6.00" height="1.00" fill="#9E9E9E"/><rect x="67.00" y="915.00" width="6.00" height="1.00" fill="#9E9E9E"/><rect x="67.00" y="920.00" width="6.00" height="1.00" fill="#9E9E9E"/><rect x="62.00" y="925.00" width="11.00" height="1.00" fill="#9E9E9E"/><rect x="67.00" y="930.00" width="6.00" height="1.00" fill="#9E9E9E"/><rect x="67.00" y="935.00" width="6.00" height="1.00" fill="#9E9E9E"/><rect x="67.00" y="940.00" width="6.00" height="1.00" fill="#9E9E9E"/><rect x="67.00" y="945.00" width="6.00" height="1.00" fill="#9E9E9E"/><rect x="57.00" y="950.00" width="16.00" height="1.00" fill="#9E9E9E"/><rect x="67.00" y="955.00" width="6.00" height="1.00" fill="#9E9E9E"/><rect x="67.00" y="960.00" width="6.00" height="1.00" fill="#9E9E9E"/><rect x="67.00" y="965.00" width="6.00" height="1.00" fill="#9E9E9E"/><rect x="67.00" y="970.00" width="6.00" height="1.00" fill="#9E9E9E"/></g>
<rect x="58.00" y="177.00" width="14.00" height="1.00" fill="#CFCFCF"/>
<rect x="65.00" y="170.00" width="1.00" height="14.00" fill="#CFCFCF"/>
<g clip-path="url(#rclip)"><text x="71.9" y="179.0" font-size="9.5" fill="#3C3C3C">760</text></g>
<text x="122.4" y="179.0" font-size="9.5" fill="#3C3C3C">780</text>
<text x="172.4" y="179.0" font-size="9.5" fill="#3C3C3C">800</text>
<text x="222.4" y="179.0" font-size="9.5" fill="#3C3C3C">820</text>
<text x="272.4" y="179.0" font-size="9.5" fill="#3C3C3C">840</text>
<text x="322.4" y="179.0" font-size="9.5" fill="#3C3C3C">860</text>
<text x="372.4" y="179.0" font-size="9.5" fill="#3C3C3C">880</text>
<text x="422.4" y="179.0" font-size="9.5" fill="#3C3C3C">900</text>
<text x="472.4" y="179.0" font-size="9.5" fill="#3C3C3C">920</text>
<text x="522.4" y="179.0" font-size="9.5" fill="#3C3C3C">940</text>
<text x="572.4" y="179.0" font-size="9.5" fill="#3C3C3C">960</text>
<text x="622.4" y="179.0" font-size="9.5" fill="#3C3C3C">980</text>
<text x="672.4" y="179.0" font-size="9.5" fill="#3C3C3C">1000</text>
<text x="722.4" y="179.0" font-size="9.5" fill="#3C3C3C">1020</text>
<text x="772.4" y="179.0" font-size="9.5" fill="#3C3C3C">1040</text>
<text x="822.4" y="179.0" font-size="9.5" fill="#3C3C3C">1060</text>
<text x="872.4" y="179.0" font-size="9.5" fill="#3C3C3C">1080</text>
<text x="922.4" y="179.0" font-size="9.5" fill="#3C3C3C">1100</text>
<text x="972.4" y="179.0" font-size="9.5" fill="#3C3C3C">1120</text>
<text x="1022.4" y="179.0" font-size="9.5" fill="#3C3C3C">1140</text>
<text x="1072.4" y="179.0" font-size="9.5" fill="#3C3C3C">1160</text>
<text x="1122.4" y="179.0" font-size="9.5" fill="#3C3C3C">1180</text>
<text x="1172.4" y="179.0" font-size="9.5" fill="#3C3C3C">1200</text>
<text x="1222.4" y="179.0" font-size="9.5" fill="#3C3C3C">1220</text>
<text x="1272.4" y="179.0" font-size="9.5" fill="#3C3C3C">1240</text>
<text x="1322.4" y="179.0" font-size="9.5" fill="#3C3C3C">1260</text>
<text x="1372.4" y="179.0" font-size="9.5" fill="#3C3C3C">1280</text>
<text x="1422.4" y="179.0" font-size="9.5" fill="#3C3C3C">1300</text>
<text x="1472.4" y="179.0" font-size="9.5" fill="#3C3C3C">1320</text>
<text x="1522.4" y="179.0" font-size="9.5" fill="#3C3C3C">1340</text>
<text x="1572.4" y="179.0" font-size="9.5" fill="#3C3C3C">1360</text>
<text x="1622.4" y="179.0" font-size="9.5" fill="#3C3C3C">1380</text>
<text x="1672.4" y="179.0" font-size="9.5" fill="#3C3C3C">1400</text>
<text x="1722.4" y="179.0" font-size="9.5" fill="#3C3C3C">1420</text>
<text x="1772.4" y="179.0" font-size="9.5" fill="#3C3C3C">1440</text>
<text x="1822.4" y="179.0" font-size="9.5" fill="#3C3C3C">1460</text>
<text x="1872.4" y="179.0" font-size="9.5" fill="#3C3C3C">1480</text>
<text transform="translate(65.2,201.9) rotate(-90)" text-anchor="end" font-size="9" fill="#3C3C3C">180</text>
<text transform="translate(65.2,251.9) rotate(-90)" text-anchor="end" font-size="9" fill="#3C3C3C">160</text>
<text transform="translate(65.2,301.9) rotate(-90)" text-anchor="end" font-size="9" fill="#3C3C3C">140</text>
<text transform="translate(65.2,351.9) rotate(-90)" text-anchor="end" font-size="9" fill="#3C3C3C">120</text>
<text transform="translate(65.2,401.9) rotate(-90)" text-anchor="end" font-size="9" fill="#3C3C3C">100</text>
<text transform="translate(65.2,451.9) rotate(-90)" text-anchor="end" font-size="9" fill="#3C3C3C">80</text>
<text transform="translate(65.2,501.9) rotate(-90)" text-anchor="end" font-size="9" fill="#3C3C3C">60</text>
<text transform="translate(65.2,551.9) rotate(-90)" text-anchor="end" font-size="9" fill="#3C3C3C">40</text>
<text transform="translate(65.2,601.9) rotate(-90)" text-anchor="end" font-size="9" fill="#3C3C3C">20</text>
<text transform="translate(65.2,651.9) rotate(-90)" text-anchor="end" font-size="9" fill="#3C3C3C">0</text>
<text transform="translate(65.2,701.9) rotate(-90)" text-anchor="end" font-size="9" fill="#3C3C3C">-20</text>
<text transform="translate(65.2,751.9) rotate(-90)" text-anchor="end" font-size="9" fill="#3C3C3C">-40</text>
<text transform="translate(65.2,801.9) rotate(-90)" text-anchor="end" font-size="9" fill="#3C3C3C">-60</text>
<text transform="translate(65.2,851.9) rotate(-90)" text-anchor="end" font-size="9" fill="#3C3C3C">-80</text>
<text transform="translate(65.2,901.9) rotate(-90)" text-anchor="end" font-size="9" fill="#3C3C3C">-100</text>
<text transform="translate(65.2,951.9) rotate(-90)" text-anchor="end" font-size="9" fill="#3C3C3C">-120</text>
<rect x="1898.00" y="152.00" width="23.00" height="840.00" fill="#EBEBEB"/>
<rect x="1899.00" y="186.00" width="15.00" height="770.00" fill="#E1E1E1"/>
<rect x="1899.50" y="171.50" width="14.00" height="14.00" fill="#fff" stroke="#ABABAB" stroke-width="1"/>
<path d="M1903,180.3 h7.2 l-3.6,-4 z" fill="#606060"/>
<rect x="1899.50" y="956.50" width="14.00" height="14.00" fill="#fff" stroke="#ABABAB" stroke-width="1"/>
<path d="M1903,962 h7.2 l-3.6,4 z" fill="#606060"/>
<rect x="1899.50" y="483.50" width="14.00" height="103.50" fill="#fff" stroke="#ABABAB" stroke-width="1"/>
<rect x="0.00" y="973.00" width="1921.00" height="55.00" fill="#EBEBEB"/>
<rect x="74.00" y="974.00" width="1807.00" height="15.00" fill="#E1E1E1"/>
<rect x="59.50" y="974.50" width="14.00" height="14.00" fill="#fff" stroke="#ABABAB" stroke-width="1"/>
<path d="M69,978 v7.2 l-4.2,-3.6 z" fill="#606060"/>
<rect x="1881.50" y="974.50" width="14.00" height="14.00" fill="#fff" stroke="#ABABAB" stroke-width="1"/>
<path d="M1887,978 v7.2 l4.2,-3.6 z" fill="#606060"/>
<rect x="849.50" y="974.50" width="178.00" height="14.00" fill="#fff" stroke="#ABABAB" stroke-width="1"/>
<path d="M35.5,182.5 l3.5,3.2 l-3.5,3.2" fill="none" stroke="#555" stroke-width="1.5"/>
<rect x="12.00" y="210.20" width="12.10" height="2.00" fill="#6A6A6A"/>
<rect x="12.00" y="210.20" width="2.00" height="13.40" fill="#6A6A6A"/>
<rect x="17.30" y="210.20" width="1.90" height="6.60" fill="#6A6A6A"/>
<rect x="22.20" y="210.20" width="1.90" height="6.60" fill="#6A6A6A"/>
<rect x="12.00" y="215.10" width="11.50" height="1.90" fill="#6A6A6A"/>
<path d="M16,226 v-8 q0,-1 1,-1 h3 l1.2,1.2 h5.6 q1,0 1,1 v6.8 z" fill="#EBC48A"/>
<path d="M16,226 l2,-5.6 h10.4 l-1.8,5.6 z" fill="#F7DDB2"/>
<path d="M32,214.2 v8.8 l4.9,-4.4 z" fill="#777"/>
<rect x="6.00" y="230.00" width="40.00" height="1.00" fill="#DCDCDC"/>
<rect x="13.00" y="273.90" width="28.80" height="1.30" fill="#000"/><rect x="23.80" y="271.80" width="17.70" height="2.10" fill="#FFF200"/><path d="M27.5,273.9 v-1.2 h1.6 v1.2 z" fill="#000"/><path d="M33,273.9 v-1.2 h1.6 v1.2 z" fill="#000"/><path d="M38.5,273.9 v-1.2 h1.6 v1.2 z" fill="#000"/><rect x="40.80" y="271.80" width="1.20" height="4.00" fill="#000"/><path d="M11.1,275.2 v-7.2 a6.35,6.35 0 0 1 12.7,0 v7.2 z" fill="#C0C0C0" stroke="#000" stroke-width="1"/><ellipse cx="17.5" cy="268.9" rx="3.7" ry="3.5" fill="#4A4A4A"/><path d="M14.5,267.5 h6 M14.5,269.5 h6 M14.5,271.2 h6 M16,265.6 v6.6 M17.8,265.6 v6.6 M19.6,265.6 v6.6" fill="none" stroke="#BDBDBD" stroke-width="0.5"/><rect x="9.90" y="273.90" width="3.10" height="2.90" fill="#FF0000"/>
<path d="M11.1,306.7 L41.5,316.3 V319.8 L11.1,310.4 z" fill="#C0C0C0" stroke="#8C8C8C" stroke-width="0.8"/>
<rect x="40.90" y="305.00" width="1.20" height="10.00" fill="#000"/>
<rect x="13.00" y="303.90" width="28.80" height="1.30" fill="#000"/><rect x="23.80" y="301.80" width="17.70" height="2.10" fill="#FFF200"/><path d="M27.5,303.9 v-1.2 h1.6 v1.2 z" fill="#000"/><path d="M33,303.9 v-1.2 h1.6 v1.2 z" fill="#000"/><path d="M38.5,303.9 v-1.2 h1.6 v1.2 z" fill="#000"/><rect x="40.80" y="301.80" width="1.20" height="4.00" fill="#000"/><path d="M11.1,305.2 v-7.2 a6.35,6.35 0 0 1 12.7,0 v7.2 z" fill="#C0C0C0" stroke="#000" stroke-width="1"/><ellipse cx="17.5" cy="298.9" rx="3.7" ry="3.5" fill="#4A4A4A"/><path d="M14.5,297.5 h6 M14.5,299.5 h6 M14.5,301.2 h6 M16,295.6 v6.6 M17.8,295.6 v6.6 M19.6,295.6 v6.6" fill="none" stroke="#BDBDBD" stroke-width="0.5"/><rect x="9.90" y="303.90" width="3.10" height="2.90" fill="#FF0000"/>
<rect x="39.00" y="314.10" width="3.10" height="2.90" fill="#00FF00"/>
<text x="72.5" y="1012.9" font-size="12" fill="#3955A3" font-weight="bold" textLength="35.7" lengthAdjust="spacingAndGlyphs">Page 1</text>
<rect x="124.00" y="1001.00" width="1.00" height="16.00" fill="#DADADA"/>
<text x="139.5" y="1012.9" font-size="12" fill="#444" textLength="35.4" lengthAdjust="spacing">Toutes</text>
<path d="M180.4,1011.5 h8.6 l-4.3,-3.7 z" fill="#444"/>
<rect x="205.00" y="1001.00" width="1.00" height="16.00" fill="#DADADA"/>
<circle cx="224.10" cy="1009.00" r="7.60" fill="none" stroke="#333" stroke-width="1.2"/>
<path d="M219.8,1009 h8.6 M224.1,1004.7 v8.6" fill="none" stroke="#333" stroke-width="1.6"/>
<rect x="0.00" y="1028.00" width="1921.00" height="22.00" fill="#F1F1F1"/>
<rect x="0.00" y="1028.00" width="1921.00" height="1.00" fill="#C6C6C6"/>
<text x="7.2" y="1043.0" font-size="12" fill="#444" textLength="61.0" lengthAdjust="spacingAndGlyphs">Page 1 sur 1</text>
<text x="88.5" y="1043.0" font-size="12" fill="#444" textLength="83.8" lengthAdjust="spacingAndGlyphs">Français (France)</text>
<rect x="194.50" y="1035.00" width="11.50" height="9.50" fill="none" stroke="#777" stroke-width="1"/>
<path d="M197.5,1038 h7 M197.5,1040.5 h7 M197.5,1043 h7" fill="none" stroke="#777" stroke-width="1" stroke-dasharray="1.5 1"/>
<circle cx="195.00" cy="1034.50" r="2.20" fill="#777"/>
<rect x="1650.00" y="1029.00" width="38.00" height="21.00" fill="#B6B6B6"/>
<rect x="1662.00" y="1033.00" width="13.00" height="1.60" fill="#555"/>
<path d="M1663.5,1034.5 v5 h10 v-5 M1668.5,1039.5 v4.5 M1665.5,1044.5 h6" fill="none" stroke="#555" stroke-width="1"/>
<rect x="1693.00" y="1037.80" width="6.00" height="1.60" fill="#444"/>
<rect x="1703.00" y="1038.00" width="100.00" height="1.00" fill="#8A8A8A"/>
<rect x="1753.00" y="1035.50" width="1.00" height="6.00" fill="#8A8A8A"/>
<rect x="1733.00" y="1032.80" width="4.00" height="11.20" fill="#555"/>
<path d="M1806.7,1038.6 h8.5 M1811,1034.3 v8.5" fill="none" stroke="#444" stroke-width="1.6"/>
<text x="1830.0" y="1043.0" font-size="12" fill="#444" textLength="24.0" lengthAdjust="spacingAndGlyphs">66 %</text>
<rect x="1868.50" y="1033.50" width="12.00" height="12.00" fill="none" stroke="#555" stroke-width="1"/>
<path d="M1874.5,1035 v3 M1874.5,1041 v3 M1870,1039.5 h3 M1876,1039.5 h3 M1873.2,1036.5 l1.3,-1.3 l1.3,1.3 M1873.2,1042.5 l1.3,1.3 l1.3,-1.3 M1871.5,1038.2 l-1.3,1.3 l1.3,1.3 M1877.5,1038.2 l1.3,1.3 l-1.3,1.3" fill="none" stroke="#555" stroke-width="0.8"/>
<path d="M1896.5,1037 v-4.5 h5 M1905,1032.5 h5 v4.5 M1900.5,1037.5 h8 v4 h-8 z M1896.5,1039.5 v4.5 h5.5" fill="none" stroke="#555" stroke-width="1.1"/>
<rect x="0.00" y="0.00" width="1921.00" height="59.00" fill="#3955A3"/>
<rect x="0.00" y="59.00" width="1921.00" height="92.00" fill="#F1F1F1"/>
<rect x="0.00" y="151.00" width="1921.00" height="1.00" fill="#D6D6D6"/>
<rect x="63.00" y="35.00" width="66.00" height="25.00" fill="#F1F1F1"/>
<rect x="22.00" y="8.00" width="14.00" height="14.00" fill="#fff" rx="0.6"/>
<rect x="24.20" y="9.20" width="9.80" height="4.70" fill="#3955A3"/>
<rect x="25.20" y="17.20" width="7.80" height="3.50" fill="#3955A3"/>
<rect x="26.90" y="19.30" width="2.40" height="1.40" fill="#fff"/>
<path d="M56.6,8.3 l-4.6,4.2 l4.6,4.2 M52.4,12.5 h7.2 a4,4 0 0 1 0,8 h-0.6" fill="none" stroke="#7F93C8" stroke-width="1.7"/>
<path d="M70.8,13.2 h5.2 l-2.6,2.6 z" fill="#7F93C8"/>
<path d="M96.6,10.6 a5.6,5.6 0 1 1 -7.4,-0.8 M93.4,8.8 h4.6 v4.6" fill="none" stroke="#7F93C8" stroke-width="1.7"/>
<rect x="118.90" y="13.90" width="5.40" height="1.30" fill="#fff"/>
<path d="M118.7,17.1 h5.8 l-2.9,2.9 z" fill="#fff"/>
<text x="959.0" y="22.0" font-size="12" fill="#fff" text-anchor="middle" textLength="246.0" lengthAdjust="spacingAndGlyphs">Schéma électronique.vsdx - Visio Professionnel</text>
<rect x="1800.00" y="15.00" width="10.00" height="1.00" fill="#fff"/>
<path d="M1846.5,13.5 h7 v7 h-7 z M1848.5,13.5 v-2 h7 v7 h-2" fill="none" stroke="#fff" stroke-width="1"/>
<path d="M1892,10 l10,10 M1902,10 l-10,10" fill="none" stroke="#fff" stroke-width="1.2"/>
<text x="1807.0" y="51.0" font-size="12" fill="#fff" textLength="57.0" lengthAdjust="spacingAndGlyphs">Connexion</text>
<path d="M1892,41.5 l10,10 M1902,41.5 l-10,10" fill="none" stroke="#fff" stroke-width="1.2"/>
<text x="12.3" y="51.0" font-size="12.5" fill="#fff" textLength="34.4" lengthAdjust="spacingAndGlyphs">Fichier</text>
<text x="76.7" y="51.0" font-size="12.5" fill="#3955A3" textLength="38.3" lengthAdjust="spacingAndGlyphs">Accueil</text>
<text x="144.3" y="51.0" font-size="12.5" fill="#fff" textLength="45.7" lengthAdjust="spacingAndGlyphs">Insertion</text>
<text x="219.3" y="51.0" font-size="12.5" fill="#fff" textLength="44.7" lengthAdjust="spacingAndGlyphs">Création</text>
<text x="293.3" y="51.0" font-size="12.5" fill="#fff" textLength="45.7" lengthAdjust="spacingAndGlyphs">Données</text>
<text x="368.3" y="51.0" font-size="12.5" fill="#fff" textLength="51.7" lengthAdjust="spacingAndGlyphs">Processus</text>
<text x="449.3" y="51.0" font-size="12.5" fill="#fff" textLength="43.4" lengthAdjust="spacingAndGlyphs">Révision</text>
<text x="522.3" y="51.0" font-size="12.5" fill="#fff" textLength="51.0" lengthAdjust="spacingAndGlyphs">Affichage</text>
<path d="M604.2,46 a3.3,3.3 0 1 1 5.6,0 q-1.3,1.3 -1.3,3 h-3 q0,-1.7 -1.3,-3 z M605.7,51.2 h2.6" fill="none" stroke="#fff" stroke-width="1"/>
<text x="619.3" y="51.0" font-size="12" fill="#DDE3F2" textLength="191.4" lengthAdjust="spacingAndGlyphs">Dites-nous ce que vous voulez faire..</text>
<rect x="13.00" y="70.00" width="24.00" height="24.80" fill="#EDC87E" rx="1.6"/>
<rect x="17.00" y="69.00" width="16.00" height="5.80" fill="#F1F1F1"/>
<rect x="18.00" y="70.00" width="14.00" height="4.00" fill="#808080" rx="0.8"/>
<rect x="22.00" y="67.00" width="6.00" height="4.00" fill="#808080" rx="1.2"/>
<rect x="24.10" y="69.00" width="1.80" height="1.80" fill="#F1F1F1"/>
<path d="M27.8,78.8 h8.2 l4.8,4.8 v12.6 h-13 z" fill="#fff" stroke="#6A6A6A" stroke-width="1.1"/>
<path d="M36,78.8 v4.8 h4.8" fill="none" stroke="#6A6A6A" stroke-width="1"/>
<text x="9.5" y="112.0" font-size="12" fill="#363636" textLength="30.4" lengthAdjust="spacingAndGlyphs">Coller</text>
<path d="M21.8,122.0 h5.2 l-2.6,2.6 z" fill="#444"/>
<path d="M52.6,66 l8,10 M61,66 l-8,10" fill="none" stroke="#B2B2B2" stroke-width="1.7"/>
<circle cx="53.00" cy="76.80" r="2.30" fill="none" stroke="#B2B2B2" stroke-width="1.3"/>
<circle cx="61.00" cy="76.80" r="2.30" fill="none" stroke="#B2B2B2" stroke-width="1.3"/>
<text x="68.7" y="77.8" font-size="12" fill="#9E9E9E" textLength="38.2" lengthAdjust="spacingAndGlyphs">Couper</text>
<path d="M49.5,89.7 h4.4 l2,2 v8 h-6.4 z" fill="#fff" stroke="#666" stroke-width="1"/>
<path d="M55.5,92.9 h5.4 l2.7,2.7 v7 h-8.1 z" fill="#fff" stroke="#666" stroke-width="1"/>
<g shape-rendering="crispEdges"><rect x="51.00" y="92.00" width="3.00" height="1.00" fill="#3B73C4"/><rect x="51.00" y="94.00" width="3.00" height="1.00" fill="#3B73C4"/><rect x="51.00" y="96.00" width="3.00" height="1.00" fill="#3B73C4"/><rect x="57.00" y="95.00" width="3.00" height="1.00" fill="#3B73C4"/><rect x="57.00" y="97.00" width="5.00" height="1.00" fill="#3B73C4"/><rect x="57.00" y="99.00" width="5.00" height="1.00" fill="#3B73C4"/></g>
<text x="68.7" y="101.0" font-size="12" fill="#363636" textLength="34.4" lengthAdjust="spacingAndGlyphs">Copier</text>
<path d="M49.3,118.7 L56.7,114 L61.7,119.3 L56.3,125.7 z" fill="#D9D5D9"/>
<path d="M55.9,115.1 L59,112.7 L63.3,118 L60.4,120.6 z" fill="#ABA7AB"/>
<path d="M60.3,114 L63.7,111.7 L65,113.3 L62,116 z" fill="#BAB6BA"/>
<text x="68.7" y="124.2" font-size="12" fill="#9E9E9E" textLength="148.7" lengthAdjust="spacingAndGlyphs">Reproduire la mise en forme</text>
<text x="77.3" y="146.8" font-size="11.5" fill="#444444" textLength="73.6" lengthAdjust="spacingAndGlyphs">Presse-papiers</text>
<rect x="228.00" y="63.00" width="1.00" height="84.00" fill="#D4D4D4"/>
<rect x="439.80" y="63.00" width="1.00" height="84.00" fill="#D4D4D4"/>
<rect x="590.10" y="63.00" width="1.00" height="84.00" fill="#D4D4D4"/>
<rect x="736.70" y="63.00" width="1.00" height="84.00" fill="#D4D4D4"/>
<rect x="898.10" y="63.00" width="1.00" height="84.00" fill="#D4D4D4"/>
<rect x="1160.80" y="63.00" width="1.00" height="84.00" fill="#D4D4D4"/>
<rect x="1334.20" y="63.00" width="1.00" height="84.00" fill="#D4D4D4"/>
<rect x="233.50" y="70.50" width="106.00" height="22.00" fill="#fff" stroke="#ABABAB" stroke-width="1"/>
<rect x="340.50" y="70.50" width="51.00" height="22.00" fill="#fff" stroke="#ABABAB" stroke-width="1"/>
<text x="236.8" y="85.5" font-size="12" fill="#363636" textLength="33.0" lengthAdjust="spacingAndGlyphs">Calibri</text>
<path d="M329.2,80.1 h5.6 l-2.8,2.8 z" fill="#555"/>
<text x="344.0" y="85.5" font-size="12" fill="#363636" textLength="21.5" lengthAdjust="spacingAndGlyphs">12pt</text>
<path d="M381.2,80.1 h5.6 l-2.8,2.8 z" fill="#555"/>
<text x="398.1" y="87.2" font-size="14" fill="#444" textLength="9.5" lengthAdjust="spacingAndGlyphs">A</text>
<path d="M406,77 l2.5,-3 l2.5,3 z" fill="#3B73C4"/>
<text x="421.1" y="87.2" font-size="11.5" fill="#444" textLength="7.9" lengthAdjust="spacingAndGlyphs">A</text>
<path d="M427.9,74 h5.1 l-2.55,3 z" fill="#3B73C4"/>
<text x="239.6" y="115.6" font-size="12" fill="#444" font-weight="bold" textLength="8.4" lengthAdjust="spacingAndGlyphs">G</text>
<text x="262.5" y="115.6" font-size="13" fill="#444" font-style="italic" font-weight="bold" style="font-family:&quot;Liberation Serif&quot;,serif">I</text>
<text x="284.2" y="115.6" font-size="12" fill="#444" textLength="7.4" lengthAdjust="spacingAndGlyphs">S</text>
<rect x="283.50" y="117.50" width="8.80" height="1.00" fill="#444"/>
<text x="302.0" y="115.6" font-size="10.5" fill="#444" textLength="16.2" lengthAdjust="spacingAndGlyphs">abc</text>
<rect x="301.50" y="111.50" width="17.20" height="1.00" fill="#444"/>
<text x="324.5" y="115.6" font-size="12.5" fill="#444" textLength="14.7" lengthAdjust="spacingAndGlyphs">Aa</text>
<path d="M343.6,111.6 h5.6 l-2.8,2.8 z" fill="#555"/>
<rect x="358.20" y="101.00" width="1.00" height="21.50" fill="#D4D4D4"/>
<text x="368.8" y="114.5" font-size="14.5" fill="#444" textLength="11.0" lengthAdjust="spacingAndGlyphs">A</text>
<rect x="366.00" y="116.20" width="15.80" height="3.60" fill="#E8000B"/>
<path d="M387.5,111.6 h5.6 l-2.8,2.8 z" fill="#555"/>
<text x="311.5" y="146.8" font-size="11.5" fill="#444444" textLength="29.2" lengthAdjust="spacingAndGlyphs">Police</text>
<path d="M429,144.9 v-4.5 h4.5 M431.5,142.9 l3.5,3.5 M435.3,143.4 v3.3 h-3.3" fill="none" stroke="#777" stroke-width="1"/>
<rect x="467.00" y="70.00" width="22.00" height="23.00" fill="#C6C6C6"/>
<rect x="467.00" y="101.00" width="22.00" height="23.00" fill="#C6C6C6"/>
<rect x="449.00" y="73.00" width="14.00" height="1.00" fill="#555"/><rect x="450.00" y="76.00" width="12.00" height="1.00" fill="#555"/><rect x="449.00" y="79.00" width="14.00" height="1.00" fill="#555"/>
<rect x="471.00" y="77.00" width="14.00" height="1.00" fill="#555"/><rect x="472.00" y="80.00" width="12.00" height="1.00" fill="#555"/><rect x="471.00" y="83.00" width="14.00" height="1.00" fill="#555"/>
<rect x="493.00" y="82.00" width="14.00" height="1.00" fill="#555"/><rect x="494.00" y="85.00" width="12.00" height="1.00" fill="#555"/><rect x="493.00" y="88.00" width="14.00" height="1.00" fill="#555"/>
<rect x="515.00" y="70.00" width="1.00" height="23.00" fill="#D4D4D4"/>
<circle cx="525.40" cy="74.50" r="1.50" fill="#3B73C4"/>
<rect x="529.00" y="74.00" width="8.00" height="1.00" fill="#555"/>
<circle cx="525.40" cy="80.50" r="1.50" fill="#3B73C4"/>
<rect x="529.00" y="80.00" width="8.00" height="1.00" fill="#555"/>
<circle cx="525.40" cy="86.50" r="1.50" fill="#3B73C4"/>
<rect x="529.00" y="86.00" width="8.00" height="1.00" fill="#555"/>
<rect x="546.00" y="70.00" width="1.00" height="23.00" fill="#D4D4D4"/>
<text x="555.0" y="87.8" font-size="14.8" fill="#ABABAB" font-weight="bold" textLength="10.6" lengthAdjust="spacingAndGlyphs">A</text>
<path d="M566.2,81.2 q3.6,-2.6 1.4,-5.8 q-1.4,-1.8 -3.6,-1.2 M563.6,72.4 v2.6 h2.8" fill="none" stroke="#ABABAB" stroke-width="1.2"/>
<rect x="449.00" y="107.00" width="14.00" height="1.00" fill="#555"/><rect x="449.00" y="110.00" width="10.00" height="1.00" fill="#555"/><rect x="449.00" y="113.00" width="14.00" height="1.00" fill="#555"/><rect x="449.00" y="116.00" width="10.00" height="1.00" fill="#555"/>
<rect x="471.00" y="107.00" width="14.00" height="1.00" fill="#555"/><rect x="473.00" y="110.00" width="10.00" height="1.00" fill="#555"/><rect x="471.00" y="113.00" width="14.00" height="1.00" fill="#555"/><rect x="473.00" y="116.00" width="10.00" height="1.00" fill="#555"/>
<rect x="493.00" y="107.00" width="14.00" height="1.00" fill="#555"/><rect x="497.00" y="110.00" width="10.00" height="1.00" fill="#555"/><rect x="493.00" y="113.00" width="14.00" height="1.00" fill="#555"/><rect x="497.00" y="116.00" width="10.00" height="1.00" fill="#555"/>
<rect x="515.00" y="107.00" width="14.00" height="1.00" fill="#555"/><rect x="515.00" y="110.00" width="14.00" height="1.00" fill="#555"/><rect x="515.00" y="113.00" width="14.00" height="1.00" fill="#555"/><rect x="515.00" y="116.00" width="14.00" height="1.00" fill="#555"/>
<rect x="537.00" y="101.00" width="1.00" height="23.00" fill="#D4D4D4"/>
<rect x="545.00" y="105.00" width="16.00" height="1.00" fill="#555"/><rect x="545.00" y="117.00" width="16.00" height="1.00" fill="#555"/>
<rect x="553.00" y="108.00" width="8.00" height="1.00" fill="#555"/><rect x="553.00" y="111.00" width="8.00" height="1.00" fill="#555"/><rect x="553.00" y="114.00" width="8.00" height="1.00" fill="#555"/>
<path d="M545.4,111.5 h6.4 M548.4,108.4 l-3.1,3.1 l3.1,3.1" fill="none" stroke="#3B73C4" stroke-width="1.9"/>
<rect x="567.00" y="105.00" width="16.00" height="1.00" fill="#555"/><rect x="567.00" y="117.00" width="16.00" height="1.00" fill="#555"/>
<rect x="575.00" y="108.00" width="8.00" height="1.00" fill="#555"/><rect x="575.00" y="111.00" width="8.00" height="1.00" fill="#555"/><rect x="575.00" y="114.00" width="8.00" height="1.00" fill="#555"/>
<path d="M567,111.5 h6.4 M570.2,108.4 l3.1,3.1 l-3.1,3.1" fill="none" stroke="#3B73C4" stroke-width="1.9"/>
<text x="478.4" y="146.8" font-size="11.5" fill="#444444" textLength="57.9" lengthAdjust="spacingAndGlyphs">Paragraphe</text>
<path d="M579,144.9 v-4.5 h4.5 M581.5,142.9 l3.5,3.5 M585.3,143.4 v3.3 h-3.3" fill="none" stroke="#777" stroke-width="1"/>
<rect x="595.00" y="62.00" width="103.00" height="23.00" fill="#C6C6C6"/>
<path d="M602.5,66 v12 l3,-2.8 l2,4.5 l1.8,-0.8 l-2,-4.4 h4 z" fill="#fff" stroke="#444" stroke-width="1"/>
<text x="617.5" y="77.7" font-size="12" fill="#363636" textLength="73.3" lengthAdjust="spacing">Outil Pointeur</text>
<rect x="701.50" y="67.50" width="15.50" height="11.00" fill="#fff" stroke="#444" stroke-width="1"/>
<path d="M722.7,72.1 h5.6 l-2.8,2.8 z" fill="#555"/>
<path d="M600.5,99.5 V95.5 H611.5 V92.8" fill="none" stroke="#666" stroke-width="1"/>
<rect x="598.70" y="99.70" width="3.80" height="3.80" fill="#fff" stroke="#3B73C4" stroke-width="1.1"/>
<rect x="609.60" y="88.80" width="3.80" height="3.80" fill="#fff" stroke="#3B73C4" stroke-width="1.1"/>
<text x="617.5" y="101.0" font-size="12" fill="#363636" textLength="61.7" lengthAdjust="spacingAndGlyphs">Connecteur</text>
<path d="M704,91.8 l10.2,7.8 M714.2,91.8 l-10.2,7.8" fill="none" stroke="#2E75B6" stroke-width="2.1"/>
<text x="601.0" y="123.3" font-size="12.5" fill="#444" textLength="9.0" lengthAdjust="spacing">A</text>
<text x="617.5" y="123.5" font-size="12" fill="#363636" textLength="26.7" lengthAdjust="spacingAndGlyphs">Texte</text>
<rect x="708.50" y="118.50" width="7.50" height="7.50" fill="none" stroke="#444" stroke-width="1.1"/>
<circle cx="708.50" cy="118.50" r="1.15" fill="#fff" stroke="#444" stroke-width="0.8"/>
<circle cx="716.00" cy="118.50" r="1.15" fill="#fff" stroke="#444" stroke-width="0.8"/>
<circle cx="708.50" cy="126.00" r="1.15" fill="#fff" stroke="#444" stroke-width="0.8"/>
<circle cx="716.00" cy="126.00" r="1.15" fill="#fff" stroke="#444" stroke-width="0.8"/>
<path d="M702.5,118 v-3 q0,-2 2,-2 h2.5 M700.8,116 l1.7,2.2 l1.7,-2.2 M705.5,111 l2,2 l-2,2" fill="none" stroke="#2E75B6" stroke-width="1.2"/>
<text x="648.8" y="146.5" font-size="11.5" fill="#444444" textLength="29.5" lengthAdjust="spacing">Outils</text>
<rect x="754.80" y="68.50" width="25.00" height="25.50" fill="#F3EFF3" stroke="#C2C2C2" stroke-width="1.2" rx="5.5"/>
<path d="M760.8,96.8 L768.2,88.6 Q772.6,88.2 773,92.6 Q771.5,96.6 767,96.6 Z" fill="#B4B4B4" stroke="#F1F1F1" stroke-width="0.8"/>
<path d="M772.3,87.2 L774.6,84.8 L777.6,87.6 L775.2,90 Z" fill="#B4B4B4" stroke="#F1F1F1" stroke-width="0.6"/>
<path d="M775.4,84 L782.8,75.2 V82.2 L778.2,86.6 Z" fill="#B4B4B4" stroke="#F1F1F1" stroke-width="0.6"/>
<text x="752.2" y="111.7" font-size="12" fill="#9E9E9E" textLength="29.5" lengthAdjust="spacingAndGlyphs">Styles</text>
<text x="744.7" y="127.2" font-size="12" fill="#9E9E9E" textLength="37.0" lengthAdjust="spacingAndGlyphs">rapides</text>
<path d="M784.7,122.6 h5.6 l-2.8,2.8 z" fill="#B4B4B4"/>
<rect x="796.00" y="77.00" width="16.00" height="4.00" fill="#FFF0CC"/>
<path d="M798.2,72.4 l5.5,-5.4 l5.6,5.4 l-5.6,4.4 z" fill="#fff" stroke="#444" stroke-width="1"/>
<path d="M804.2,70.6 v-4.4 q0,-1.4 -1.3,-1.4 q-1.2,0 -1.2,1.4 v1.6" fill="none" stroke="#444" stroke-width="0.9"/>
<path d="M809.6,69.2 q3.6,1.6 1.4,6.8 l-1.2,-0.4 q0.8,-3.4 -1.6,-5.2 z" fill="#3B73C4"/>
<text x="815.8" y="77.7" font-size="12" fill="#363636" textLength="65.5" lengthAdjust="spacingAndGlyphs">Remplissage</text>
<path d="M883.9,72.1 h5.6 l-2.8,2.8 z" fill="#555"/>
<rect x="796.00" y="100.00" width="16.00" height="4.00" fill="#FF0000"/>
<path d="M800,99.8 L804.4,95.2 Q807.2,94 808,96.6 Q807.4,99 804.4,99.8 Z" fill="#3B73C4"/>
<circle cx="806.20" cy="96.60" r="0.90" fill="#fff"/>
<path d="M807.2,93.2 L812,88 V91.6 L809.2,95 Z" fill="#666"/>
<text x="815.8" y="100.5" font-size="12" fill="#363636" textLength="22.2" lengthAdjust="spacingAndGlyphs">Trait</text>
<path d="M840.5,95.1 h5.6 l-2.8,2.8 z" fill="#555"/>
<path d="M797,121.2 L800.4,114 Q800.9,113 802,113 H809 Q810.6,113 810,114.6 L807.2,122.6 Q806.8,123.8 805.4,123.8 H798.6 Q796.6,123.6 797,121.2 Z" fill="#C9C6C9"/>
<path d="M797.6,119.6 L800.8,113.8 Q801.2,113.2 802,113.2 H808.6 Q809.8,113.2 809.4,114.4 L806.6,120.2 Q806.2,121 805.2,121 H798.6 Q797.2,120.8 797.6,119.6 Z" fill="#F1EDF1"/>
<text x="815.8" y="124.0" font-size="12" fill="#9E9E9E" textLength="28.0" lengthAdjust="spacingAndGlyphs">Effets</text>
<path d="M846.7,118.6 h5.6 l-2.8,2.8 z" fill="#B4B4B4"/>
<text x="768.3" y="146.5" font-size="11.5" fill="#444444" textLength="82.0" lengthAdjust="spacingAndGlyphs">Styles de formes</text>
<path d="M887.2,144.9 v-4.5 h4.5 M889.7,142.9 l3.5,3.5 M893.5,143.4 v3.3 h-3.3" fill="none" stroke="#BDBDBD" stroke-width="1"/>
<rect x="909.80" y="67.00" width="1.10" height="27.80" fill="#666"/>
<rect x="912.80" y="70.80" width="12.40" height="6.40" fill="#fff" stroke="#666" stroke-width="1.1"/>
<rect x="923.00" y="81.00" width="14.00" height="13.80" fill="#EFC67B"/>
<path d="M914,88 h7 M917.6,84.6 l-3.6,3.4 l3.6,3.4" fill="none" stroke="#3B73C4" stroke-width="2"/>
<text x="905.0" y="112.3" font-size="12" fill="#363636" textLength="38.0" lengthAdjust="spacing">Aligner</text>
<path d="M921.7,122.3 h5.2 l-2.6,2.6 z" fill="#444"/>
<path d="M968.5,66 v3.8 M975.5,66 v3.8 M955,79.5 h4 M955,86.5 h4 M964.5,80 v6.5 M969,75.5 h6.2" fill="none" stroke="#E0522D" stroke-width="1.1"/>
<rect x="960.70" y="71.80" width="7.80" height="7.60" fill="#fff" stroke="#666" stroke-width="1.1"/>
<rect x="975.70" y="71.80" width="7.80" height="7.60" fill="#fff" stroke="#666" stroke-width="1.1"/>
<rect x="960.70" y="86.80" width="7.80" height="7.60" fill="#fff" stroke="#666" stroke-width="1.1"/>
<text x="948.4" y="112.3" font-size="12" fill="#363636" textLength="42.2" lengthAdjust="spacingAndGlyphs">Position</text>
<path d="M966.7,122.3 h5.2 l-2.6,2.6 z" fill="#444"/>
<path d="M997.5,70 v-4 h4 M1011.5,75 v4.5 h-4" fill="none" stroke="#B4B4B4" stroke-width="1"/>
<rect x="1000.50" y="68.50" width="9.00" height="9.00" fill="#D6D1D6"/>
<text x="1016.3" y="77.9" font-size="12" fill="#9E9E9E" textLength="120.0" lengthAdjust="spacingAndGlyphs">Mettre au premier plan</text>
<path d="M1146.4,72.6 h5.6 l-2.8,2.8 z" fill="#B4B4B4"/>
<rect x="1000.00" y="91.00" width="9.00" height="9.00" fill="#D8D4D8"/>
<rect x="997.80" y="88.80" width="5.00" height="5.00" fill="#F3EFF3" stroke="#B8B8B8" stroke-width="1"/>
<rect x="1006.40" y="97.60" width="5.00" height="5.00" fill="#F3EFF3" stroke="#B8B8B8" stroke-width="1"/>
<text x="1016.3" y="100.9" font-size="12" fill="#9E9E9E" textLength="112.9" lengthAdjust="spacingAndGlyphs">Mettre à l'arrière-plan</text>
<path d="M1139.3,95.6 h5.6 l-2.8,2.8 z" fill="#B4B4B4"/>
<rect x="999.50" y="113.80" width="8.00" height="8.00" fill="none" stroke="#B8B8B8" stroke-width="1"/>
<rect x="1003.00" y="117.20" width="8.00" height="8.00" fill="none" stroke="#B8B8B8" stroke-width="1"/>
<rect x="997.00" y="111.30" width="3.00" height="3.00" fill="#B8B8B8"/>
<rect x="1010.00" y="111.30" width="3.00" height="3.00" fill="#B8B8B8"/>
<rect x="997.00" y="123.00" width="3.00" height="3.00" fill="#B8B8B8"/>
<rect x="1010.00" y="123.00" width="3.00" height="3.00" fill="#B8B8B8"/>
<text x="1016.3" y="124.0" font-size="12" fill="#9E9E9E" textLength="42.2" lengthAdjust="spacingAndGlyphs">Grouper</text>
<path d="M1061.3,118.6 h5.6 l-2.8,2.8 z" fill="#B4B4B4"/>
<text x="1004.6" y="147.0" font-size="11.5" fill="#444444" textLength="50.4" lengthAdjust="spacingAndGlyphs">Organiser</text>
<circle cx="1201.40" cy="75.40" r="9.30" fill="#F3EFF3" stroke="#C6C6C6" stroke-width="1"/>
<rect x="1182.50" y="70.50" width="16.00" height="16.00" fill="#F3EFF3" stroke="#C0C0C0" stroke-width="1"/>
<path d="M1196.5,77.5 l8.9,8.9 l-8.9,8.9 l-8.9,-8.9 z" fill="#F3EFF3" stroke="#C0C0C0" stroke-width="1"/>
<text x="1168.4" y="112.3" font-size="12" fill="#9E9E9E" textLength="56.4" lengthAdjust="spacing">Modifier la</text>
<text x="1176.8" y="127.8" font-size="12" fill="#9E9E9E" textLength="32.1" lengthAdjust="spacing">forme</text>
<path d="M1211.9,123.1 h5.6 l-2.8,2.8 z" fill="#B4B4B4"/>
<circle cx="1240.50" cy="71.50" r="3.80" fill="none" stroke="#2E75B6" stroke-width="1.6"/>
<path d="M1237.8,74.3 l-4.6,4.6" fill="none" stroke="#2E75B6" stroke-width="2"/>
<text x="1250.6" y="77.9" font-size="12" fill="#363636" textLength="59.5" lengthAdjust="spacingAndGlyphs">Rechercher</text>
<path d="M1311.5,72.6 h5.6 l-2.8,2.8 z" fill="#555"/>
<path d="M1231.5,102.6 l4.8,-4.1 h9.6 l-4.8,4.1 z" fill="#666"/>
<path d="M1231.5,98.5 l4.8,-4.1 h9.6 l-4.8,4.1 z" fill="#3B73C4"/>
<path d="M1231.5,94.3 l4.8,-4.1 h9.6 l-4.8,4.1 z" fill="#EBBF78"/>
<text x="1250.6" y="100.9" font-size="12" fill="#363636" textLength="41.4" lengthAdjust="spacingAndGlyphs">Calques</text>
<path d="M1294.4,95.6 h5.6 l-2.8,2.8 z" fill="#555"/>
<path d="M1235.5,111.5 v12 l3,-2.8 l2,4.5 l1.8,-0.8 l-2,-4.4 h4 z" fill="#fff" stroke="#444" stroke-width="1"/>
<text x="1250.6" y="124.0" font-size="12" fill="#363636" textLength="64.2" lengthAdjust="spacingAndGlyphs">Sélectionner</text>
<path d="M1317.4,118.6 h5.6 l-2.8,2.8 z" fill="#555"/>
<text x="1215.4" y="147.0" font-size="11.5" fill="#444444" textLength="64.9" lengthAdjust="spacing">Modification</text>
<path d="M1901,145 l4,-4 l4,4" fill="none" stroke="#555" stroke-width="1.5"/>
</svg></body></html>
